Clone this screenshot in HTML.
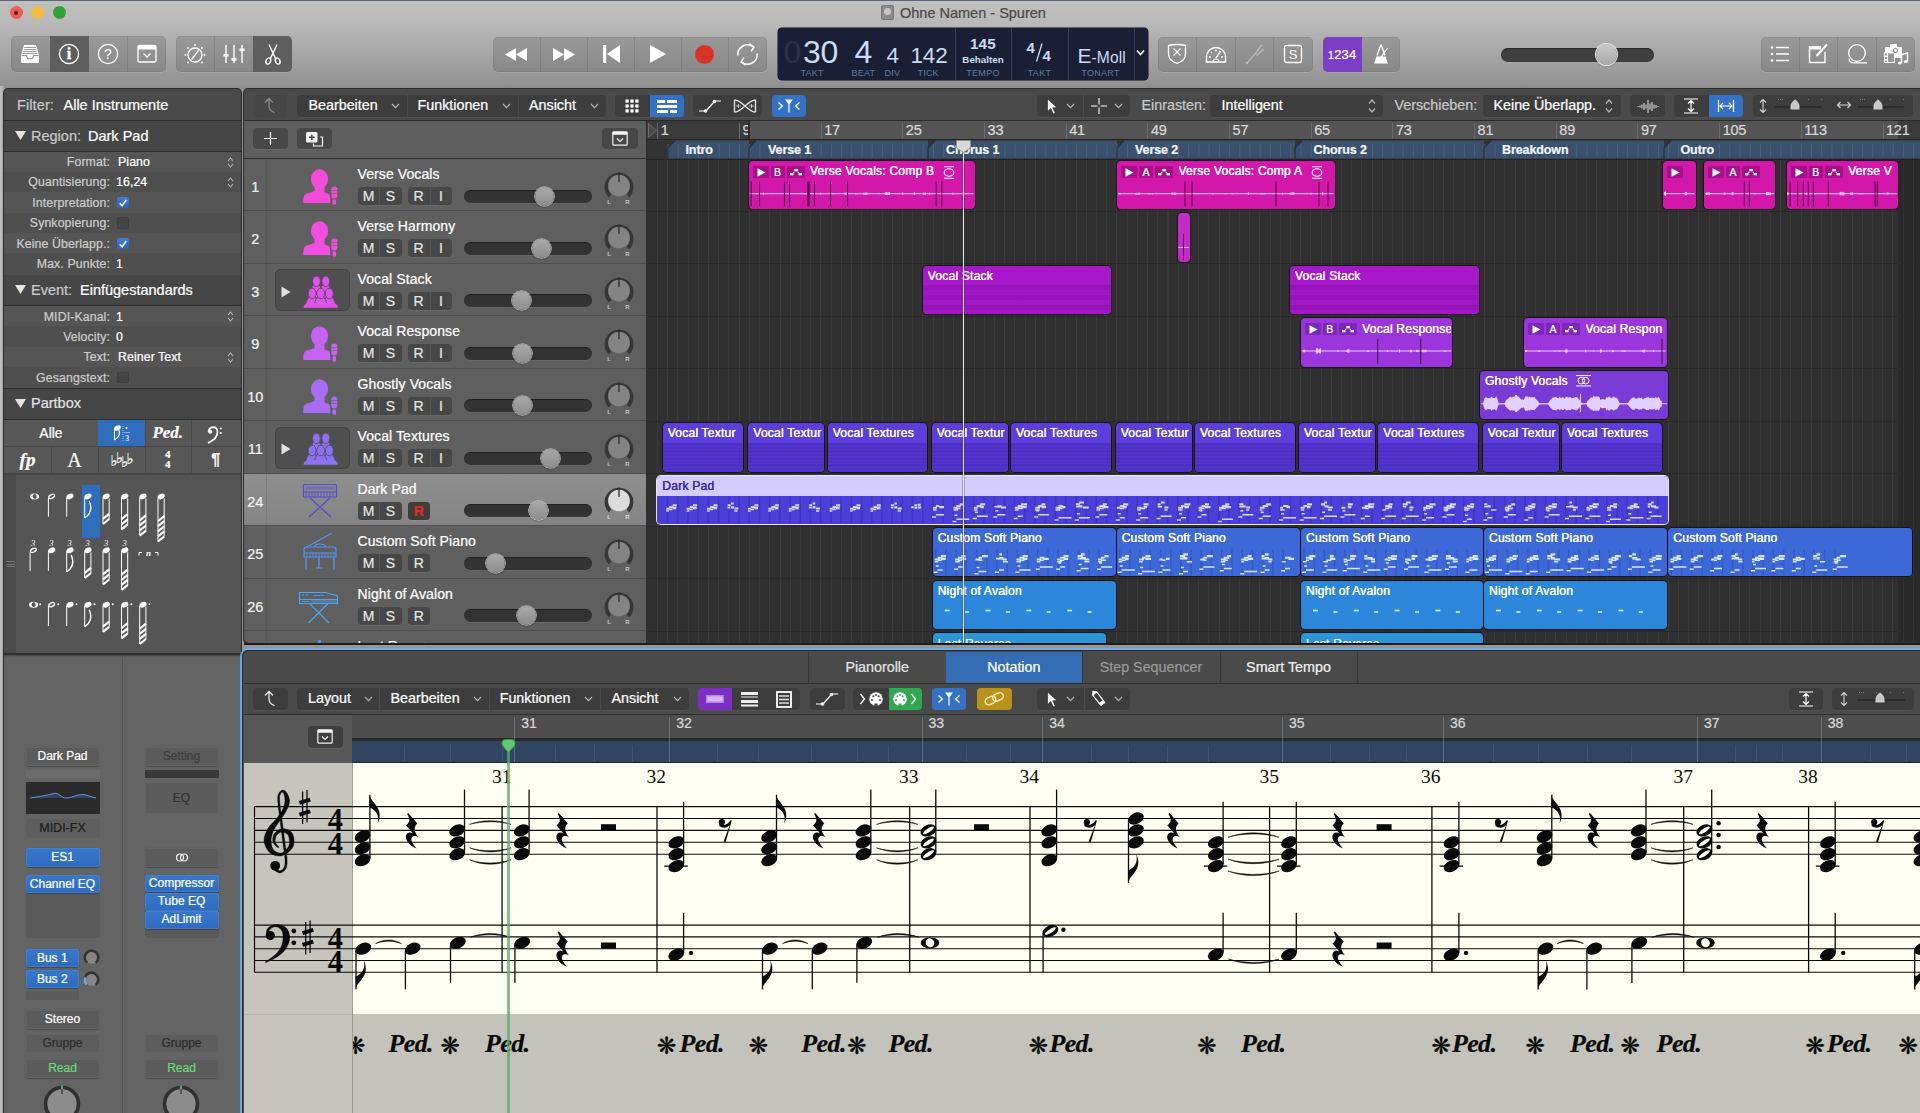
<!DOCTYPE html>
<html lang="de"><head><meta charset="utf-8"><title>Ohne Namen - Spuren</title>
<style>
*{box-sizing:border-box;margin:0;padding:0}
html,body{width:1920px;height:1113px;overflow:hidden;background:#979797;font-family:"Liberation Sans",sans-serif;}
body{position:relative;color:#fff;font-size:13px;-webkit-text-stroke:.22px}
div,svg{position:absolute}
.t{white-space:nowrap;line-height:1}
.c{text-align:center}
.r{text-align:right}
svg{overflow:visible}
svg text{font-family:"Liberation Sans",sans-serif}
svg text.sf{font-family:"Liberation Serif",serif}
</style></head>
<body>
<!-- p1_top -->
<div style="left:0px;top:0px;width:1920px;height:89px;background:linear-gradient(#c0c0be 0,#bababa 20px,#a6a6a6 55px,#939393 84px,#8a8a8a 89px)"></div>
<div style="left:0px;top:86px;width:3.5px;height:1030px;background:linear-gradient(90deg,#c2c2c2,#a2a2a2)"></div>
<div style="left:0px;top:0px;width:1920px;height:1px;background:#5d6680"></div>
<div style="left:9.5px;top:6px;width:13px;height:13px;border-radius:50%;background:#ee5b55"></div>
<div style="left:31.0px;top:6px;width:13px;height:13px;border-radius:50%;background:#f5bd3d"></div>
<div style="left:52.5px;top:6px;width:13px;height:13px;border-radius:50%;background:#2fa33a"></div>
<div style="left:14px;top:10.5px;width:4px;height:4px;border-radius:50%;background:#5a1010"></div>
<div style="left:881px;top:5px;width:13px;height:15px;background:#8a8a8a;border-radius:2px;border:1px solid #777"></div>
<div style="left:884px;top:8px;width:7px;height:7px;background:#c9c9c9;border-radius:50%"></div>
<div class="t" style="left:900px;top:6px;color:#4a4a4a;font-size:14.5px">Ohne Namen - Spuren</div>
<div style="left:11px;top:36px;width:155px;height:36px;background:rgba(60,60,60,.2);border-radius:5px;box-shadow:0 .5px 0 rgba(255,255,255,.25),inset 0 0 0 .5px rgba(0,0,0,.12)"></div>
<div style="left:49.75px;top:36px;width:38.75px;height:36px;background:#5e5e5e;border-radius:0"></div>
<div style="left:126.75px;top:36px;width:1px;height:36px;background:rgba(0,0,0,.10)"></div>
<svg style="left:19.375px;top:43px;" width="22" height="22" viewBox="0 0 22 22"><path d="M5 2h12l3 10v7a1 1 0 0 1-1 1H3a1 1 0 0 1-1-1v-7z" fill="#fff"/><path d="M5.2 4.5h11.6M4.7 6.5h12.6M4.2 8.5h13.6M3.7 10.5h14.6" stroke="#999" stroke-width="1"/><path d="M2.5 12.5h5l1 3h5l1-3h5" fill="none" stroke="#999" stroke-width="1.2"/></svg>
<svg style="left:58.125px;top:43px;" width="22" height="22" viewBox="0 0 22 22"><circle cx="11" cy="11" r="9.6" fill="none" stroke="#fff" stroke-width="1.3"/><text x="11" y="16.300" font-size="16" font-weight="bold" class="sf" text-anchor="middle" fill="#fff" stroke="#fff" stroke-width=".4">i</text></svg>
<svg style="left:96.875px;top:43px;" width="22" height="22" viewBox="0 0 22 22"><circle cx="11" cy="11" r="9.6" fill="none" stroke="#fff" stroke-width="1.2"/><text x="11" y="16" font-size="14" text-anchor="middle" fill="#fff">?</text></svg>
<svg style="left:135.625px;top:43px;" width="22" height="22" viewBox="0 0 22 22"><rect x="2" y="2.5" width="18" height="16.5" rx="1.5" fill="none" stroke="#fff" stroke-width="1.3"/><rect x="2" y="2.5" width="18" height="4" fill="#fff"/><path d="M7.5 10.5l3.5 3.5 3.5-3.5" fill="none" stroke="#fff" stroke-width="1.3"/></svg>
<div style="left:175.5px;top:36px;width:116.5px;height:36px;background:rgba(60,60,60,.2);border-radius:5px;box-shadow:0 .5px 0 rgba(255,255,255,.25),inset 0 0 0 .5px rgba(0,0,0,.12)"></div>
<div style="left:253.16666666666669px;top:36px;width:38.833333333333336px;height:36px;background:#5e5e5e;border-radius:0 5px 5px 0"></div>
<div style="left:213.83333333333334px;top:36px;width:1px;height:36px;background:rgba(0,0,0,.10)"></div>
<svg style="left:182.91666666666666px;top:42px;" width="24" height="24" viewBox="0 0 24 24"><circle cx="12" cy="13" r="7" fill="none" stroke="#fff" stroke-width="1.3"/><path d="M8.500 17.500l7-9" stroke="#fff" stroke-width="1.300"/><g fill="#fff"><circle cx="12" cy="3" r=".9"/><circle cx="5" cy="6" r=".9"/><circle cx="19" cy="6" r=".9"/><circle cx="2.5" cy="13" r=".9"/><circle cx="21.5" cy="13" r=".9"/><circle cx="5" cy="20.5" r=".9"/><circle cx="19" cy="20.5" r=".9"/></g></svg>
<svg style="left:221.75px;top:42px;" width="24" height="24" viewBox="0 0 24 24"><g stroke="#fff" stroke-width="1.4"><path d="M4 3v18M12 3v18M20 3v18"/></g><g fill="#fff"><rect x="1.5" y="12" width="5" height="2.6"/><rect x="9.5" y="16" width="5" height="2.6"/><rect x="17.5" y="6.5" width="5" height="2.6"/></g></svg>
<svg style="left:260.58333333333337px;top:42px;" width="24" height="24" viewBox="0 0 24 24"><g fill="none" stroke="#fff" stroke-width="1.4"><path d="M8 2.5l6.5 14M16 2.5L9.5 16.5"/><ellipse cx="7.300" cy="19" rx="2.200" ry="3.200" transform="rotate(25 7.300 19)"/><ellipse cx="16.700" cy="19" rx="2.200" ry="3.200" transform="rotate(-25 16.700 19)"/></g></svg>
<div style="left:492.5px;top:37px;width:274.5px;height:35px;background:rgba(60,60,60,.2);border-radius:5px;box-shadow:0 .5px 0 rgba(255,255,255,.25),inset 0 0 0 .5px rgba(0,0,0,.12)"></div>
<div style="left:539.5px;top:37px;width:1px;height:35px;background:rgba(0,0,0,.10)"></div>
<div style="left:587.0px;top:37px;width:1px;height:35px;background:rgba(0,0,0,.10)"></div>
<div style="left:634.0px;top:37px;width:1px;height:35px;background:rgba(0,0,0,.10)"></div>
<div style="left:680.5px;top:37px;width:1px;height:35px;background:rgba(0,0,0,.10)"></div>
<div style="left:727.5px;top:37px;width:1px;height:35px;background:rgba(0,0,0,.10)"></div>
<svg style="left:505.25px;top:47.5px;" width="22" height="13" viewBox="0 0 22 13"><path d="M11 0v13L0 6.500zM22 0v13L11 6.500z" fill="#fff"/></svg>
<svg style="left:552.75px;top:47.5px;" width="22" height="13" viewBox="0 0 22 13"><path d="M0 0v13l11-6.500zM11 0v13l11-6.500z" fill="#fff"/></svg>
<svg style="left:602.5px;top:45px;" width="17" height="18" viewBox="0 0 17 18"><rect x="0" y="0" width="3.200" height="18" fill="#fff"/><path d="M17 0v18L4 9z" fill="#fff"/></svg>
<svg style="left:648.75px;top:44px;" width="18" height="20" viewBox="0 0 18 20"><path d="M1 1v18l16-9z" fill="#fff"/></svg>
<div style="left:695.0px;top:44.5px;width:19px;height:19px;border-radius:50%;background:#d93226"></div>
<svg style="left:734.0px;top:40.5px;" width="27" height="27" viewBox="0 0 24 24"><g fill="none" stroke="#fff" stroke-width="1.3"><path d="M3.5 13a8.5 8.5 0 0 1 14-7.5"/><path d="M20.5 11a8.5 8.5 0 0 1-14 7.5"/><path d="M13.5 2.5l4.3 2.8-2.6 4"/><path d="M10.5 21.5l-4.3-2.8 2.6-4"/></g></svg>
<div style="left:777.5px;top:28px;width:370px;height:52px;background:#1b1f36;border-radius:4px;box-shadow:0 0 0 .5px #10121f"></div>
<div style="left:954.5px;top:28px;width:1px;height:52px;background:#343c5c"></div>
<div style="left:1011px;top:28px;width:1px;height:52px;background:#343c5c"></div>
<div style="left:1067.5px;top:28px;width:1px;height:52px;background:#343c5c"></div>
<div style="left:1133.5px;top:28px;width:1px;height:52px;background:#343c5c"></div>
<svg style="left:0px;top:0px;" width="1160" height="90" viewBox="0 0 1160 90"><text x="783.5" y="62.5" font-size="32" fill="#2b314c" text-anchor="start" >0</text><text x="803" y="62.5" font-size="32" fill="#c9dcf2" text-anchor="start" letter-spacing="-.3">30</text><text x="854.5" y="62.5" font-size="32" fill="#c9dcf2" text-anchor="start" >4</text><text x="886.5" y="62.5" font-size="22.5" fill="#c9dcf2" text-anchor="start" >4</text><text x="910.5" y="62.5" font-size="22.5" fill="#c9dcf2" text-anchor="start" letter-spacing="-.2">142</text><text x="800.5" y="76.3" font-size="9" fill="#62799a" text-anchor="start" letter-spacing=".2">TAKT</text><text x="851.5" y="76.3" font-size="9" fill="#62799a" text-anchor="start" letter-spacing=".2">BEAT</text><text x="884.5" y="76.3" font-size="9" fill="#62799a" text-anchor="start" letter-spacing=".2">DIV</text><text x="917.5" y="76.3" font-size="9" fill="#62799a" text-anchor="start" letter-spacing=".2">TICK</text><text x="983" y="48.8" font-size="15.2" fill="#c9dcf2" text-anchor="middle" font-weight="bold" letter-spacing=".3">145</text><text x="983" y="62.5" font-size="9.8" fill="#c9dcf2" text-anchor="middle" font-weight="bold">Behalten</text><text x="983" y="76.3" font-size="9" fill="#62799a" text-anchor="middle" letter-spacing=".3">TEMPO</text><text x="1026.5" y="53" font-size="15" fill="#c9dcf2" text-anchor="start" font-weight="bold">4</text><path d="M1036.500 61.500L1042 43.500" stroke="#c9dcf2" stroke-width="1.300"/><text x="1042.5" y="61" font-size="15" fill="#c9dcf2" text-anchor="start" font-weight="bold">4</text><text x="1039.5" y="76.3" font-size="9" fill="#62799a" text-anchor="middle" letter-spacing=".3">TAKT</text><text x="1077.5" y="62.5" font-size="21" fill="#c9dcf2" text-anchor="start" >E</text><text x="1091.5" y="62.5" font-size="15.6" fill="#c9dcf2" text-anchor="start" letter-spacing=".1">-Moll</text><text x="1100.5" y="76.3" font-size="9" fill="#62799a" text-anchor="middle" letter-spacing=".3">TONART</text></svg>
<svg style="left:1136px;top:49px;" width="9" height="8" viewBox="0 0 9 8"><path d="M1 1.5l3.5 4 3.5-4" fill="none" stroke="#fff" stroke-width="1.6"/></svg>
<div style="left:1158px;top:37px;width:154.5px;height:35px;background:rgba(60,60,60,.2);border-radius:5px;box-shadow:0 .5px 0 rgba(255,255,255,.25),inset 0 0 0 .5px rgba(0,0,0,.12)"></div>
<div style="left:1196.125px;top:37px;width:1px;height:35px;background:rgba(0,0,0,.10)"></div>
<div style="left:1234.75px;top:37px;width:1px;height:35px;background:rgba(0,0,0,.10)"></div>
<div style="left:1273.375px;top:37px;width:1px;height:35px;background:rgba(0,0,0,.10)"></div>
<svg style="left:1166.3125px;top:42px;" width="22" height="24" viewBox="0 0 22 24"><path d="M2.500 3.500q8.500-2 17 0v8.500c0 5-4 8-8.500 9.500c-4.500-1.500-8.500-4.500-8.500-9.500z" fill="none" stroke="#fff" stroke-width="1.3"/><path d="M7.500 6.500l7 7M14.500 6.500l-7 7" stroke="#fff" stroke-width="1.3"/></svg>
<svg style="left:1203.9375px;top:43px;" width="24" height="22" viewBox="0 0 24 22"><path d="M2.500 19v-5a9.500 9.500 0 0 1 19 0v5z" fill="none" stroke="#fff" stroke-width="1.3"/><path d="M12 15l4.500-7" stroke="#fff" stroke-width="1.5"/><g fill="#fff"><circle cx="6" cy="14" r=".9"/><circle cx="7.500" cy="9.500" r=".9"/><circle cx="12" cy="7.500" r=".9"/><circle cx="18" cy="14" r=".9"/></g><path d="M9 19a3 3 0 0 1 6 0" fill="none" stroke="#fff" stroke-width="1.2"/></svg>
<svg style="left:1243.5625px;top:43px;" width="22" height="22" viewBox="0 0 22 22"><g fill="none" stroke="#c4c4c4" stroke-width="1.3" opacity=".8"><path d="M3 20l8-9M11 11l6.500-9M12.500 12.500l7-6"/></g><circle cx="3" cy="20" r="1.200" fill="#c4c4c4"/></svg>
<svg style="left:1283.1875px;top:44px;" width="20" height="20" viewBox="0 0 20 20"><rect x="1.500" y="1.500" width="17" height="17" rx="2" fill="none" stroke="#fff" stroke-width="1.3"/><text x="10" y="14.500" font-size="13" text-anchor="middle" fill="#fff">S</text></svg>
<div style="left:1323px;top:37px;width:77px;height:35px;background:rgba(60,60,60,.2);border-radius:5px;box-shadow:0 .5px 0 rgba(255,255,255,.25),inset 0 0 0 .5px rgba(0,0,0,.12)"></div>
<div style="left:1323px;top:37px;width:38.5px;height:35px;background:#7b3fc6;border-radius:5px 0 0 5px"></div>
<div class="t c" style="left:1323px;top:37px;width:38.5px;height:35px;color:#fff;font-size:13px;line-height:35px;letter-spacing:.2px"><span style="font-size:10.5px">1</span>234</div>
<svg style="left:1370.75px;top:42px;" width="20" height="24" viewBox="0 0 20 24"><path d="M10 2.500L6 13.500M10 2.500L14 13.500" fill="none" stroke="#fff" stroke-width="1.300"/><path d="M5.500 14.500h9l2.500 7H3z" fill="#fff"/><path d="M9.500 16L16.500 6" stroke="#fff" stroke-width="1.300"/></svg>
<div style="left:1501px;top:47.5px;width:152.5px;height:14.5px;background:#3f3f3f;border-radius:8px;box-shadow:inset 0 1px 1px rgba(0,0,0,.4)"></div>
<div style="left:1595.5px;top:44px;width:21px;height:21px;background:linear-gradient(#c9c9c9,#a9a9a9);border-radius:50%;box-shadow:0 0 0 1px #e6e6e6,0 1px 2px rgba(0,0,0,.5)"></div>
<div style="left:1760.5px;top:36.5px;width:154.5px;height:35.5px;background:rgba(60,60,60,.2);border-radius:5px;box-shadow:0 .5px 0 rgba(255,255,255,.25),inset 0 0 0 .5px rgba(0,0,0,.12)"></div>
<div style="left:1798.625px;top:36.5px;width:1px;height:35.5px;background:rgba(0,0,0,.10)"></div>
<div style="left:1837.25px;top:36.5px;width:1px;height:35.5px;background:rgba(0,0,0,.10)"></div>
<div style="left:1875.875px;top:36.5px;width:1px;height:35.5px;background:rgba(0,0,0,.10)"></div>
<svg style="left:1769.8125px;top:45px;" width="20" height="18" viewBox="0 0 20 18"><g fill="#fff"><circle cx="2" cy="2.500" r="1.300"/><circle cx="2" cy="9" r="1.300"/><circle cx="2" cy="15.500" r="1.300"/></g><path d="M6 2.500h13M6 9h13M6 15.500h13" stroke="#fff" stroke-width="1.400"/></svg>
<svg style="left:1807.4375px;top:42px;" width="22" height="22" viewBox="0 0 22 22"><path d="M14 5H2.500v15.500H18V10" fill="none" stroke="#fff" stroke-width="1.400"/><rect x="2" y="4.500" width="12" height="3" fill="#fff"/><path d="M9.500 14L20 2.500" stroke="#fff" stroke-width="2"/></svg>
<svg style="left:1846.0625px;top:43px;" width="22" height="22" viewBox="0 0 22 22"><circle cx="11" cy="10" r="8.300" fill="none" stroke="#fff" stroke-width="1.300"/><path d="M3 15.500c0 3 2 4.300 5 4.300h13" fill="none" stroke="#fff" stroke-width="1.300"/></svg>
<svg style="left:1882.6875px;top:41px;" width="27" height="26" viewBox="0 0 27 26"><g fill="#fff"><rect x="2" y="6" width="17" height="11" rx="1"/><rect x="7" y="3" width="7" height="4" rx="1"/><rect x="1" y="11" width="11" height="11"/></g><circle cx="12.500" cy="9.500" r="2.600" fill="#999"/><circle cx="12.500" cy="9.500" r="1.400" fill="#fff"/><g fill="#999"><rect x="2" y="12.500" width="2" height="2"/><rect x="2" y="16" width="2" height="2"/><rect x="2" y="19.500" width="2" height="1.500"/><rect x="5" y="12.500" width="6" height="8.500"/></g><g stroke="#fff" stroke-width="1.500" fill="none"><path d="M18.500 22v-8.500l6-1.500v8.500"/></g><ellipse cx="16.800" cy="22" rx="2" ry="1.600" fill="#fff"/><ellipse cx="22.800" cy="20.500" rx="2" ry="1.600" fill="#fff"/><path d="M17.500 12l8-2v11" fill="none" stroke="#999" stroke-width=".1"/></svg>
<!-- p2_insp -->
<div style="left:3px;top:88px;width:238.5px;height:567px;background:#2c2c2c;border-radius:5px 5px 0 0"></div>
<div style="left:4px;top:151.5px;width:236.5px;height:123px;background:#4f4f4f"></div>
<div style="left:4px;top:306px;width:236.5px;height:82px;background:#4f4f4f"></div>
<div style="left:4px;top:89px;width:236.5px;height:31px;background:#4a4a4a;border-radius:4px 4px 0 0"></div>
<div class="t" style="left:17px;top:97.5px;font-size:14px;color:#c9c9c9;font-size:14.500px;letter-spacing:.1px">Filter:</div>
<div class="t" style="left:63.5px;top:97.5px;font-size:14px;color:#fff;font-size:14.500px;letter-spacing:0">Alle Instrumente</div>
<div style="left:4px;top:121px;width:236.5px;height:29.5px;background:#464646"></div>
<svg style="left:15px;top:131px;" width="11" height="9" viewBox="0 0 11 9"><path d="M0 0h11L5.500 9z" fill="#e4e4e4"/></svg>
<div class="t" style="left:31px;top:128.5px;font-size:14px;color:#c9c9c9;font-size:14.500px">Region:</div>
<div class="t" style="left:88px;top:128.5px;font-size:14px;color:#fff;font-size:14.500px">Dark Pad</div>
<div style="left:4px;top:151.5px;width:236.5px;height:20.4px;background:#555555"></div>
<div class="t r" style="left:4px;top:156.0px;width:106px;height:12px;color:#cdcdcd;font-size:12.300px;line-height:12px;letter-spacing:.12px">Format:</div>
<div class="t" style="left:118px;top:156.0px;color:#fff;font-size:12.300px;letter-spacing:.1px">Piano</div>
<svg style="left:227px;top:156.5px;" width="7" height="11" viewBox="0 0 7 11"><path d="M1 4l2.500-3 2.500 3M1 7l2.500 3 2.500-3" fill="none" stroke="#b8b8b8" stroke-width="1.100"/></svg>
<div style="left:4px;top:171.9px;width:236.5px;height:20.4px;background:#4f4f4f"></div>
<div class="t r" style="left:4px;top:176.4px;width:106px;height:12px;color:#cdcdcd;font-size:12.300px;line-height:12px;letter-spacing:.12px">Quantisierung:</div>
<div class="t" style="left:116px;top:176.4px;color:#fff;font-size:12.300px;letter-spacing:.1px">16,24</div>
<svg style="left:227px;top:176.9px;" width="7" height="11" viewBox="0 0 7 11"><path d="M1 4l2.500-3 2.500 3M1 7l2.500 3 2.500-3" fill="none" stroke="#b8b8b8" stroke-width="1.100"/></svg>
<div style="left:4px;top:192.3px;width:236.5px;height:20.4px;background:#555555"></div>
<div class="t r" style="left:4px;top:196.8px;width:106px;height:12px;color:#cdcdcd;font-size:12.300px;line-height:12px;letter-spacing:.12px">Interpretation:</div>
<div style="left:117px;top:196.8px;width:11.5px;height:11.5px;background:linear-gradient(#3c7fdb,#2a63c0);border-radius:2.500px"></div><svg style="left:117px;top:196.8px;" width="12" height="12" viewBox="0 0 12 12"><path d="M2.800 6.200l2.300 2.600 4.200-5.800" fill="none" stroke="#fff" stroke-width="1.500"/></svg>
<div style="left:4px;top:212.7px;width:236.5px;height:20.4px;background:#4f4f4f"></div>
<div class="t r" style="left:4px;top:217.2px;width:106px;height:12px;color:#cdcdcd;font-size:12.300px;line-height:12px;letter-spacing:.12px">Synkopierung:</div>
<div style="left:117px;top:217.2px;width:11.5px;height:11.5px;background:#454545;border-radius:2.500px;box-shadow:inset 0 0 0 .5px #3a3a3a"></div>
<div style="left:4px;top:233.1px;width:236.5px;height:20.4px;background:#555555"></div>
<div class="t r" style="left:4px;top:237.6px;width:106px;height:12px;color:#cdcdcd;font-size:12.300px;line-height:12px;letter-spacing:.12px">Keine Überlapp.:</div>
<div style="left:117px;top:237.6px;width:11.5px;height:11.5px;background:linear-gradient(#3c7fdb,#2a63c0);border-radius:2.500px"></div><svg style="left:117px;top:237.6px;" width="12" height="12" viewBox="0 0 12 12"><path d="M2.800 6.200l2.300 2.600 4.200-5.800" fill="none" stroke="#fff" stroke-width="1.500"/></svg>
<div style="left:4px;top:253.5px;width:236.5px;height:20.4px;background:#4f4f4f"></div>
<div class="t r" style="left:4px;top:258.0px;width:106px;height:12px;color:#cdcdcd;font-size:12.300px;line-height:12px;letter-spacing:.12px">Max. Punkte:</div>
<div class="t" style="left:116px;top:258.0px;color:#fff;font-size:12.300px;letter-spacing:.1px">1</div>
<div style="left:4px;top:274.5px;width:236.5px;height:30.5px;background:#464646"></div>
<svg style="left:15px;top:285px;" width="11" height="9" viewBox="0 0 11 9"><path d="M0 0h11L5.500 9z" fill="#e4e4e4"/></svg>
<div class="t" style="left:31px;top:282.5px;font-size:14px;color:#c9c9c9;font-size:14.500px">Event:</div>
<div class="t" style="left:80px;top:282.5px;font-size:14px;color:#fff;font-size:14.500px">Einfügestandards</div>
<div style="left:4px;top:306.0px;width:236.5px;height:20.4px;background:#555555"></div>
<div class="t r" style="left:4px;top:310.5px;width:106px;height:12px;color:#cdcdcd;font-size:12.300px;line-height:12px;letter-spacing:.12px">MIDI-Kanal:</div>
<div class="t" style="left:116px;top:310.5px;color:#fff;font-size:12.300px;letter-spacing:.1px">1</div>
<svg style="left:227px;top:311.0px;" width="7" height="11" viewBox="0 0 7 11"><path d="M1 4l2.500-3 2.500 3M1 7l2.500 3 2.500-3" fill="none" stroke="#b8b8b8" stroke-width="1.100"/></svg>
<div style="left:4px;top:326.4px;width:236.5px;height:20.4px;background:#4f4f4f"></div>
<div class="t r" style="left:4px;top:330.9px;width:106px;height:12px;color:#cdcdcd;font-size:12.300px;line-height:12px;letter-spacing:.12px">Velocity:</div>
<div class="t" style="left:116px;top:330.9px;color:#fff;font-size:12.300px;letter-spacing:.1px">0</div>
<div style="left:4px;top:346.8px;width:236.5px;height:20.4px;background:#555555"></div>
<div class="t r" style="left:4px;top:351.3px;width:106px;height:12px;color:#cdcdcd;font-size:12.300px;line-height:12px;letter-spacing:.12px">Text:</div>
<div class="t" style="left:118px;top:351.3px;color:#fff;font-size:12.300px;letter-spacing:.1px">Reiner Text</div>
<svg style="left:227px;top:351.8px;" width="7" height="11" viewBox="0 0 7 11"><path d="M1 4l2.500-3 2.500 3M1 7l2.500 3 2.500-3" fill="none" stroke="#b8b8b8" stroke-width="1.100"/></svg>
<div style="left:4px;top:367.2px;width:236.5px;height:20.4px;background:#4f4f4f"></div>
<div class="t r" style="left:4px;top:371.7px;width:106px;height:12px;color:#cdcdcd;font-size:12.300px;line-height:12px;letter-spacing:.12px">Gesangstext:</div>
<div style="left:117px;top:371.7px;width:11.5px;height:11.5px;background:#454545;border-radius:2.500px;box-shadow:inset 0 0 0 .5px #3a3a3a"></div>
<div style="left:4px;top:388.5px;width:236.5px;height:30.5px;background:#464646"></div>
<svg style="left:15px;top:399px;" width="11" height="9" viewBox="0 0 11 9"><path d="M0 0h11L5.500 9z" fill="#e4e4e4"/></svg>
<div class="t" style="left:31px;top:396px;font-size:14px;color:#e2e2e2;font-size:14.500px">Partbox</div>
<div style="left:4px;top:420px;width:236.5px;height:53px;background:#575757"></div>
<div style="left:4px;top:446px;width:236.5px;height:1px;background:#474747"></div>
<div style="left:4px;top:473px;width:236.5px;height:1.5px;background:#444"></div>
<div style="left:98px;top:420px;width:46.5px;height:26px;background:#2f6dbd"></div>
<div style="left:144.5px;top:420px;width:1px;height:26px;background:#4a4a4a"></div>
<div style="left:191px;top:420px;width:1px;height:26px;background:#4a4a4a"></div>
<div style="left:51px;top:447px;width:1px;height:26px;background:#4a4a4a"></div>
<div style="left:98px;top:447px;width:1px;height:26px;background:#4a4a4a"></div>
<div style="left:144.5px;top:447px;width:1px;height:26px;background:#4a4a4a"></div>
<div style="left:191px;top:447px;width:1px;height:26px;background:#4a4a4a"></div>
<div class="t c" style="left:4px;top:426px;width:94px;height:14px;color:#fff;font-size:14px;line-height:14px">Alle</div>
<svg style="left:110px;top:424px;" width="24" height="20" viewBox="0 0 24 20"><path d="M4.500 4v12" stroke="#fff" stroke-width="1"/><ellipse cx="7.500" cy="4" rx="3.500" ry="2.400" fill="#fff" transform="rotate(-25 7.500 4)"/><path d="M4.500 16c5-3 6-7 4-11" fill="none" stroke="#fff" stroke-width="1.200"/><path d="M13 2v16" stroke="#9fc0ea" stroke-width="1" stroke-dasharray="1 1"/><circle cx="16.500" cy="4" r="1" fill="#fff"/><path d="M14 8.500h6" stroke="#9fc0ea" stroke-width=".8"/><text x="17" y="17" font-size="8.500" font-weight="bold" class="sf" text-anchor="middle" fill="#cfe0f5">3</text></svg>
<div class="t c" style="left:144.5px;top:423px;width:46.5px;height:20px;color:#fff;font-size:17px;line-height:20px;font-family:'Liberation Serif',serif;font-style:italic;font-weight:bold">Ped.</div>
<svg style="left:206px;top:424px;" width="20" height="20" viewBox="0 0 20 20"><path d="M2.500 7.500c0-5 9-6.500 9 .5c0 5-4 8.500-9.500 11" fill="none" stroke="#fff" stroke-width="1.800"/><circle cx="4.200" cy="7.800" r="2" fill="#fff"/><circle cx="14.800" cy="4.500" r="1.100" fill="#fff"/><circle cx="14.800" cy="9" r="1.100" fill="#fff"/></svg>
<div class="t c" style="left:4px;top:449px;width:47px;height:22px;color:#fff;font-size:19px;line-height:22px;font-family:'Liberation Serif',serif;font-style:italic;font-weight:bold">fp</div>
<div class="t c" style="left:51px;top:449px;width:47px;height:22px;color:#fff;font-size:20px;line-height:22px;font-family:'Liberation Serif',serif">A</div>
<div class="t c" style="left:98px;top:449px;width:46.5px;height:22px;color:#fff;font-size:14.500px;font-weight:bold;line-height:22px;font-family:'DejaVu Sans',sans-serif;letter-spacing:-1.500px"><span style="position:relative;top:1px">♭</span><span style="position:relative;top:-2px">♭</span><span style="position:relative;top:2px">♭</span><span style="position:relative;top:-1px">♭</span></div>
<div class="t c" style="left:144.5px;top:449px;width:46.5px;height:11px;color:#fff;font-size:11px;line-height:11px;font-family:'Liberation Serif',serif;font-weight:bold">4</div>
<div class="t c" style="left:144.5px;top:459px;width:46.5px;height:11px;color:#fff;font-size:11px;line-height:11px;font-family:'Liberation Serif',serif;font-weight:bold">4</div>
<div class="t c" style="left:191px;top:449px;width:49.5px;height:22px;color:#fff;font-size:16px;line-height:22px;font-weight:bold">¶</div>
<div style="left:4px;top:474.5px;width:236.5px;height:178.5px;background:#555"></div>
<div style="left:4px;top:474.5px;width:12px;height:178.5px;background:#4b4b4b"></div>
<div style="left:7px;top:561px;width:8px;height:1px;background:#777"></div>
<div style="left:7px;top:563.5px;width:8px;height:1px;background:#777"></div>
<div style="left:7px;top:566px;width:8px;height:1px;background:#777"></div>
<div style="left:82px;top:484.5px;width:18px;height:53.5px;background:#2f6dbd"></div>
<svg style="left:0px;top:0px;" width="241" height="655" viewBox="0 0 241 655"><ellipse cx="34.6" cy="496.4" rx="4.600" ry="3" fill="#fff"/><ellipse cx="34.6" cy="496.4" rx="2" ry="2.300" fill="#555" transform="rotate(-30 34.6 496.4)"/><path d="M48.4 497.4V516.7" stroke="#fff" stroke-width="1"/><ellipse cx="51.699999999999996" cy="496.4" rx="3.700" ry="2.500" fill="#fff" transform="rotate(-25 51.699999999999996 496.4)"/><ellipse cx="51.699999999999996" cy="496.4" rx="2.600" ry="1" fill="#555" transform="rotate(-30 51.699999999999996 496.4)"/><path d="M66.7 497.4V516.7" stroke="#fff" stroke-width="1"/><ellipse cx="70.0" cy="496.4" rx="3.700" ry="2.600" fill="#fff" transform="rotate(-25 70.0 496.4)"/><path d="M84.7 497.4V518" stroke="#fff" stroke-width="1"/><ellipse cx="88.0" cy="496.4" rx="3.700" ry="2.600" fill="#fff" transform="rotate(-25 88.0 496.4)"/><path d="M84.7 518c6-4 8-9 4.500-17" fill="none" stroke="#fff" stroke-width="1.300"/><path d="M103 497.4V524" stroke="#fff" stroke-width="1"/><ellipse cx="106.3" cy="496.4" rx="3.700" ry="2.600" fill="#fff" transform="rotate(-25 106.3 496.4)"/><path d="M103 524.0l6.200-5" stroke="#fff" stroke-width="2.200"/><path d="M103 518.9l6.200-5" stroke="#fff" stroke-width="2.200"/><path d="M109.2 519V498.4" stroke="#fff" stroke-width="1"/><path d="M121.5 497.4V529.4" stroke="#fff" stroke-width="1"/><ellipse cx="124.8" cy="496.4" rx="3.700" ry="2.600" fill="#fff" transform="rotate(-25 124.8 496.4)"/><path d="M121.5 529.4l6.200-5" stroke="#fff" stroke-width="2.200"/><path d="M121.5 524.3l6.200-5" stroke="#fff" stroke-width="2.200"/><path d="M121.5 519.1999999999999l6.200-5" stroke="#fff" stroke-width="2.200"/><path d="M127.7 524.4V498.4" stroke="#fff" stroke-width="1"/><path d="M139.7 497.4V535.6" stroke="#fff" stroke-width="1"/><ellipse cx="143.0" cy="496.4" rx="3.700" ry="2.600" fill="#fff" transform="rotate(-25 143.0 496.4)"/><path d="M139.7 535.6l6.200-5" stroke="#fff" stroke-width="2.200"/><path d="M139.7 530.5l6.200-5" stroke="#fff" stroke-width="2.200"/><path d="M139.7 525.4l6.200-5" stroke="#fff" stroke-width="2.200"/><path d="M139.7 520.3000000000001l6.200-5" stroke="#fff" stroke-width="2.200"/><path d="M145.89999999999998 530.6V498.4" stroke="#fff" stroke-width="1"/><path d="M158 497.4V541.5" stroke="#fff" stroke-width="1"/><ellipse cx="161.3" cy="496.4" rx="3.700" ry="2.600" fill="#fff" transform="rotate(-25 161.3 496.4)"/><path d="M158 541.5l6.200-5" stroke="#fff" stroke-width="2.200"/><path d="M158 536.4l6.200-5" stroke="#fff" stroke-width="2.200"/><path d="M158 531.3l6.200-5" stroke="#fff" stroke-width="2.200"/><path d="M158 526.2l6.200-5" stroke="#fff" stroke-width="2.200"/><path d="M158 521.1l6.200-5" stroke="#fff" stroke-width="2.200"/><path d="M164.2 536.5V498.4" stroke="#fff" stroke-width="1"/><path d="M30.1 551.3V571" stroke="#fff" stroke-width="1"/><ellipse cx="33.4" cy="550.3" rx="3.700" ry="2.500" fill="#fff" transform="rotate(-25 33.4 550.3)"/><ellipse cx="33.4" cy="550.3" rx="2.600" ry="1" fill="#555" transform="rotate(-30 33.4 550.3)"/><text x="33.1" y="545.8" font-size="8.500" font-style="italic" class="sf" text-anchor="middle" fill="#fff">3</text><path d="M48.4 551.3V571" stroke="#fff" stroke-width="1"/><ellipse cx="51.699999999999996" cy="550.3" rx="3.700" ry="2.600" fill="#fff" transform="rotate(-25 51.699999999999996 550.3)"/><text x="51.4" y="545.8" font-size="8.500" font-style="italic" class="sf" text-anchor="middle" fill="#fff">3</text><path d="M66.7 551.3V572" stroke="#fff" stroke-width="1"/><ellipse cx="70.0" cy="550.3" rx="3.700" ry="2.600" fill="#fff" transform="rotate(-25 70.0 550.3)"/><path d="M66.7 572c6-4 8-9 4.500-17" fill="none" stroke="#fff" stroke-width="1.300"/><text x="69.7" y="545.8" font-size="8.500" font-style="italic" class="sf" text-anchor="middle" fill="#fff">3</text><path d="M84.7 551.3V578" stroke="#fff" stroke-width="1"/><ellipse cx="88.0" cy="550.3" rx="3.700" ry="2.600" fill="#fff" transform="rotate(-25 88.0 550.3)"/><path d="M84.7 578.0l6.200-5" stroke="#fff" stroke-width="2.200"/><path d="M84.7 572.9l6.200-5" stroke="#fff" stroke-width="2.200"/><path d="M90.9 573V552.3" stroke="#fff" stroke-width="1"/><text x="87.7" y="545.8" font-size="8.500" font-style="italic" class="sf" text-anchor="middle" fill="#fff">3</text><path d="M103 551.3V584.5" stroke="#fff" stroke-width="1"/><ellipse cx="106.3" cy="550.3" rx="3.700" ry="2.600" fill="#fff" transform="rotate(-25 106.3 550.3)"/><path d="M103 584.5l6.200-5" stroke="#fff" stroke-width="2.200"/><path d="M103 579.4l6.200-5" stroke="#fff" stroke-width="2.200"/><path d="M103 574.3l6.200-5" stroke="#fff" stroke-width="2.200"/><path d="M109.2 579.5V552.3" stroke="#fff" stroke-width="1"/><text x="106.0" y="545.8" font-size="8.500" font-style="italic" class="sf" text-anchor="middle" fill="#fff">3</text><path d="M121.5 551.3V590" stroke="#fff" stroke-width="1"/><ellipse cx="124.8" cy="550.3" rx="3.700" ry="2.600" fill="#fff" transform="rotate(-25 124.8 550.3)"/><path d="M121.5 590.0l6.200-5" stroke="#fff" stroke-width="2.200"/><path d="M121.5 584.9l6.200-5" stroke="#fff" stroke-width="2.200"/><path d="M121.5 579.8l6.200-5" stroke="#fff" stroke-width="2.200"/><path d="M121.5 574.7l6.200-5" stroke="#fff" stroke-width="2.200"/><path d="M127.7 585V552.3" stroke="#fff" stroke-width="1"/><text x="124.5" y="545.8" font-size="8.500" font-style="italic" class="sf" text-anchor="middle" fill="#fff">3</text><path d="M139 555.500v-3h3M158 555.500v-3h-3" fill="none" stroke="#fff" stroke-width="1"/><text x="148.500" y="555.500" font-size="9" font-style="italic" font-weight="bold" class="sf" text-anchor="middle" fill="#fff">n</text><ellipse cx="33.6" cy="604.7" rx="4.600" ry="3" fill="#fff"/><ellipse cx="33.6" cy="604.7" rx="2" ry="2.300" fill="#555" transform="rotate(-30 33.6 604.7)"/><circle cx="40.1" cy="604.2" r="1" fill="#fff"/><path d="M48.4 605.7V626" stroke="#fff" stroke-width="1"/><ellipse cx="51.699999999999996" cy="604.7" rx="3.700" ry="2.500" fill="#fff" transform="rotate(-25 51.699999999999996 604.7)"/><ellipse cx="51.699999999999996" cy="604.7" rx="2.600" ry="1" fill="#555" transform="rotate(-30 51.699999999999996 604.7)"/><circle cx="58.199999999999996" cy="604.2" r="1" fill="#fff"/><path d="M66.7 605.7V626" stroke="#fff" stroke-width="1"/><ellipse cx="70.0" cy="604.7" rx="3.700" ry="2.600" fill="#fff" transform="rotate(-25 70.0 604.7)"/><circle cx="76.5" cy="604.2" r="1" fill="#fff"/><path d="M84.7 605.7V626.7" stroke="#fff" stroke-width="1"/><ellipse cx="88.0" cy="604.7" rx="3.700" ry="2.600" fill="#fff" transform="rotate(-25 88.0 604.7)"/><path d="M84.7 626.7c6-4 8-9 4.500-17" fill="none" stroke="#fff" stroke-width="1.300"/><circle cx="94.5" cy="604.2" r="1" fill="#fff"/><path d="M103 605.7V631.8" stroke="#fff" stroke-width="1"/><ellipse cx="106.3" cy="604.7" rx="3.700" ry="2.600" fill="#fff" transform="rotate(-25 106.3 604.7)"/><path d="M103 631.8l6.200-5" stroke="#fff" stroke-width="2.200"/><path d="M103 626.6999999999999l6.200-5" stroke="#fff" stroke-width="2.200"/><path d="M109.2 626.8V606.7" stroke="#fff" stroke-width="1"/><circle cx="112.8" cy="604.2" r="1" fill="#fff"/><path d="M121.5 605.7V638.4" stroke="#fff" stroke-width="1"/><ellipse cx="124.8" cy="604.7" rx="3.700" ry="2.600" fill="#fff" transform="rotate(-25 124.8 604.7)"/><path d="M121.5 638.4l6.200-5" stroke="#fff" stroke-width="2.200"/><path d="M121.5 633.3l6.200-5" stroke="#fff" stroke-width="2.200"/><path d="M121.5 628.1999999999999l6.200-5" stroke="#fff" stroke-width="2.200"/><path d="M127.7 633.4V606.7" stroke="#fff" stroke-width="1"/><circle cx="131.3" cy="604.2" r="1" fill="#fff"/><path d="M139.7 605.7V644" stroke="#fff" stroke-width="1"/><ellipse cx="143.0" cy="604.7" rx="3.700" ry="2.600" fill="#fff" transform="rotate(-25 143.0 604.7)"/><path d="M139.7 644.0l6.200-5" stroke="#fff" stroke-width="2.200"/><path d="M139.7 638.9l6.200-5" stroke="#fff" stroke-width="2.200"/><path d="M139.7 633.8l6.200-5" stroke="#fff" stroke-width="2.200"/><path d="M139.7 628.7l6.200-5" stroke="#fff" stroke-width="2.200"/><path d="M145.89999999999998 639V606.7" stroke="#fff" stroke-width="1"/><circle cx="149.5" cy="604.2" r="1" fill="#fff"/></svg>
<!-- p3_strips -->
<div style="left:3px;top:653px;width:238.5px;height:460px;background:#2e2e2e"></div>
<div style="left:4px;top:654.5px;width:236.5px;height:460px;background:#646464"></div>
<div style="left:122px;top:654.5px;width:1px;height:460px;background:#505050"></div>
<div style="left:4px;top:654.5px;width:236.5px;height:2px;background:linear-gradient(#4a4a4a,#646464)"></div>
<div class="t c" style="left:25.5px;top:747px;width:74px;height:18.5px;border-radius:3px;font-size:12px;line-height:18.500px;background:#5b5b5b;box-shadow:inset 0 0 0 .5px #6e6e6e,0 .5px 1px rgba(0,0,0,.25);color:#fff">Dark Pad</div>
<div class="t c" style="left:144.5px;top:747px;width:74px;height:18.5px;border-radius:3px;font-size:12px;line-height:18.500px;background:#5b5b5b;box-shadow:inset 0 0 0 .5px #6e6e6e,0 .5px 1px rgba(0,0,0,.25);color:#3c3c3c">Setting</div>
<div style="left:25.5px;top:770px;width:74px;height:8px;background:#6c6c6c;border-radius:1px"></div>
<div style="left:144.5px;top:770px;width:74px;height:8px;background:#393939;border-radius:1px"></div>
<div style="left:25.5px;top:781.5px;width:74px;height:32px;background:#2b2b2b"></div>
<svg style="left:25.5px;top:781.5px;" width="74" height="32" viewBox="0 0 74 32"><path d="M4 16c8-1 16-2.500 24-4.500c5-1 7 4 12 4.500c6 .5 10-4 17-3.500c5 .5 8 2.500 13 3.500" fill="#3d5f8c" fill-opacity=".5" stroke="#5f94dd" stroke-width="1"/></svg>
<div class="t c" style="left:144.5px;top:781.5px;width:74px;height:32px;background:#5c5c5c;color:#303030;font-size:12px;line-height:32px;box-shadow:inset 0 0 0 .5px #6a6a6a">EQ</div>
<div class="t c" style="left:25.5px;top:819px;width:74px;height:18.5px;border-radius:3px;font-size:12px;line-height:18.500px;background:#5e5e5e;color:#1c1c1c;font-size:12.500px">MIDI-FX</div>
<div class="t c" style="left:25.5px;top:848px;width:74px;height:18.5px;border-radius:3px;font-size:12px;line-height:18.500px;background:linear-gradient(#3878cc,#2d6bbd);box-shadow:inset 0 0 0 .5px #4d8ad8,0 .5px 1px rgba(0,0,0,.3);color:#fff;">ES1</div>
<div style="left:144.5px;top:848px;width:74px;height:18.5px;border-radius:3px;font-size:12px;line-height:18.500px;background:#5b5b5b;box-shadow:inset 0 0 0 .5px #6e6e6e,0 .5px 1px rgba(0,0,0,.25);"></div>
<svg style="left:174.5px;top:852.5px;" width="14" height="9" viewBox="0 0 14 9"><circle cx="5" cy="4.500" r="3.500" fill="none" stroke="#f0f0f0" stroke-width="1.200"/><circle cx="9" cy="4.500" r="3.500" fill="none" stroke="#f0f0f0" stroke-width="1.200"/></svg>
<div style="left:25.5px;top:874.5px;width:74px;height:63px;background:#5a5a5a;border-radius:3px"></div>
<div style="left:144.5px;top:874.5px;width:74px;height:63px;background:#5a5a5a;border-radius:3px"></div>
<div class="t c" style="left:25.5px;top:874.5px;width:74px;height:18.5px;border-radius:3px;font-size:12px;line-height:18.500px;background:linear-gradient(#3878cc,#2d6bbd);box-shadow:inset 0 0 0 .5px #4d8ad8,0 .5px 1px rgba(0,0,0,.3);color:#fff;">Channel EQ</div>
<div class="t c" style="left:144.5px;top:874.5px;width:74px;height:17.8px;border-radius:3px;font-size:12px;line-height:18.500px;background:linear-gradient(#3878cc,#2d6bbd);box-shadow:inset 0 0 0 .5px #4d8ad8,0 .5px 1px rgba(0,0,0,.3);color:#fff;line-height:17.800px">Compressor</div>
<div class="t c" style="left:144.5px;top:892.8px;width:74px;height:17.8px;border-radius:3px;font-size:12px;line-height:18.500px;background:linear-gradient(#3878cc,#2d6bbd);box-shadow:inset 0 0 0 .5px #4d8ad8,0 .5px 1px rgba(0,0,0,.3);color:#fff;line-height:17.800px">Tube EQ</div>
<div class="t c" style="left:144.5px;top:911.1px;width:74px;height:17.8px;border-radius:3px;font-size:12px;line-height:18.500px;background:linear-gradient(#3878cc,#2d6bbd);box-shadow:inset 0 0 0 .5px #4d8ad8,0 .5px 1px rgba(0,0,0,.3);color:#fff;line-height:17.800px">AdLimit</div>
<div class="t c" style="left:25.5px;top:948.5px;width:53.5px;height:18.5px;border-radius:3px;font-size:12px;line-height:18.500px;background:linear-gradient(#3878cc,#2d6bbd);box-shadow:inset 0 0 0 .5px #4d8ad8,0 .5px 1px rgba(0,0,0,.3);color:#fff;">Bus 1</div>
<div class="t c" style="left:25.5px;top:969.5px;width:53.5px;height:18.5px;border-radius:3px;font-size:12px;line-height:18.500px;background:linear-gradient(#3878cc,#2d6bbd);box-shadow:inset 0 0 0 .5px #4d8ad8,0 .5px 1px rgba(0,0,0,.3);color:#fff;">Bus 2</div>
<div style="left:25.5px;top:991px;width:53.5px;height:8.5px;background:#5c5c5c;border-radius:2px"></div>
<svg style="left:82.5px;top:949.0px;" width="17" height="17" viewBox="0 0 17 17"><circle cx="8.500" cy="8.500" r="6.300" fill="#868686"/><path d="M4.300 13.800A6.800 6.800 0 1 1 12.700 13.800" fill="none" stroke="#353535" stroke-width="2.600"/></svg>
<svg style="left:82.5px;top:970.5px;" width="17" height="17" viewBox="0 0 17 17"><circle cx="8.500" cy="8.500" r="6.300" fill="#868686"/><path d="M4.300 13.800A6.800 6.800 0 1 1 12.700 13.800" fill="none" stroke="#353535" stroke-width="2.600"/><path d="M4 13.500A6.500 6.500 0 0 1 2.300 6.500" fill="none" stroke="#6aa9ee" stroke-width="2.600"/></svg>
<div class="t c" style="left:25.5px;top:1009.5px;width:74px;height:19px;border-radius:3px;font-size:12px;line-height:18.500px;background:#5b5b5b;box-shadow:inset 0 0 0 .5px #6e6e6e,0 .5px 1px rgba(0,0,0,.25);color:#fff;line-height:19px">Stereo</div>
<div class="t c" style="left:25.5px;top:1034px;width:74px;height:19px;border-radius:3px;font-size:12px;line-height:18.500px;background:#5d5d5d;color:#2c2c2c;line-height:19px;box-shadow:inset 0 0 0 .5px #6a6a6a">Gruppe</div>
<div class="t c" style="left:25.5px;top:1059px;width:74px;height:19px;border-radius:3px;font-size:12px;line-height:18.500px;background:#5b5b5b;box-shadow:inset 0 0 0 .5px #6e6e6e,0 .5px 1px rgba(0,0,0,.25);color:#6bd876;line-height:19px">Read</div>
<div class="t c" style="left:144.5px;top:1034px;width:74px;height:19px;border-radius:3px;font-size:12px;line-height:18.500px;background:#5d5d5d;color:#2c2c2c;line-height:19px;box-shadow:inset 0 0 0 .5px #6a6a6a">Gruppe</div>
<div class="t c" style="left:144.5px;top:1059px;width:74px;height:19px;border-radius:3px;font-size:12px;line-height:18.500px;background:#5b5b5b;box-shadow:inset 0 0 0 .5px #6e6e6e,0 .5px 1px rgba(0,0,0,.25);color:#6bd876;line-height:19px">Read</div>
<svg style="left:42.4px;top:1084px;" width="40" height="40" viewBox="0 0 40 40"><circle cx="20" cy="20" r="16.500" fill="#8c8c8c" stroke="#303030" stroke-width="3.600"/><path d="M20 1.500v4" stroke="#52d79a" stroke-width="1.500"/><path d="M20 5.500v4.500" stroke="#4a2a2a" stroke-width="1.300"/></svg>
<svg style="left:161px;top:1084px;" width="40" height="40" viewBox="0 0 40 40"><circle cx="20" cy="20" r="16.500" fill="#8c8c8c" stroke="#303030" stroke-width="3.600"/><path d="M20 1.500v4" stroke="#52d79a" stroke-width="1.500"/><path d="M20 5.500v4.500" stroke="#4a2a2a" stroke-width="1.300"/></svg>
<!-- p4_tracks -->
<div style="left:243px;top:88px;width:1680px;height:557px;background:#2a2a2a;border-radius:5px 0 0 6px"></div>
<div style="left:244px;top:89px;width:1676px;height:31px;background:#4a4a4a;border-radius:4px 0 0 0"></div>
<div style="left:253px;top:94.5px;width:34px;height:22.5px;background:#464646;border-radius:4px"></div>
<svg style="left:263px;top:97px;" width="14" height="17" viewBox="0 0 14 17"><path d="M2 5.500L6 1.500l4 4M6 2v7c0 3.500 2 5.500 5.500 6.500" fill="none" stroke="#8a8a8a" stroke-width="1.300"/></svg>
<div style="left:296.5px;top:94.5px;width:309px;height:22.5px;background:#3d3d3d;border-radius:4px;box-shadow:0 .5px 0 rgba(255,255,255,.08)"></div>
<div style="left:406.5px;top:94.5px;width:1px;height:22.5px;background:#4a4a4a"></div>
<div style="left:518px;top:94.5px;width:1px;height:22.5px;background:#4a4a4a"></div>
<div class="t" style="left:308.5px;top:98px;color:#fff;font-size:14.300px">Bearbeiten</div>
<svg style="left:390.5px;top:103px;" width="9" height="6" viewBox="0 0 9 6"><path d="M1 1l3.500 3.700 3.500-3.700" fill="none" stroke="#b5b5b5" stroke-width="1.200"/></svg>
<div class="t" style="left:417.5px;top:98px;color:#fff;font-size:14.300px">Funktionen</div>
<svg style="left:501.5px;top:103px;" width="9" height="6" viewBox="0 0 9 6"><path d="M1 1l3.500 3.700 3.500-3.700" fill="none" stroke="#b5b5b5" stroke-width="1.200"/></svg>
<div class="t" style="left:529px;top:98px;color:#fff;font-size:14.300px">Ansicht</div>
<svg style="left:590px;top:103px;" width="9" height="6" viewBox="0 0 9 6"><path d="M1 1l3.500 3.700 3.500-3.700" fill="none" stroke="#b5b5b5" stroke-width="1.200"/></svg>
<div style="left:615px;top:95px;width:69px;height:21.5px;background:#3d3d3d;border-radius:4px;box-shadow:0 .5px 0 rgba(255,255,255,.08)"></div>
<div style="left:650px;top:95px;width:34px;height:21.5px;background:#3572c6;border-radius:0 4px 4px 0"></div>
<svg style="left:625px;top:99px;" width="14" height="14" viewBox="0 0 14 14"><rect x="0.5" y="0.5" width="3.200" height="3.200" fill="#fff"/><rect x="0.5" y="5.4" width="3.200" height="3.200" fill="#fff"/><rect x="0.5" y="10.3" width="3.200" height="3.200" fill="#fff"/><rect x="5.4" y="0.5" width="3.200" height="3.200" fill="#fff"/><rect x="5.4" y="5.4" width="3.200" height="3.200" fill="#fff"/><rect x="5.4" y="10.3" width="3.200" height="3.200" fill="#fff"/><rect x="10.3" y="0.5" width="3.200" height="3.200" fill="#fff"/><rect x="10.3" y="5.4" width="3.200" height="3.200" fill="#fff"/><rect x="10.3" y="10.3" width="3.200" height="3.200" fill="#fff"/></svg>
<svg style="left:657px;top:99.5px;" width="20" height="13" viewBox="0 0 20 13"><g fill="#fff"><rect x="0" y="0" width="8" height="3"/><rect x="10" y="0" width="10" height="3"/><rect x="0" y="5" width="20" height="3"/><rect x="0" y="10" width="11" height="3"/><rect x="13" y="10" width="7" height="3"/></g></svg>
<div style="left:693px;top:95px;width:69px;height:21.5px;background:#3d3d3d;border-radius:4px;box-shadow:0 .5px 0 rgba(255,255,255,.08)"></div>
<svg style="left:698px;top:98px;" width="24" height="16" viewBox="0 0 24 16"><path d="M1 13h5M8.500 12.500L15.500 4.500M18 3h5" stroke="#fff" stroke-width="1.200" fill="none"/><circle cx="7.500" cy="13" r="1.800" fill="#fff"/><circle cx="16.500" cy="3.500" r="1.800" fill="#fff"/></svg>
<svg style="left:733px;top:98px;" width="24" height="16" viewBox="0 0 24 16"><path d="M1.500 1.800v12.400M22.500 1.800v12.400M1.500 1.800C9 1.800 15 14.200 22.500 14.200M1.500 14.200C9 14.200 15 1.800 22.500 1.800" fill="none" stroke="#e6e6e6" stroke-width="1.300"/><path d="M4 7v2M5.500 6v4M7 7.200v1.600M17 7.200v1.600M18.500 6v4M20 7v2" stroke="#e6e6e6" stroke-width=".8"/></svg>
<div style="left:772px;top:95px;width:34px;height:21.5px;background:#3572c6;border-radius:4px"></div>
<svg style="left:777px;top:98px;" width="24" height="16" viewBox="0 0 24 16"><path d="M1.500 4.500l3.800 3.500-3.800 3.500M22.500 4.500l-3.800 3.500 3.800 3.500" fill="none" stroke="#fff" stroke-width="1.300"/><path d="M8 1.500h8l-3.400 4.500v8.500h-1.200v-8.500z" fill="#fff"/></svg>
<div style="left:1037px;top:95px;width:92.5px;height:21.5px;background:#3d3d3d;border-radius:4px;box-shadow:0 .5px 0 rgba(255,255,255,.08)"></div>
<div style="left:1082.5px;top:95px;width:1px;height:21.5px;background:#4a4a4a"></div>
<svg style="left:1046px;top:97.5px;" width="12" height="17" viewBox="0 0 12 17"><path d="M1.500 1v12.500l3.300-3 2.500 5.500 2-1-2.500-5.300h4.400z" fill="#fff" stroke="#222" stroke-width=".6"/></svg>
<svg style="left:1066px;top:103px;" width="9" height="6" viewBox="0 0 9 6"><path d="M1 1l3.500 3.700 3.500-3.700" fill="none" stroke="#b5b5b5" stroke-width="1.200"/></svg>
<svg style="left:1091px;top:98px;" width="16" height="16" viewBox="0 0 16 16"><path d="M8 0v16M0 8h16" stroke="#fff" stroke-width="1.100"/><rect x="6.500" y="6.500" width="3" height="3" fill="#3d3d3d"/></svg>
<svg style="left:1113.5px;top:103px;" width="9" height="6" viewBox="0 0 9 6"><path d="M1 1l3.500 3.700 3.500-3.700" fill="none" stroke="#b5b5b5" stroke-width="1.200"/></svg>
<div class="t" style="left:1141.5px;top:98px;color:#c9c9c9;font-size:14.300px">Einrasten:</div>
<div style="left:1210px;top:95px;width:173px;height:21.5px;background:#3d3d3d;border-radius:4px;box-shadow:0 .5px 0 rgba(255,255,255,.08)"></div>
<div class="t" style="left:1221.5px;top:98px;color:#fff;font-size:14.300px">Intelligent</div>
<svg style="left:1367.5px;top:99px;" width="8" height="14" viewBox="0 0 8 14"><path d="M1 4.500l3-3.500 3 3.500M1 9.500l3 3.500 3-3.500" fill="none" stroke="#b5b5b5" stroke-width="1.200"/></svg>
<div class="t" style="left:1394.5px;top:98px;color:#c9c9c9;font-size:14.300px">Verschieben:</div>
<div style="left:1482.5px;top:95px;width:138.5px;height:21.5px;background:#3d3d3d;border-radius:4px;box-shadow:0 .5px 0 rgba(255,255,255,.08)"></div>
<div class="t" style="left:1493.5px;top:98px;color:#fff;font-size:14.300px">Keine Überlapp.</div>
<svg style="left:1605px;top:99px;" width="8" height="14" viewBox="0 0 8 14"><path d="M1 4.500l3-3.500 3 3.500M1 9.500l3 3.500 3-3.500" fill="none" stroke="#b5b5b5" stroke-width="1.200"/></svg>
<div style="left:1630px;top:95px;width:34.5px;height:21.5px;background:#3d3d3d;border-radius:4px;box-shadow:0 .5px 0 rgba(255,255,255,.08)"></div>
<svg style="left:1636.5px;top:98.5px;" width="22" height="15" viewBox="0 0 22 15"><g stroke="#e8e8e8" stroke-width="1"><path d="M1 7.0v1.0"/><path d="M3 6.5v2"/><path d="M5 5.5v4"/><path d="M7 4.0v7.0"/><path d="M9 5.5v4"/><path d="M11 1.0v13.0"/><path d="M13 4.5v6"/><path d="M15 3.0v9.0"/><path d="M17 5.5v4"/><path d="M19 6.0v3.0"/><path d="M21 7.0v1.0"/></g></svg>
<div style="left:1673.5px;top:95px;width:69.5px;height:21.5px;background:#3d3d3d;border-radius:4px;box-shadow:0 .5px 0 rgba(255,255,255,.08)"></div>
<div style="left:1709px;top:95px;width:34px;height:21.5px;background:#3572c6;border-radius:0 4px 4px 0"></div>
<svg style="left:1682px;top:98px;" width="18" height="16" viewBox="0 0 18 16"><path d="M2 1h14M2 15h14M9 2.500v11M6 5.500l3-3 3 3M6 10.500l3 3 3-3" fill="none" stroke="#fff" stroke-width="1.200"/></svg>
<svg style="left:1717px;top:98px;" width="18" height="16" viewBox="0 0 18 16"><path d="M1.500 2v12M16.500 2v12M3 8h12M6 5l-3 3 3 3M12 5l3 3-3 3" fill="none" stroke="#fff" stroke-width="1.200"/></svg>
<div style="left:1752.5px;top:95px;width:160.5px;height:21.5px;background:#3d3d3d;border-radius:4px;box-shadow:0 .5px 0 rgba(255,255,255,.08)"></div>
<svg style="left:1758px;top:98px;" width="10" height="16" viewBox="0 0 10 16"><path d="M5 1.500v13M2 4.500l3-3 3 3M2 11.500l3 3 3-3" fill="none" stroke="#d5d5d5" stroke-width="1.100"/></svg>
<div style="left:1775px;top:105.5px;width:47px;height:2px;background:#2b2b2b;border-radius:1px"></div>
<svg style="left:1789px;top:99px;" width="12" height="12" viewBox="0 0 12 12"><path d="M6 .5c2 1.500 4.500 3.500 4.500 6.500v3.500h-9V7C1.500 4 4 2 6 .5z" fill="#c9c9c9"/></svg>
<svg style="left:1836px;top:100px;" width="16" height="10" viewBox="0 0 16 10"><path d="M1.500 5h13M4.500 2l-3 3 3 3M11.500 2l3 3-3 3" fill="none" stroke="#d5d5d5" stroke-width="1.100"/></svg>
<div style="left:1857px;top:105.5px;width:47px;height:2px;background:#2b2b2b;border-radius:1px"></div>
<svg style="left:1872px;top:99px;" width="12" height="12" viewBox="0 0 12 12"><path d="M6 .5c2 1.500 4.500 3.500 4.500 6.500v3.500h-9V7C1.500 4 4 2 6 .5z" fill="#c9c9c9"/></svg>
<div style="left:1778px;top:98.5px;width:1px;height:1.5px;background:#7a7a7a"></div>
<div style="left:1780px;top:98.5px;width:1px;height:1.5px;background:#7a7a7a"></div>
<div style="left:1782px;top:98.5px;width:1px;height:1.5px;background:#7a7a7a"></div>
<div style="left:1795px;top:98.5px;width:1px;height:1.5px;background:#7a7a7a"></div>
<div style="left:1808px;top:98.5px;width:1px;height:1.5px;background:#7a7a7a"></div>
<div style="left:1821px;top:98.5px;width:1px;height:1.5px;background:#7a7a7a"></div>
<div style="left:1860px;top:98.5px;width:1px;height:1.5px;background:#7a7a7a"></div>
<div style="left:1862px;top:98.5px;width:1px;height:1.5px;background:#7a7a7a"></div>
<div style="left:1864px;top:98.5px;width:1px;height:1.5px;background:#7a7a7a"></div>
<div style="left:1877px;top:98.5px;width:1px;height:1.5px;background:#7a7a7a"></div>
<div style="left:1890px;top:98.5px;width:1px;height:1.5px;background:#7a7a7a"></div>
<div style="left:1903px;top:98.5px;width:1px;height:1.5px;background:#7a7a7a"></div>
<div style="left:244px;top:121px;width:401.5px;height:37px;background:#5e5e5e"></div>
<div style="left:244px;top:158px;width:401.5px;height:1.2px;background:#2e2e2e"></div>
<div style="left:253px;top:127.5px;width:35px;height:21.5px;background:#484848;border-radius:4px;box-shadow:0 .5px 0 rgba(255,255,255,.1)"></div>
<svg style="left:264px;top:131.5px;" width="13" height="13" viewBox="0 0 13 13"><path d="M6.500 0v13M0 6.500h13" stroke="#f2f2f2" stroke-width="1.200"/></svg>
<div style="left:296.5px;top:127.5px;width:35.5px;height:21.5px;background:#484848;border-radius:4px;box-shadow:0 .5px 0 rgba(255,255,255,.1)"></div>
<svg style="left:305px;top:130.5px;" width="19" height="16" viewBox="0 0 19 16"><path d="M8.500 12.500v2.500h9v-9h-2.500" fill="none" stroke="#f2f2f2" stroke-width="1.200"/><rect x="1" y="1" width="11.500" height="10.500" rx="1.500" fill="#f2f2f2"/><path d="M6.800 3.500v5.500M4 6.300h5.600" stroke="#484848" stroke-width="1.400"/></svg>
<div style="left:602px;top:127.5px;width:35.5px;height:21.5px;background:#484848;border-radius:4px;box-shadow:0 .5px 0 rgba(255,255,255,.1)"></div>
<svg style="left:612px;top:131px;" width="16" height="15" viewBox="0 0 16 15"><rect x=".8" y=".8" width="14.400" height="13.400" rx="1" fill="none" stroke="#f2f2f2" stroke-width="1.200"/><rect x=".8" y=".8" width="14.400" height="3" fill="#f2f2f2"/><path d="M5 7.500l3 3 3-3" fill="none" stroke="#f2f2f2" stroke-width="1.200"/></svg>
<div style="left:244px;top:159.0px;width:401.5px;height:52.650000000000006px;background:#5f5f5f"></div>
<div style="left:244px;top:210.45px;width:401.5px;height:1px;background:#4e4e4e"></div>
<div style="left:266px;top:159.0px;width:1px;height:51.45px;background:#585858"></div>
<div class="t c" style="left:244px;top:178.92499999999998px;width:22.5px;height:16px;color:#f2f2f2;font-size:14.500px;line-height:16px">1</div>
<svg style="left:302px;top:168.0px;" width="40" height="40" viewBox="0 0 40 40"><ellipse cx="17.500" cy="11" rx="8.600" ry="9.800" fill="#f54bdb"/><path d="M12.500 17h10v7.500l3.500 1.200c2 .7 2.300 2.500 2.300 9.300H1.200c0-6.500.8-8.500 3.800-9.500l7.500-2.500z" fill="#f54bdb"/><rect x="29.300" y="18.600" width="6" height="12" rx="3" fill="#f54bdb"/><rect x="30.600" y="31.200" width="3.400" height="5.500" rx="1.200" fill="#f54bdb"/><path d="M29.300 22.500h6M29.300 25.500h6" stroke="#5f5f5f" stroke-width=".8" opacity=".7"/></svg>
<div class="t" style="left:357.5px;top:167.0px;color:#fff;font-size:14px;letter-spacing:.1px">Verse Vocals</div>
<div style="left:357.5px;top:187.0px;width:44px;height:18px;background:#474747;box-shadow:0 .5px 0 rgba(255,255,255,.12);color:#e6e6e6;font-size:14px;line-height:18px;border-radius:3.500px"></div>
<div style="left:379.2px;top:187.0px;width:1px;height:18px;background:#555"></div>
<div class="t c" style="left:357.5px;top:187.0px;width:22px;height:18px;color:#e6e6e6;font-size:14px;line-height:18.500px">M</div>
<div class="t c" style="left:379.5px;top:187.0px;width:22px;height:18px;color:#e6e6e6;font-size:14px;line-height:18.500px">S</div>
<div style="left:407.5px;top:187.0px;width:44.5px;height:18px;background:#474747;box-shadow:0 .5px 0 rgba(255,255,255,.12);color:#e6e6e6;font-size:14px;line-height:18px;border-radius:3.500px"></div>
<div style="left:429.5px;top:187.0px;width:1px;height:18px;background:#555"></div>
<div class="t c" style="left:407.5px;top:187.0px;width:22px;height:18px;color:#e6e6e6;font-size:14px;line-height:18.500px">R</div>
<div class="t c" style="left:430px;top:187.0px;width:22px;height:18px;color:#e6e6e6;font-size:14px;line-height:18.500px">I</div>
<div style="left:463.5px;top:189.5px;width:128.5px;height:13px;background:#333;border-radius:7px;box-shadow:inset 0 1px 1px rgba(0,0,0,.4),0 .5px 0 rgba(255,255,255,.1)"></div>
<div style="left:535.2px;top:186.5px;width:19px;height:19px;border-radius:50%;background:linear-gradient(#a9a9a9,#8d8d8d);box-shadow:0 0 0 .8px #b5b5b5,0 1px 2px rgba(0,0,0,.5)"></div>
<svg style="left:603.5px;top:170.0px;" width="30" height="34" viewBox="0 0 30 34"><path d="M6 26A12.600 12.600 0 1 1 24 26" fill="none" stroke="#363636" stroke-width="3.700"/><circle cx="15" cy="15.500" r="10.800" fill="#848484"/><path d="M15 2.500v9.500" stroke="#2a2a2a" stroke-width="1.300"/><text x="5" y="33.500" font-size="6" font-weight="bold" fill="#c4c4c4" text-anchor="middle">L</text><text x="23.500" y="33.500" font-size="6" font-weight="bold" fill="#c4c4c4" text-anchor="middle">R</text></svg>
<div style="left:244px;top:211.45px;width:401.5px;height:52.650000000000006px;background:#5f5f5f"></div>
<div style="left:244px;top:262.9px;width:401.5px;height:1px;background:#4e4e4e"></div>
<div style="left:266px;top:211.45px;width:1px;height:51.45px;background:#585858"></div>
<div class="t c" style="left:244px;top:231.37499999999997px;width:22.5px;height:16px;color:#f2f2f2;font-size:14.500px;line-height:16px">2</div>
<svg style="left:302px;top:220.45px;" width="40" height="40" viewBox="0 0 40 40"><ellipse cx="17.500" cy="11" rx="8.600" ry="9.800" fill="#f24fe2"/><path d="M12.500 17h10v7.500l3.500 1.200c2 .7 2.300 2.500 2.300 9.300H1.200c0-6.500.8-8.500 3.800-9.500l7.500-2.500z" fill="#f24fe2"/><rect x="29.300" y="18.600" width="6" height="12" rx="3" fill="#f24fe2"/><rect x="30.600" y="31.200" width="3.400" height="5.500" rx="1.200" fill="#f24fe2"/><path d="M29.300 22.500h6M29.300 25.500h6" stroke="#5f5f5f" stroke-width=".8" opacity=".7"/></svg>
<div class="t" style="left:357.5px;top:219.45px;color:#fff;font-size:14px;letter-spacing:.1px">Verse Harmony</div>
<div style="left:357.5px;top:239.45px;width:44px;height:18px;background:#474747;box-shadow:0 .5px 0 rgba(255,255,255,.12);color:#e6e6e6;font-size:14px;line-height:18px;border-radius:3.500px"></div>
<div style="left:379.2px;top:239.45px;width:1px;height:18px;background:#555"></div>
<div class="t c" style="left:357.5px;top:239.45px;width:22px;height:18px;color:#e6e6e6;font-size:14px;line-height:18.500px">M</div>
<div class="t c" style="left:379.5px;top:239.45px;width:22px;height:18px;color:#e6e6e6;font-size:14px;line-height:18.500px">S</div>
<div style="left:407.5px;top:239.45px;width:44.5px;height:18px;background:#474747;box-shadow:0 .5px 0 rgba(255,255,255,.12);color:#e6e6e6;font-size:14px;line-height:18px;border-radius:3.500px"></div>
<div style="left:429.5px;top:239.45px;width:1px;height:18px;background:#555"></div>
<div class="t c" style="left:407.5px;top:239.45px;width:22px;height:18px;color:#e6e6e6;font-size:14px;line-height:18.500px">R</div>
<div class="t c" style="left:430px;top:239.45px;width:22px;height:18px;color:#e6e6e6;font-size:14px;line-height:18.500px">I</div>
<div style="left:463.5px;top:241.95px;width:128.5px;height:13px;background:#333;border-radius:7px;box-shadow:inset 0 1px 1px rgba(0,0,0,.4),0 .5px 0 rgba(255,255,255,.1)"></div>
<div style="left:532.0px;top:238.95px;width:19px;height:19px;border-radius:50%;background:linear-gradient(#a9a9a9,#8d8d8d);box-shadow:0 0 0 .8px #b5b5b5,0 1px 2px rgba(0,0,0,.5)"></div>
<svg style="left:603.5px;top:222.45px;" width="30" height="34" viewBox="0 0 30 34"><path d="M6 26A12.600 12.600 0 1 1 24 26" fill="none" stroke="#363636" stroke-width="3.700"/><circle cx="15" cy="15.500" r="10.800" fill="#848484"/><path d="M15 2.500v9.500" stroke="#2a2a2a" stroke-width="1.300"/><text x="5" y="33.500" font-size="6" font-weight="bold" fill="#c4c4c4" text-anchor="middle">L</text><text x="23.500" y="33.500" font-size="6" font-weight="bold" fill="#c4c4c4" text-anchor="middle">R</text></svg>
<div style="left:244px;top:263.9px;width:401.5px;height:52.650000000000006px;background:#5f5f5f"></div>
<div style="left:244px;top:315.34999999999997px;width:401.5px;height:1px;background:#4e4e4e"></div>
<div style="left:266px;top:263.9px;width:1px;height:51.45px;background:#585858"></div>
<div class="t c" style="left:244px;top:283.825px;width:22.5px;height:16px;color:#f2f2f2;font-size:14.500px;line-height:16px">3</div>
<div style="left:274.5px;top:269.4px;width:75px;height:42px;background:#4f4f4f;border-radius:6px;box-shadow:inset 0 0 0 1px #434343"></div>
<svg style="left:281px;top:285.9px;" width="10" height="12" viewBox="0 0 10 12"><path d="M.5 .5v11l9-5.500z" fill="#e2e2e2"/></svg>
<svg style="left:302.5px;top:273.9px;" width="40" height="40" viewBox="0 0 40 40"><path d="M6.9 24c0-10.4 3.7-12.4 4.3-13.9h4.4c0 1.500 3.7 2 4.3 13.9z" fill="#e052ee" stroke="#4f4f4f" stroke-width=".9"/><ellipse cx="13.4" cy="7.3" rx="4" ry="5.28" fill="#e052ee" stroke="#4f4f4f" stroke-width=".9"/><path d="M16.3 24c0-10.4 3.7-12.4 4.3-13.9h4.4c0 1.500 3.7 2 4.3 13.9z" fill="#e052ee" stroke="#4f4f4f" stroke-width=".9"/><ellipse cx="22.8" cy="7.3" rx="4" ry="5.28" fill="#e052ee" stroke="#4f4f4f" stroke-width=".9"/><path d="M2.8999999999999995 31c0-5.2 3.4-7.2 4.0-8.7h4.4c0 1.500 3.4 2 4.0 8.7z" fill="#e052ee" stroke="#4f4f4f" stroke-width=".9"/><ellipse cx="9.1" cy="19.5" rx="4" ry="5.28" fill="#e052ee" stroke="#4f4f4f" stroke-width=".9"/><path d="M20.1 31c0-5.2 3.4-7.2 4.0-8.7h4.4c0 1.500 3.4 2 4.0 8.7z" fill="#e052ee" stroke="#4f4f4f" stroke-width=".9"/><ellipse cx="26.3" cy="19.5" rx="4" ry="5.28" fill="#e052ee" stroke="#4f4f4f" stroke-width=".9"/><path d="M11.5 31c0-5.2 3.4-7.2 4.0-8.7h4.4c0 1.500 3.4 2 4.0 8.7z" fill="#e052ee" stroke="#4f4f4f" stroke-width=".9"/><ellipse cx="17.7" cy="19.5" rx="4" ry="5.28" fill="#e052ee" stroke="#4f4f4f" stroke-width=".9"/><path d="M.5 33.800c0-3 2-4.500 6-4.500h22.500c4 0 6 1.500 6 4.500z" fill="#e052ee"/></svg>
<div class="t" style="left:357.5px;top:271.9px;color:#fff;font-size:14px;letter-spacing:.1px">Vocal Stack</div>
<div style="left:357.5px;top:291.9px;width:44px;height:18px;background:#474747;box-shadow:0 .5px 0 rgba(255,255,255,.12);color:#e6e6e6;font-size:14px;line-height:18px;border-radius:3.500px"></div>
<div style="left:379.2px;top:291.9px;width:1px;height:18px;background:#555"></div>
<div class="t c" style="left:357.5px;top:291.9px;width:22px;height:18px;color:#e6e6e6;font-size:14px;line-height:18.500px">M</div>
<div class="t c" style="left:379.5px;top:291.9px;width:22px;height:18px;color:#e6e6e6;font-size:14px;line-height:18.500px">S</div>
<div style="left:407.5px;top:291.9px;width:44.5px;height:18px;background:#474747;box-shadow:0 .5px 0 rgba(255,255,255,.12);color:#e6e6e6;font-size:14px;line-height:18px;border-radius:3.500px"></div>
<div style="left:429.5px;top:291.9px;width:1px;height:18px;background:#555"></div>
<div class="t c" style="left:407.5px;top:291.9px;width:22px;height:18px;color:#e6e6e6;font-size:14px;line-height:18.500px">R</div>
<div class="t c" style="left:430px;top:291.9px;width:22px;height:18px;color:#e6e6e6;font-size:14px;line-height:18.500px">I</div>
<div style="left:463.5px;top:294.4px;width:128.5px;height:13px;background:#333;border-radius:7px;box-shadow:inset 0 1px 1px rgba(0,0,0,.4),0 .5px 0 rgba(255,255,255,.1)"></div>
<div style="left:511.5px;top:291.4px;width:19px;height:19px;border-radius:50%;background:linear-gradient(#a9a9a9,#8d8d8d);box-shadow:0 0 0 .8px #b5b5b5,0 1px 2px rgba(0,0,0,.5)"></div>
<svg style="left:603.5px;top:274.9px;" width="30" height="34" viewBox="0 0 30 34"><path d="M6 26A12.600 12.600 0 1 1 24 26" fill="none" stroke="#363636" stroke-width="3.700"/><circle cx="15" cy="15.500" r="10.800" fill="#848484"/><path d="M15 2.500v9.500" stroke="#2a2a2a" stroke-width="1.300"/><text x="5" y="33.500" font-size="6" font-weight="bold" fill="#c4c4c4" text-anchor="middle">L</text><text x="23.500" y="33.500" font-size="6" font-weight="bold" fill="#c4c4c4" text-anchor="middle">R</text></svg>
<div style="left:244px;top:316.35px;width:401.5px;height:52.650000000000006px;background:#5f5f5f"></div>
<div style="left:244px;top:367.8px;width:401.5px;height:1px;background:#4e4e4e"></div>
<div style="left:266px;top:316.35px;width:1px;height:51.45px;background:#585858"></div>
<div class="t c" style="left:244px;top:336.27500000000003px;width:22.5px;height:16px;color:#f2f2f2;font-size:14.500px;line-height:16px">9</div>
<svg style="left:302px;top:325.35px;" width="40" height="40" viewBox="0 0 40 40"><ellipse cx="17.500" cy="11" rx="8.600" ry="9.800" fill="#c763f3"/><path d="M12.500 17h10v7.500l3.500 1.200c2 .7 2.300 2.500 2.300 9.300H1.200c0-6.500.8-8.500 3.800-9.500l7.500-2.500z" fill="#c763f3"/><rect x="29.300" y="18.600" width="6" height="12" rx="3" fill="#c763f3"/><rect x="30.600" y="31.200" width="3.400" height="5.500" rx="1.200" fill="#c763f3"/><path d="M29.300 22.500h6M29.300 25.500h6" stroke="#5f5f5f" stroke-width=".8" opacity=".7"/></svg>
<div class="t" style="left:357.5px;top:324.35px;color:#fff;font-size:14px;letter-spacing:.1px">Vocal Response</div>
<div style="left:357.5px;top:344.35px;width:44px;height:18px;background:#474747;box-shadow:0 .5px 0 rgba(255,255,255,.12);color:#e6e6e6;font-size:14px;line-height:18px;border-radius:3.500px"></div>
<div style="left:379.2px;top:344.35px;width:1px;height:18px;background:#555"></div>
<div class="t c" style="left:357.5px;top:344.35px;width:22px;height:18px;color:#e6e6e6;font-size:14px;line-height:18.500px">M</div>
<div class="t c" style="left:379.5px;top:344.35px;width:22px;height:18px;color:#e6e6e6;font-size:14px;line-height:18.500px">S</div>
<div style="left:407.5px;top:344.35px;width:44.5px;height:18px;background:#474747;box-shadow:0 .5px 0 rgba(255,255,255,.12);color:#e6e6e6;font-size:14px;line-height:18px;border-radius:3.500px"></div>
<div style="left:429.5px;top:344.35px;width:1px;height:18px;background:#555"></div>
<div class="t c" style="left:407.5px;top:344.35px;width:22px;height:18px;color:#e6e6e6;font-size:14px;line-height:18.500px">R</div>
<div class="t c" style="left:430px;top:344.35px;width:22px;height:18px;color:#e6e6e6;font-size:14px;line-height:18.500px">I</div>
<div style="left:463.5px;top:346.85px;width:128.5px;height:13px;background:#333;border-radius:7px;box-shadow:inset 0 1px 1px rgba(0,0,0,.4),0 .5px 0 rgba(255,255,255,.1)"></div>
<div style="left:512.5px;top:343.85px;width:19px;height:19px;border-radius:50%;background:linear-gradient(#a9a9a9,#8d8d8d);box-shadow:0 0 0 .8px #b5b5b5,0 1px 2px rgba(0,0,0,.5)"></div>
<svg style="left:603.5px;top:327.35px;" width="30" height="34" viewBox="0 0 30 34"><path d="M6 26A12.600 12.600 0 1 1 24 26" fill="none" stroke="#363636" stroke-width="3.700"/><circle cx="15" cy="15.500" r="10.800" fill="#848484"/><path d="M15 2.500v9.500" stroke="#2a2a2a" stroke-width="1.300"/><text x="5" y="33.500" font-size="6" font-weight="bold" fill="#c4c4c4" text-anchor="middle">L</text><text x="23.500" y="33.500" font-size="6" font-weight="bold" fill="#c4c4c4" text-anchor="middle">R</text></svg>
<div style="left:244px;top:368.8px;width:401.5px;height:52.650000000000006px;background:#5f5f5f"></div>
<div style="left:244px;top:420.25px;width:401.5px;height:1px;background:#4e4e4e"></div>
<div style="left:266px;top:368.8px;width:1px;height:51.45px;background:#585858"></div>
<div class="t c" style="left:244px;top:388.725px;width:22.5px;height:16px;color:#f2f2f2;font-size:14.500px;line-height:16px">10</div>
<svg style="left:302px;top:377.8px;" width="40" height="40" viewBox="0 0 40 40"><ellipse cx="17.500" cy="11" rx="8.600" ry="9.800" fill="#a86df2"/><path d="M12.500 17h10v7.500l3.500 1.200c2 .7 2.300 2.500 2.300 9.300H1.200c0-6.500.8-8.500 3.800-9.500l7.500-2.500z" fill="#a86df2"/><rect x="29.300" y="18.600" width="6" height="12" rx="3" fill="#a86df2"/><rect x="30.600" y="31.200" width="3.400" height="5.500" rx="1.200" fill="#a86df2"/><path d="M29.300 22.500h6M29.300 25.500h6" stroke="#5f5f5f" stroke-width=".8" opacity=".7"/></svg>
<div class="t" style="left:357.5px;top:376.8px;color:#fff;font-size:14px;letter-spacing:.1px">Ghostly Vocals</div>
<div style="left:357.5px;top:396.8px;width:44px;height:18px;background:#474747;box-shadow:0 .5px 0 rgba(255,255,255,.12);color:#e6e6e6;font-size:14px;line-height:18px;border-radius:3.500px"></div>
<div style="left:379.2px;top:396.8px;width:1px;height:18px;background:#555"></div>
<div class="t c" style="left:357.5px;top:396.8px;width:22px;height:18px;color:#e6e6e6;font-size:14px;line-height:18.500px">M</div>
<div class="t c" style="left:379.5px;top:396.8px;width:22px;height:18px;color:#e6e6e6;font-size:14px;line-height:18.500px">S</div>
<div style="left:407.5px;top:396.8px;width:44.5px;height:18px;background:#474747;box-shadow:0 .5px 0 rgba(255,255,255,.12);color:#e6e6e6;font-size:14px;line-height:18px;border-radius:3.500px"></div>
<div style="left:429.5px;top:396.8px;width:1px;height:18px;background:#555"></div>
<div class="t c" style="left:407.5px;top:396.8px;width:22px;height:18px;color:#e6e6e6;font-size:14px;line-height:18.500px">R</div>
<div class="t c" style="left:430px;top:396.8px;width:22px;height:18px;color:#e6e6e6;font-size:14px;line-height:18.500px">I</div>
<div style="left:463.5px;top:399.3px;width:128.5px;height:13px;background:#333;border-radius:7px;box-shadow:inset 0 1px 1px rgba(0,0,0,.4),0 .5px 0 rgba(255,255,255,.1)"></div>
<div style="left:512.5px;top:396.3px;width:19px;height:19px;border-radius:50%;background:linear-gradient(#a9a9a9,#8d8d8d);box-shadow:0 0 0 .8px #b5b5b5,0 1px 2px rgba(0,0,0,.5)"></div>
<svg style="left:603.5px;top:379.8px;" width="30" height="34" viewBox="0 0 30 34"><path d="M6 26A12.600 12.600 0 1 1 24 26" fill="none" stroke="#363636" stroke-width="3.700"/><circle cx="15" cy="15.500" r="10.800" fill="#848484"/><path d="M15 2.500v9.500" stroke="#2a2a2a" stroke-width="1.300"/><text x="5" y="33.500" font-size="6" font-weight="bold" fill="#c4c4c4" text-anchor="middle">L</text><text x="23.500" y="33.500" font-size="6" font-weight="bold" fill="#c4c4c4" text-anchor="middle">R</text></svg>
<div style="left:244px;top:421.25px;width:401.5px;height:52.650000000000006px;background:#5f5f5f"></div>
<div style="left:244px;top:472.7px;width:401.5px;height:1px;background:#4e4e4e"></div>
<div style="left:266px;top:421.25px;width:1px;height:51.45px;background:#585858"></div>
<div class="t c" style="left:244px;top:441.175px;width:22.5px;height:16px;color:#f2f2f2;font-size:14.500px;line-height:16px">11</div>
<div style="left:274.5px;top:426.75px;width:75px;height:42px;background:#4f4f4f;border-radius:6px;box-shadow:inset 0 0 0 1px #434343"></div>
<svg style="left:281px;top:443.25px;" width="10" height="12" viewBox="0 0 10 12"><path d="M.5 .5v11l9-5.500z" fill="#e2e2e2"/></svg>
<svg style="left:302.5px;top:431.25px;" width="40" height="40" viewBox="0 0 40 40"><path d="M6.9 24c0-10.4 3.7-12.4 4.3-13.9h4.4c0 1.500 3.7 2 4.3 13.9z" fill="#8e70f4" stroke="#4f4f4f" stroke-width=".9"/><ellipse cx="13.4" cy="7.3" rx="4" ry="5.28" fill="#8e70f4" stroke="#4f4f4f" stroke-width=".9"/><path d="M16.3 24c0-10.4 3.7-12.4 4.3-13.9h4.4c0 1.500 3.7 2 4.3 13.9z" fill="#8e70f4" stroke="#4f4f4f" stroke-width=".9"/><ellipse cx="22.8" cy="7.3" rx="4" ry="5.28" fill="#8e70f4" stroke="#4f4f4f" stroke-width=".9"/><path d="M2.8999999999999995 31c0-5.2 3.4-7.2 4.0-8.7h4.4c0 1.500 3.4 2 4.0 8.7z" fill="#8e70f4" stroke="#4f4f4f" stroke-width=".9"/><ellipse cx="9.1" cy="19.5" rx="4" ry="5.28" fill="#8e70f4" stroke="#4f4f4f" stroke-width=".9"/><path d="M20.1 31c0-5.2 3.4-7.2 4.0-8.7h4.4c0 1.500 3.4 2 4.0 8.7z" fill="#8e70f4" stroke="#4f4f4f" stroke-width=".9"/><ellipse cx="26.3" cy="19.5" rx="4" ry="5.28" fill="#8e70f4" stroke="#4f4f4f" stroke-width=".9"/><path d="M11.5 31c0-5.2 3.4-7.2 4.0-8.7h4.4c0 1.500 3.4 2 4.0 8.7z" fill="#8e70f4" stroke="#4f4f4f" stroke-width=".9"/><ellipse cx="17.7" cy="19.5" rx="4" ry="5.28" fill="#8e70f4" stroke="#4f4f4f" stroke-width=".9"/><path d="M.5 33.800c0-3 2-4.500 6-4.500h22.500c4 0 6 1.500 6 4.500z" fill="#8e70f4"/></svg>
<div class="t" style="left:357.5px;top:429.25px;color:#fff;font-size:14px;letter-spacing:.1px">Vocal Textures</div>
<div style="left:357.5px;top:449.25px;width:44px;height:18px;background:#474747;box-shadow:0 .5px 0 rgba(255,255,255,.12);color:#e6e6e6;font-size:14px;line-height:18px;border-radius:3.500px"></div>
<div style="left:379.2px;top:449.25px;width:1px;height:18px;background:#555"></div>
<div class="t c" style="left:357.5px;top:449.25px;width:22px;height:18px;color:#e6e6e6;font-size:14px;line-height:18.500px">M</div>
<div class="t c" style="left:379.5px;top:449.25px;width:22px;height:18px;color:#e6e6e6;font-size:14px;line-height:18.500px">S</div>
<div style="left:407.5px;top:449.25px;width:44.5px;height:18px;background:#474747;box-shadow:0 .5px 0 rgba(255,255,255,.12);color:#e6e6e6;font-size:14px;line-height:18px;border-radius:3.500px"></div>
<div style="left:429.5px;top:449.25px;width:1px;height:18px;background:#555"></div>
<div class="t c" style="left:407.5px;top:449.25px;width:22px;height:18px;color:#e6e6e6;font-size:14px;line-height:18.500px">R</div>
<div class="t c" style="left:430px;top:449.25px;width:22px;height:18px;color:#e6e6e6;font-size:14px;line-height:18.500px">I</div>
<div style="left:463.5px;top:451.75px;width:128.5px;height:13px;background:#333;border-radius:7px;box-shadow:inset 0 1px 1px rgba(0,0,0,.4),0 .5px 0 rgba(255,255,255,.1)"></div>
<div style="left:540.5px;top:448.75px;width:19px;height:19px;border-radius:50%;background:linear-gradient(#a9a9a9,#8d8d8d);box-shadow:0 0 0 .8px #b5b5b5,0 1px 2px rgba(0,0,0,.5)"></div>
<svg style="left:603.5px;top:432.25px;" width="30" height="34" viewBox="0 0 30 34"><path d="M6 26A12.600 12.600 0 1 1 24 26" fill="none" stroke="#363636" stroke-width="3.700"/><circle cx="15" cy="15.500" r="10.800" fill="#848484"/><path d="M15 2.500v9.500" stroke="#2a2a2a" stroke-width="1.300"/><text x="5" y="33.500" font-size="6" font-weight="bold" fill="#c4c4c4" text-anchor="middle">L</text><text x="23.500" y="33.500" font-size="6" font-weight="bold" fill="#c4c4c4" text-anchor="middle">R</text></svg>
<div style="left:244px;top:473.70000000000005px;width:401.5px;height:52.650000000000006px;background:linear-gradient(#8e8e8e,#848484)"></div>
<div style="left:244px;top:525.1500000000001px;width:401.5px;height:1px;background:#4e4e4e"></div>
<div style="left:266px;top:473.70000000000005px;width:1px;height:51.45px;background:#7c7c7c"></div>
<div class="t c" style="left:244px;top:493.62500000000006px;width:22.5px;height:16px;color:#f2f2f2;font-size:14.500px;line-height:16px">24</div>
<svg style="left:302px;top:483.20000000000005px;" width="40" height="40" viewBox="0 0 40 40"><g fill="none" stroke="#5447dc" stroke-width="1.200"><rect x="1.500" y="1.500" width="33" height="12.500" rx="1"/><path d="M1.500 9h33M7.500 14.500L29 34M28.500 14.500L7 34"/></g><g stroke="#5447dc" stroke-width=".8"><path d="M4 9v5"/><path d="M7 9v5"/><path d="M10 9v5"/><path d="M13 9v5"/><path d="M16 9v5"/><path d="M19 9v5"/><path d="M22 9v5"/><path d="M25 9v5"/><path d="M28 9v5"/><path d="M31 9v5"/><path d="M4 3.500v3"/><path d="M6 3.500v3"/><path d="M8 3.500v3"/><path d="M10 3.500v3"/><path d="M12 3.500v3"/><path d="M14 3.500v3"/><path d="M16 3.500v3"/><path d="M18 3.500v3"/><path d="M20 3.500v3"/><path d="M22 3.500v3"/><path d="M24 3.500v3"/><path d="M26 3.500v3"/><path d="M28 3.500v3"/><path d="M30 3.500v3"/><path d="M32 3.500v3"/></g></svg>
<div class="t" style="left:357.5px;top:481.70000000000005px;color:#fff;font-size:14px;letter-spacing:.1px">Dark Pad</div>
<div style="left:357.5px;top:501.70000000000005px;width:44px;height:18px;background:#474747;box-shadow:0 .5px 0 rgba(255,255,255,.12);color:#e6e6e6;font-size:14px;line-height:18px;border-radius:3.500px"></div>
<div style="left:379.2px;top:501.70000000000005px;width:1px;height:18px;background:#555"></div>
<div class="t c" style="left:357.5px;top:501.70000000000005px;width:22px;height:18px;color:#e6e6e6;font-size:14px;line-height:18.500px">M</div>
<div class="t c" style="left:379.5px;top:501.70000000000005px;width:22px;height:18px;color:#e6e6e6;font-size:14px;line-height:18.500px">S</div>
<div class="t c" style="left:407.5px;top:501.70000000000005px;width:22.5px;height:18px;background:#474747;box-shadow:0 .5px 0 rgba(255,255,255,.12);color:#e6e6e6;font-size:14px;line-height:18px;border-radius:3.500px;background:#3d3d3d;color:#e6281e;font-weight:bold;">R</div>
<div style="left:463.5px;top:504.20000000000005px;width:128.5px;height:13px;background:#333;border-radius:7px;box-shadow:inset 0 1px 1px rgba(0,0,0,.4),0 .5px 0 rgba(255,255,255,.1)"></div>
<div style="left:528.8px;top:501.20000000000005px;width:19px;height:19px;border-radius:50%;background:linear-gradient(#a9a9a9,#8d8d8d);box-shadow:0 0 0 .8px #d0d0d0,0 1px 2px rgba(0,0,0,.5)"></div>
<svg style="left:603.5px;top:484.70000000000005px;" width="30" height="34" viewBox="0 0 30 34"><path d="M6 26A12.600 12.600 0 1 1 24 26" fill="none" stroke="#363636" stroke-width="3.700"/><circle cx="15" cy="15.500" r="10.800" fill="#dcdcdc"/><path d="M15 2.500v9.500" stroke="#2a2a2a" stroke-width="1.300"/><text x="5" y="33.500" font-size="6" font-weight="bold" fill="#d8d8d8" text-anchor="middle">L</text><text x="23.500" y="33.500" font-size="6" font-weight="bold" fill="#d8d8d8" text-anchor="middle">R</text></svg>
<div style="left:244px;top:526.1500000000001px;width:401.5px;height:52.650000000000006px;background:#5f5f5f"></div>
<div style="left:244px;top:577.6000000000001px;width:401.5px;height:1px;background:#4e4e4e"></div>
<div style="left:266px;top:526.1500000000001px;width:1px;height:51.45px;background:#585858"></div>
<div class="t c" style="left:244px;top:546.0750000000002px;width:22.5px;height:16px;color:#f2f2f2;font-size:14.500px;line-height:16px">25</div>
<svg style="left:302px;top:532.1500000000001px;" width="40" height="40" viewBox="0 0 40 40"><g fill="none" stroke="#5b93f7" stroke-width="1.200"><path d="M3 16L30 1"/><path d="M2 17c0-1 1-2 3-2h26c2 0 3 1 3 2v8H2z"/><path d="M2 21h32M4 25v13M32 25v13M17 25v11M14 36h7"/><path d="M12 15c1-2 3-3 6-3s5 1 6 3"/></g><g stroke="#5b93f7" stroke-width=".8"><path d="M5 21v4"/><path d="M8 21v4"/><path d="M11 21v4"/><path d="M14 21v4"/><path d="M17 21v4"/><path d="M20 21v4"/><path d="M23 21v4"/><path d="M26 21v4"/><path d="M29 21v4"/><path d="M32 21v4"/></g></svg>
<div class="t" style="left:357.5px;top:534.1500000000001px;color:#fff;font-size:14px;letter-spacing:.1px">Custom Soft Piano</div>
<div style="left:357.5px;top:554.1500000000001px;width:44px;height:18px;background:#474747;box-shadow:0 .5px 0 rgba(255,255,255,.12);color:#e6e6e6;font-size:14px;line-height:18px;border-radius:3.500px"></div>
<div style="left:379.2px;top:554.1500000000001px;width:1px;height:18px;background:#555"></div>
<div class="t c" style="left:357.5px;top:554.1500000000001px;width:22px;height:18px;color:#e6e6e6;font-size:14px;line-height:18.500px">M</div>
<div class="t c" style="left:379.5px;top:554.1500000000001px;width:22px;height:18px;color:#e6e6e6;font-size:14px;line-height:18.500px">S</div>
<div class="t c" style="left:407.5px;top:554.1500000000001px;width:22.5px;height:18px;background:#474747;box-shadow:0 .5px 0 rgba(255,255,255,.12);color:#e6e6e6;font-size:14px;line-height:18px;border-radius:3.500px;">R</div>
<div style="left:463.5px;top:556.6500000000001px;width:128.5px;height:13px;background:#333;border-radius:7px;box-shadow:inset 0 1px 1px rgba(0,0,0,.4),0 .5px 0 rgba(255,255,255,.1)"></div>
<div style="left:486.1px;top:553.6500000000001px;width:19px;height:19px;border-radius:50%;background:linear-gradient(#a9a9a9,#8d8d8d);box-shadow:0 0 0 .8px #b5b5b5,0 1px 2px rgba(0,0,0,.5)"></div>
<svg style="left:603.5px;top:537.1500000000001px;" width="30" height="34" viewBox="0 0 30 34"><path d="M6 26A12.600 12.600 0 1 1 24 26" fill="none" stroke="#363636" stroke-width="3.700"/><circle cx="15" cy="15.500" r="10.800" fill="#848484"/><path d="M15 2.500v9.500" stroke="#2a2a2a" stroke-width="1.300"/><text x="5" y="33.500" font-size="6" font-weight="bold" fill="#c4c4c4" text-anchor="middle">L</text><text x="23.500" y="33.500" font-size="6" font-weight="bold" fill="#c4c4c4" text-anchor="middle">R</text></svg>
<div style="left:244px;top:578.6px;width:401.5px;height:52.650000000000006px;background:#5f5f5f"></div>
<div style="left:244px;top:630.0500000000001px;width:401.5px;height:1px;background:#4e4e4e"></div>
<div style="left:266px;top:578.6px;width:1px;height:51.45px;background:#585858"></div>
<div class="t c" style="left:244px;top:598.5250000000001px;width:22.5px;height:16px;color:#f2f2f2;font-size:14.500px;line-height:16px">26</div>
<svg style="left:298px;top:590.6px;" width="40" height="40" viewBox="0 0 40 40"><g fill="none" stroke="#4da3f5" stroke-width="1.200"><path d="M1.500 1.500h26l12 3.500v7.500H1.500z"/><path d="M1.500 8.500h38M11.500 12.500L31 32M30 12.500L10.500 32"/></g><g stroke="#4da3f5" stroke-width=".8"><path d="M14 8.500v4"/><path d="M16 8.500v4"/><path d="M18 8.500v4"/><path d="M20 8.500v4"/><path d="M22 8.500v4"/><path d="M24 8.500v4"/><path d="M26 8.500v4"/><path d="M28 8.500v4"/><path d="M30 8.500v4"/><path d="M32 8.500v4"/><path d="M34 8.500v4"/><path d="M36 8.500v4"/><path d="M38 8.500v4"/><path d="M4 4h2M8 4h2M4 10.500h8M15 4.500h11"/></g></svg>
<div class="t" style="left:357.5px;top:586.6px;color:#fff;font-size:14px;letter-spacing:.1px">Night of Avalon</div>
<div style="left:357.5px;top:606.6px;width:44px;height:18px;background:#474747;box-shadow:0 .5px 0 rgba(255,255,255,.12);color:#e6e6e6;font-size:14px;line-height:18px;border-radius:3.500px"></div>
<div style="left:379.2px;top:606.6px;width:1px;height:18px;background:#555"></div>
<div class="t c" style="left:357.5px;top:606.6px;width:22px;height:18px;color:#e6e6e6;font-size:14px;line-height:18.500px">M</div>
<div class="t c" style="left:379.5px;top:606.6px;width:22px;height:18px;color:#e6e6e6;font-size:14px;line-height:18.500px">S</div>
<div class="t c" style="left:407.5px;top:606.6px;width:22.5px;height:18px;background:#474747;box-shadow:0 .5px 0 rgba(255,255,255,.12);color:#e6e6e6;font-size:14px;line-height:18px;border-radius:3.500px;">R</div>
<div style="left:463.5px;top:609.1px;width:128.5px;height:13px;background:#333;border-radius:7px;box-shadow:inset 0 1px 1px rgba(0,0,0,.4),0 .5px 0 rgba(255,255,255,.1)"></div>
<div style="left:517.1px;top:606.1px;width:19px;height:19px;border-radius:50%;background:linear-gradient(#a9a9a9,#8d8d8d);box-shadow:0 0 0 .8px #b5b5b5,0 1px 2px rgba(0,0,0,.5)"></div>
<svg style="left:603.5px;top:589.6px;" width="30" height="34" viewBox="0 0 30 34"><path d="M6 26A12.600 12.600 0 1 1 24 26" fill="none" stroke="#363636" stroke-width="3.700"/><circle cx="15" cy="15.500" r="10.800" fill="#848484"/><path d="M15 2.500v9.500" stroke="#2a2a2a" stroke-width="1.300"/><text x="5" y="33.500" font-size="6" font-weight="bold" fill="#c4c4c4" text-anchor="middle">L</text><text x="23.500" y="33.500" font-size="6" font-weight="bold" fill="#c4c4c4" text-anchor="middle">R</text></svg>
<div style="left:244px;top:631.05px;width:401.5px;height:12.450000000000045px;background:#5f5f5f;border-radius:0 0 0 5px"></div>
<div style="left:266px;top:631.05px;width:1px;height:11.950000000000045px;background:#585858"></div>
<div style="left:244px;top:643px;width:1676px;height:2px;background:#1e1e1e"></div>
<div style="left:0px;top:0px;width:0px;height:0px;"></div>
<div style="left:357.5px;top:638.05px;width:200px;height:4.9500000000000455px;overflow:hidden"><div class="t" style="left:0px;top:1px;color:#fff;font-size:14px">Last Reverse</div></div>
<div style="left:318px;top:640px;width:3px;height:3px;background:#4da3f5;border-radius:1px"></div>
<div style="left:645.5px;top:121px;width:1.5px;height:522px;background:#2c2c2c"></div>
<!-- p5_arr -->
<div style="left:647px;top:121px;width:1273px;height:18px;background:#3b3b3b"></div>
<div style="left:748.5px;top:121px;width:1149px;height:18px;background:#545454"></div>
<div style="left:647px;top:139px;width:1273px;height:1px;background:#262626"></div>
<div style="left:647px;top:140px;width:1273px;height:18.5px;background:#333"></div>
<div style="left:647px;top:158.5px;width:1273px;height:484.5px;background:#303030"></div>
<div style="left:657.3px;top:158.5px;width:1262.7px;height:484.5px;background:repeating-linear-gradient(90deg,#3b3b3b 0,#3b3b3b 1px,transparent 1px,transparent 10.21px)"></div>
<div style="left:1898px;top:158.5px;width:22px;height:484.5px;background:rgba(0,0,0,.14)"></div>
<div style="left:647px;top:210.95px;width:1273px;height:1px;background:#2a2a2a"></div>
<div style="left:647px;top:263.4px;width:1273px;height:1px;background:#2a2a2a"></div>
<div style="left:647px;top:315.85px;width:1273px;height:1px;background:#2a2a2a"></div>
<div style="left:647px;top:368.3px;width:1273px;height:1px;background:#2a2a2a"></div>
<div style="left:647px;top:420.75px;width:1273px;height:1px;background:#2a2a2a"></div>
<div style="left:647px;top:473.20000000000005px;width:1273px;height:1px;background:#2a2a2a"></div>
<div style="left:647px;top:525.6500000000001px;width:1273px;height:1px;background:#2a2a2a"></div>
<div style="left:647px;top:578.1px;width:1273px;height:1px;background:#2a2a2a"></div>
<div style="left:647px;top:630.55px;width:1273px;height:1px;background:#2a2a2a"></div>
<div style="left:647px;top:158.5px;width:1273px;height:1px;background:#222"></div>
<div style="left:657.3px;top:123px;width:1px;height:16px;background:#6a6a6a"></div>
<div class="t" style="left:660.8px;top:122.5px;color:#d8d8d8;font-size:14.500px;letter-spacing:-.2px">1</div>
<div style="left:738.98px;top:123px;width:1px;height:16px;background:#6a6a6a"></div>
<div class="t" style="left:742.48px;top:122.5px;color:#d8d8d8;font-size:14.500px;letter-spacing:-.2px">9</div>
<div style="left:820.66px;top:123px;width:1px;height:16px;background:#6a6a6a"></div>
<div class="t" style="left:824.16px;top:122.5px;color:#d8d8d8;font-size:14.500px;letter-spacing:-.2px">17</div>
<div style="left:902.3399999999999px;top:123px;width:1px;height:16px;background:#6a6a6a"></div>
<div class="t" style="left:905.8399999999999px;top:122.5px;color:#d8d8d8;font-size:14.500px;letter-spacing:-.2px">25</div>
<div style="left:984.02px;top:123px;width:1px;height:16px;background:#6a6a6a"></div>
<div class="t" style="left:987.52px;top:122.5px;color:#d8d8d8;font-size:14.500px;letter-spacing:-.2px">33</div>
<div style="left:1065.7px;top:123px;width:1px;height:16px;background:#6a6a6a"></div>
<div class="t" style="left:1069.2px;top:122.5px;color:#d8d8d8;font-size:14.500px;letter-spacing:-.2px">41</div>
<div style="left:1147.38px;top:123px;width:1px;height:16px;background:#6a6a6a"></div>
<div class="t" style="left:1150.88px;top:122.5px;color:#d8d8d8;font-size:14.500px;letter-spacing:-.2px">49</div>
<div style="left:1229.06px;top:123px;width:1px;height:16px;background:#6a6a6a"></div>
<div class="t" style="left:1232.56px;top:122.5px;color:#d8d8d8;font-size:14.500px;letter-spacing:-.2px">57</div>
<div style="left:1310.74px;top:123px;width:1px;height:16px;background:#6a6a6a"></div>
<div class="t" style="left:1314.24px;top:122.5px;color:#d8d8d8;font-size:14.500px;letter-spacing:-.2px">65</div>
<div style="left:1392.42px;top:123px;width:1px;height:16px;background:#6a6a6a"></div>
<div class="t" style="left:1395.92px;top:122.5px;color:#d8d8d8;font-size:14.500px;letter-spacing:-.2px">73</div>
<div style="left:1474.1px;top:123px;width:1px;height:16px;background:#6a6a6a"></div>
<div class="t" style="left:1477.6px;top:122.5px;color:#d8d8d8;font-size:14.500px;letter-spacing:-.2px">81</div>
<div style="left:1555.78px;top:123px;width:1px;height:16px;background:#6a6a6a"></div>
<div class="t" style="left:1559.28px;top:122.5px;color:#d8d8d8;font-size:14.500px;letter-spacing:-.2px">89</div>
<div style="left:1637.46px;top:123px;width:1px;height:16px;background:#6a6a6a"></div>
<div class="t" style="left:1640.96px;top:122.5px;color:#d8d8d8;font-size:14.500px;letter-spacing:-.2px">97</div>
<div style="left:1719.14px;top:123px;width:1px;height:16px;background:#6a6a6a"></div>
<div class="t" style="left:1722.64px;top:122.5px;color:#d8d8d8;font-size:14.500px;letter-spacing:-.2px">105</div>
<div style="left:1800.82px;top:123px;width:1px;height:16px;background:#6a6a6a"></div>
<div class="t" style="left:1804.32px;top:122.5px;color:#d8d8d8;font-size:14.500px;letter-spacing:-.2px">113</div>
<div style="left:1882.5px;top:123px;width:1px;height:16px;background:#6a6a6a"></div>
<div class="t" style="left:1886.0px;top:122.5px;color:#d8d8d8;font-size:14.500px;letter-spacing:-.2px">121</div>
<div style="left:748px;top:121px;width:1.5px;height:18px;background:#2a2a2a"></div>
<svg style="left:648px;top:123px;" width="10" height="15" viewBox="0 0 10 15"><path d="M.5 .5v14l8-7z" fill="#4a4a4a" stroke="#6a6a6a" stroke-width="1"/></svg>
<svg style="left:0px;top:0px;" width="1920" height="160" viewBox="0 0 1920 160"><path d="M668 158.500V148l7-7.500H749V158.500z" fill="#3a506c"/><path d="M749 158.500V148l7-7.500H928V158.500z" fill="#3a506c"/><path d="M928 158.500V148l7-7.500H1117V158.500z" fill="#3a506c"/><path d="M1117 158.500V148l7-7.500H1295V158.500z" fill="#3a506c"/><path d="M1295 158.500V148l7-7.500H1484V158.500z" fill="#3a506c"/><path d="M1484 158.500V148l7-7.500H1664V158.500z" fill="#3a506c"/><path d="M1664 158.500V148l7-7.500H1921V158.500z" fill="#3a506c"/><path d="M668.0 144v14M678.2 144v14M688.4 144v14M698.6 144v14M708.8 144v14M719.1 144v14M729.3 144v14M739.5 144v14M749.7 144v14M759.9 144v14M770.1 144v14M780.3 144v14M790.5 144v14M800.7 144v14M810.9 144v14M821.2 144v14M831.4 144v14M841.6 144v14M851.8 144v14M862.0 144v14M872.2 144v14M882.4 144v14M892.6 144v14M902.8 144v14M913.0 144v14M923.3 144v14M933.5 144v14M943.7 144v14M953.9 144v14M964.1 144v14M974.3 144v14M984.5 144v14M994.7 144v14M1004.9 144v14M1015.1 144v14M1025.4 144v14M1035.6 144v14M1045.8 144v14M1056.0 144v14M1066.2 144v14M1076.4 144v14M1086.6 144v14M1096.8 144v14M1107.0 144v14M1117.2 144v14M1127.5 144v14M1137.7 144v14M1147.9 144v14M1158.1 144v14M1168.3 144v14M1178.5 144v14M1188.7 144v14M1198.9 144v14M1209.1 144v14M1219.3 144v14M1229.6 144v14M1239.8 144v14M1250.0 144v14M1260.2 144v14M1270.4 144v14M1280.6 144v14M1290.8 144v14M1301.0 144v14M1311.2 144v14M1321.4 144v14M1331.7 144v14M1341.9 144v14M1352.1 144v14M1362.3 144v14M1372.5 144v14M1382.7 144v14M1392.9 144v14M1403.1 144v14M1413.3 144v14M1423.5 144v14M1433.8 144v14M1444.0 144v14M1454.2 144v14M1464.4 144v14M1474.6 144v14M1484.8 144v14M1495.0 144v14M1505.2 144v14M1515.4 144v14M1525.6 144v14M1535.9 144v14M1546.1 144v14M1556.3 144v14M1566.5 144v14M1576.7 144v14M1586.9 144v14M1597.1 144v14M1607.3 144v14M1617.5 144v14M1627.7 144v14M1638.0 144v14M1648.2 144v14M1658.4 144v14M1668.6 144v14M1678.8 144v14M1689.0 144v14M1699.2 144v14M1709.4 144v14M1719.6 144v14M1729.8 144v14M1740.1 144v14M1750.3 144v14M1760.5 144v14M1770.7 144v14M1780.9 144v14M1791.1 144v14M1801.3 144v14M1811.5 144v14M1821.7 144v14M1831.9 144v14M1842.2 144v14M1852.4 144v14M1862.6 144v14M1872.8 144v14M1883.0 144v14M1893.2 144v14M1903.4 144v14M1913.6 144v14" stroke="#4b6380" stroke-width="1"/><path d="M668 158.500V148l7-7.500" fill="none" stroke="#23303f" stroke-width="1.200"/><path d="M749 158.500V148l7-7.500" fill="none" stroke="#23303f" stroke-width="1.200"/><path d="M928 158.500V148l7-7.500" fill="none" stroke="#23303f" stroke-width="1.200"/><path d="M1117 158.500V148l7-7.500" fill="none" stroke="#23303f" stroke-width="1.200"/><path d="M1295 158.500V148l7-7.500" fill="none" stroke="#23303f" stroke-width="1.200"/><path d="M1484 158.500V148l7-7.500" fill="none" stroke="#23303f" stroke-width="1.200"/><path d="M1664 158.500V148l7-7.500" fill="none" stroke="#23303f" stroke-width="1.200"/></svg>
<div class="t" style="left:685.5px;top:143.5px;color:#f4f6fa;font-size:12.500px;font-weight:bold;letter-spacing:-.1px">Intro</div>
<div class="t" style="left:768px;top:143.5px;color:#f4f6fa;font-size:12.500px;font-weight:bold;letter-spacing:-.1px">Verse 1</div>
<div class="t" style="left:946px;top:143.5px;color:#f4f6fa;font-size:12.500px;font-weight:bold;letter-spacing:-.1px">Chorus 1</div>
<div class="t" style="left:1135px;top:143.5px;color:#f4f6fa;font-size:12.500px;font-weight:bold;letter-spacing:-.1px">Verse 2</div>
<div class="t" style="left:1313.5px;top:143.5px;color:#f4f6fa;font-size:12.500px;font-weight:bold;letter-spacing:-.1px">Chorus 2</div>
<div class="t" style="left:1502px;top:143.5px;color:#f4f6fa;font-size:12.500px;font-weight:bold;letter-spacing:-.1px">Breakdown</div>
<div class="t" style="left:1680.5px;top:143.5px;color:#f4f6fa;font-size:12.500px;font-weight:bold;letter-spacing:-.1px">Outro</div>
<div style="left:748.5px;top:161.0px;width:226.0px;height:48.35px;background:#d217aa;border-radius:4px;box-shadow:0 0 0 1px rgba(20,10,20,.75);overflow:hidden"><!--R--></div>
<div style="left:752.5px;top:165.5px;width:16px;height:12.5px;background:#a31388;border-radius:1px"></div>
<svg style="left:756.5px;top:167.5px;" width="9" height="9" viewBox="0 0 9 9"><path d="M.5 .3v8.400l8-4.200z" fill="#fff"/></svg>
<div style="left:770.5px;top:165.5px;width:14px;height:12.5px;background:#a31388;border-radius:1px"></div>
<div class="t c" style="left:770.5px;top:166.0px;width:14px;height:12px;color:#fff;font-size:10.500px;line-height:12px">B</div>
<div style="left:786.5px;top:165.5px;width:18px;height:12.5px;background:#a31388;border-radius:1px"></div>
<svg style="left:789.5px;top:168.0px;" width="12" height="8" viewBox="0 0 12 8"><g fill="#fff"><rect x="0" y="5" width="3.500" height="2.300"/><rect x="4.300" y="1" width="3.500" height="2.300"/><rect x="8.500" y="5" width="3.500" height="2.300"/><rect x="3.200" y="3.800" width="1.200" height="1.200"/><rect x="7.700" y="3.800" width="1.200" height="1.200"/></g></svg>
<div style="left:810.0px;top:164.5px;width:163.5px;height:15px;overflow:hidden"><div class="t" style="left:0px;top:0.7px;color:#fff;font-size:12.100px;letter-spacing:.2px;text-shadow:0 0 .4px #fff">Verse Vocals: Comp B</div></div>
<svg style="left:942.5px;top:165.5px;" width="12" height="13" viewBox="0 0 12 13"><path d="M1 .7h10M1 12.300h10" stroke="#fff" stroke-width="1.100"/><ellipse cx="6" cy="6.500" rx="4.800" ry="3.700" fill="none" stroke="#fff" stroke-width="1.100"/></svg>
<div style="left:1117px;top:161.0px;width:217.5px;height:48.35px;background:#d217aa;border-radius:4px;box-shadow:0 0 0 1px rgba(20,10,20,.75);overflow:hidden"><!--R--></div>
<div style="left:1121px;top:165.5px;width:16px;height:12.5px;background:#a31388;border-radius:1px"></div>
<svg style="left:1125px;top:167.5px;" width="9" height="9" viewBox="0 0 9 9"><path d="M.5 .3v8.400l8-4.200z" fill="#fff"/></svg>
<div style="left:1139px;top:165.5px;width:14px;height:12.5px;background:#a31388;border-radius:1px"></div>
<div class="t c" style="left:1139px;top:166.0px;width:14px;height:12px;color:#fff;font-size:10.500px;line-height:12px">A</div>
<div style="left:1155px;top:165.5px;width:18px;height:12.5px;background:#a31388;border-radius:1px"></div>
<svg style="left:1158px;top:168.0px;" width="12" height="8" viewBox="0 0 12 8"><g fill="#fff"><rect x="0" y="5" width="3.500" height="2.300"/><rect x="4.300" y="1" width="3.500" height="2.300"/><rect x="8.500" y="5" width="3.500" height="2.300"/><rect x="3.200" y="3.800" width="1.200" height="1.200"/><rect x="7.700" y="3.800" width="1.200" height="1.200"/></g></svg>
<div style="left:1178.5px;top:164.5px;width:155.0px;height:15px;overflow:hidden"><div class="t" style="left:0px;top:0.7px;color:#fff;font-size:12.100px;letter-spacing:.2px;text-shadow:0 0 .4px #fff">Verse Vocals: Comp A</div></div>
<svg style="left:1310.5px;top:165.5px;" width="12" height="13" viewBox="0 0 12 13"><path d="M1 .7h10M1 12.300h10" stroke="#fff" stroke-width="1.100"/><ellipse cx="6" cy="6.500" rx="4.800" ry="3.700" fill="none" stroke="#fff" stroke-width="1.100"/></svg>
<div style="left:1662.7px;top:161.0px;width:33.0px;height:48.35px;background:#d217aa;border-radius:4px;box-shadow:0 0 0 1px rgba(20,10,20,.75);overflow:hidden"><!--R--></div>
<div style="left:1666.7px;top:165.5px;width:16px;height:12.5px;background:#a31388;border-radius:1px"></div>
<svg style="left:1670.7px;top:167.5px;" width="9" height="9" viewBox="0 0 9 9"><path d="M.5 .3v8.400l8-4.200z" fill="#fff"/></svg>
<div style="left:1704px;top:161.0px;width:71px;height:48.35px;background:#d217aa;border-radius:4px;box-shadow:0 0 0 1px rgba(20,10,20,.75);overflow:hidden"><!--R--></div>
<div style="left:1708px;top:165.5px;width:16px;height:12.5px;background:#a31388;border-radius:1px"></div>
<svg style="left:1712px;top:167.5px;" width="9" height="9" viewBox="0 0 9 9"><path d="M.5 .3v8.400l8-4.200z" fill="#fff"/></svg>
<div style="left:1726px;top:165.5px;width:14px;height:12.5px;background:#a31388;border-radius:1px"></div>
<div class="t c" style="left:1726px;top:166.0px;width:14px;height:12px;color:#fff;font-size:10.500px;line-height:12px">A</div>
<div style="left:1742px;top:165.5px;width:18px;height:12.5px;background:#a31388;border-radius:1px"></div>
<svg style="left:1745px;top:168.0px;" width="12" height="8" viewBox="0 0 12 8"><g fill="#fff"><rect x="0" y="5" width="3.500" height="2.300"/><rect x="4.300" y="1" width="3.500" height="2.300"/><rect x="8.500" y="5" width="3.500" height="2.300"/><rect x="3.200" y="3.800" width="1.200" height="1.200"/><rect x="7.700" y="3.800" width="1.200" height="1.200"/></g></svg>
<div style="left:1786.7px;top:161.0px;width:111.0px;height:48.35px;background:#d217aa;border-radius:4px;box-shadow:0 0 0 1px rgba(20,10,20,.75);overflow:hidden"><!--R--></div>
<div style="left:1790.7px;top:165.5px;width:16px;height:12.5px;background:#a31388;border-radius:1px"></div>
<svg style="left:1794.7px;top:167.5px;" width="9" height="9" viewBox="0 0 9 9"><path d="M.5 .3v8.400l8-4.200z" fill="#fff"/></svg>
<div style="left:1808.7px;top:165.5px;width:14px;height:12.5px;background:#a31388;border-radius:1px"></div>
<div class="t c" style="left:1808.7px;top:166.0px;width:14px;height:12px;color:#fff;font-size:10.500px;line-height:12px">B</div>
<div style="left:1824.7px;top:165.5px;width:18px;height:12.5px;background:#a31388;border-radius:1px"></div>
<svg style="left:1827.7px;top:168.0px;" width="12" height="8" viewBox="0 0 12 8"><g fill="#fff"><rect x="0" y="5" width="3.500" height="2.300"/><rect x="4.300" y="1" width="3.500" height="2.300"/><rect x="8.500" y="5" width="3.500" height="2.300"/><rect x="3.200" y="3.800" width="1.200" height="1.200"/><rect x="7.700" y="3.800" width="1.200" height="1.200"/></g></svg>
<div style="left:1848.2px;top:164.5px;width:48.5px;height:15px;overflow:hidden"><div class="t" style="left:0px;top:0.7px;color:#fff;font-size:12.100px;letter-spacing:.2px;text-shadow:0 0 .4px #fff">Verse V</div></div>
<div style="left:1177.5px;top:213.45px;width:12.0px;height:48.35px;background:#c62ac9;border-radius:4px;box-shadow:0 0 0 1px rgba(20,10,20,.75);overflow:hidden"><!--R--></div>
<div style="left:922.7px;top:265.9px;width:188.29999999999995px;height:48.35px;background:#a818cb;border-radius:4px;box-shadow:0 0 0 1px rgba(20,10,20,.75);overflow:hidden"><!--R--></div>
<div style="left:927.7px;top:269.4px;width:182.29999999999995px;height:15px;overflow:hidden"><div class="t" style="left:0px;top:0.7px;color:#fff;font-size:12.100px;letter-spacing:.2px;text-shadow:0 0 .4px #fff">Vocal Stack</div></div>
<div style="left:922.7px;top:284.9px;width:188.29999999999995px;height:29.35px;background:repeating-linear-gradient(#9513b8 0,#9513b8 5px,#a017c2 5px,#a017c2 10px);border-radius:0 0 4px 4px;opacity:.9"></div>
<div style="left:1290px;top:265.9px;width:189.29999999999995px;height:48.35px;background:#a818cb;border-radius:4px;box-shadow:0 0 0 1px rgba(20,10,20,.75);overflow:hidden"><!--R--></div>
<div style="left:1295px;top:269.4px;width:183.29999999999995px;height:15px;overflow:hidden"><div class="t" style="left:0px;top:0.7px;color:#fff;font-size:12.100px;letter-spacing:.2px;text-shadow:0 0 .4px #fff">Vocal Stack</div></div>
<div style="left:1290px;top:284.9px;width:189.29999999999995px;height:29.35px;background:repeating-linear-gradient(#9513b8 0,#9513b8 5px,#a017c2 5px,#a017c2 10px);border-radius:0 0 4px 4px;opacity:.9"></div>
<div style="left:1300.7px;top:318.35px;width:151.5999999999999px;height:48.35px;background:#9a36dc;border-radius:4px;box-shadow:0 0 0 1px rgba(20,10,20,.75);overflow:hidden"><!--R--></div>
<div style="left:1304.7px;top:322.85px;width:16px;height:12.5px;background:#7d27b8;border-radius:1px"></div>
<svg style="left:1308.7px;top:324.85px;" width="9" height="9" viewBox="0 0 9 9"><path d="M.5 .3v8.400l8-4.200z" fill="#fff"/></svg>
<div style="left:1322.7px;top:322.85px;width:14px;height:12.5px;background:#7d27b8;border-radius:1px"></div>
<div class="t c" style="left:1322.7px;top:323.35px;width:14px;height:12px;color:#fff;font-size:10.500px;line-height:12px">B</div>
<div style="left:1338.7px;top:322.85px;width:18px;height:12.5px;background:#7d27b8;border-radius:1px"></div>
<svg style="left:1341.7px;top:325.35px;" width="12" height="8" viewBox="0 0 12 8"><g fill="#fff"><rect x="0" y="5" width="3.500" height="2.300"/><rect x="4.300" y="1" width="3.500" height="2.300"/><rect x="8.500" y="5" width="3.500" height="2.300"/><rect x="3.200" y="3.800" width="1.200" height="1.200"/><rect x="7.700" y="3.800" width="1.200" height="1.200"/></g></svg>
<div style="left:1362.2px;top:321.85px;width:89.09999999999991px;height:15px;overflow:hidden"><div class="t" style="left:0px;top:0.7px;color:#fff;font-size:12.100px;letter-spacing:.2px;text-shadow:0 0 .4px #fff">Vocal Response</div></div>
<div style="left:1524px;top:318.35px;width:142.70000000000005px;height:48.35px;background:#9a36dc;border-radius:4px;box-shadow:0 0 0 1px rgba(20,10,20,.75);overflow:hidden"><!--R--></div>
<div style="left:1528px;top:322.85px;width:16px;height:12.5px;background:#7d27b8;border-radius:1px"></div>
<svg style="left:1532px;top:324.85px;" width="9" height="9" viewBox="0 0 9 9"><path d="M.5 .3v8.400l8-4.200z" fill="#fff"/></svg>
<div style="left:1546px;top:322.85px;width:14px;height:12.5px;background:#7d27b8;border-radius:1px"></div>
<div class="t c" style="left:1546px;top:323.35px;width:14px;height:12px;color:#fff;font-size:10.500px;line-height:12px">A</div>
<div style="left:1562px;top:322.85px;width:18px;height:12.5px;background:#7d27b8;border-radius:1px"></div>
<svg style="left:1565px;top:325.35px;" width="12" height="8" viewBox="0 0 12 8"><g fill="#fff"><rect x="0" y="5" width="3.500" height="2.300"/><rect x="4.300" y="1" width="3.500" height="2.300"/><rect x="8.500" y="5" width="3.500" height="2.300"/><rect x="3.200" y="3.800" width="1.200" height="1.200"/><rect x="7.700" y="3.800" width="1.200" height="1.200"/></g></svg>
<div style="left:1585.5px;top:321.85px;width:80.20000000000005px;height:15px;overflow:hidden"><div class="t" style="left:0px;top:0.7px;color:#fff;font-size:12.100px;letter-spacing:.2px;text-shadow:0 0 .4px #fff">Vocal Respon</div></div>
<div style="left:1480px;top:370.8px;width:187.70000000000005px;height:48.35px;background:#7a3ad6;border-radius:4px;box-shadow:0 0 0 1px rgba(20,10,20,.75);overflow:hidden"><!--R--></div>
<div style="left:1485px;top:374.3px;width:181.70000000000005px;height:15px;overflow:hidden"><div class="t" style="left:0px;top:0.7px;color:#fff;font-size:12.100px;letter-spacing:.2px;text-shadow:0 0 .4px #fff">Ghostly Vocals</div></div>
<svg style="left:1576px;top:375.3px;" width="15" height="11.5" viewBox="0 0 15 11.5"><path d="M0 .6h15M0 10.900h15" stroke="#fff" stroke-width="1"/><circle cx="5.300" cy="5.700" r="3.300" fill="none" stroke="#fff" stroke-width="1"/><circle cx="9.700" cy="5.700" r="3.300" fill="none" stroke="#fff" stroke-width="1"/></svg>
<div style="left:662.7px;top:423.25px;width:80.59999999999991px;height:48.35px;background:#5b3edb;border-radius:4px;box-shadow:0 0 0 1px rgba(20,10,20,.75);overflow:hidden"><!--R--></div>
<div style="left:667.7px;top:426.75px;width:74.59999999999991px;height:15px;overflow:hidden"><div class="t" style="left:0px;top:0.7px;color:#fff;font-size:12.100px;letter-spacing:.2px;text-shadow:0 0 .4px #fff">Vocal Textur</div></div>
<div style="left:662.7px;top:443.25px;width:80.59999999999991px;height:28.35px;background:repeating-linear-gradient(#4d31c6 0,#4d31c6 2.500px,#5236cd 2.500px,#5236cd 3.500px);border-radius:0 0 4px 4px"></div>
<div style="left:748.3px;top:423.25px;width:75.40000000000009px;height:48.35px;background:#5b3edb;border-radius:4px;box-shadow:0 0 0 1px rgba(20,10,20,.75);overflow:hidden"><!--R--></div>
<div style="left:753.3px;top:426.75px;width:69.40000000000009px;height:15px;overflow:hidden"><div class="t" style="left:0px;top:0.7px;color:#fff;font-size:12.100px;letter-spacing:.2px;text-shadow:0 0 .4px #fff">Vocal Textur</div></div>
<div style="left:748.3px;top:443.25px;width:75.40000000000009px;height:28.35px;background:repeating-linear-gradient(#4d31c6 0,#4d31c6 2.500px,#5236cd 2.500px,#5236cd 3.500px);border-radius:0 0 4px 4px"></div>
<div style="left:827.7px;top:423.25px;width:99.59999999999991px;height:48.35px;background:#5b3edb;border-radius:4px;box-shadow:0 0 0 1px rgba(20,10,20,.75);overflow:hidden"><!--R--></div>
<div style="left:832.7px;top:426.75px;width:93.59999999999991px;height:15px;overflow:hidden"><div class="t" style="left:0px;top:0.7px;color:#fff;font-size:12.100px;letter-spacing:.2px;text-shadow:0 0 .4px #fff">Vocal Textures</div></div>
<div style="left:827.7px;top:443.25px;width:99.59999999999991px;height:28.35px;background:repeating-linear-gradient(#4d31c6 0,#4d31c6 2.500px,#5236cd 2.500px,#5236cd 3.500px);border-radius:0 0 4px 4px"></div>
<div style="left:931.7px;top:423.25px;width:76.0px;height:48.35px;background:#5b3edb;border-radius:4px;box-shadow:0 0 0 1px rgba(20,10,20,.75);overflow:hidden"><!--R--></div>
<div style="left:936.7px;top:426.75px;width:70.0px;height:15px;overflow:hidden"><div class="t" style="left:0px;top:0.7px;color:#fff;font-size:12.100px;letter-spacing:.2px;text-shadow:0 0 .4px #fff">Vocal Textur</div></div>
<div style="left:931.7px;top:443.25px;width:76.0px;height:28.35px;background:repeating-linear-gradient(#4d31c6 0,#4d31c6 2.500px,#5236cd 2.500px,#5236cd 3.500px);border-radius:0 0 4px 4px"></div>
<div style="left:1011px;top:423.25px;width:99.70000000000005px;height:48.35px;background:#5b3edb;border-radius:4px;box-shadow:0 0 0 1px rgba(20,10,20,.75);overflow:hidden"><!--R--></div>
<div style="left:1016px;top:426.75px;width:93.70000000000005px;height:15px;overflow:hidden"><div class="t" style="left:0px;top:0.7px;color:#fff;font-size:12.100px;letter-spacing:.2px;text-shadow:0 0 .4px #fff">Vocal Textures</div></div>
<div style="left:1011px;top:443.25px;width:99.70000000000005px;height:28.35px;background:repeating-linear-gradient(#4d31c6 0,#4d31c6 2.500px,#5236cd 2.500px,#5236cd 3.500px);border-radius:0 0 4px 4px"></div>
<div style="left:1115.7px;top:423.25px;width:76.0px;height:48.35px;background:#5b3edb;border-radius:4px;box-shadow:0 0 0 1px rgba(20,10,20,.75);overflow:hidden"><!--R--></div>
<div style="left:1120.7px;top:426.75px;width:70.0px;height:15px;overflow:hidden"><div class="t" style="left:0px;top:0.7px;color:#fff;font-size:12.100px;letter-spacing:.2px;text-shadow:0 0 .4px #fff">Vocal Textur</div></div>
<div style="left:1115.7px;top:443.25px;width:76.0px;height:28.35px;background:repeating-linear-gradient(#4d31c6 0,#4d31c6 2.500px,#5236cd 2.500px,#5236cd 3.500px);border-radius:0 0 4px 4px"></div>
<div style="left:1195px;top:423.25px;width:100px;height:48.35px;background:#5b3edb;border-radius:4px;box-shadow:0 0 0 1px rgba(20,10,20,.75);overflow:hidden"><!--R--></div>
<div style="left:1200px;top:426.75px;width:94px;height:15px;overflow:hidden"><div class="t" style="left:0px;top:0.7px;color:#fff;font-size:12.100px;letter-spacing:.2px;text-shadow:0 0 .4px #fff">Vocal Textures</div></div>
<div style="left:1195px;top:443.25px;width:100px;height:28.35px;background:repeating-linear-gradient(#4d31c6 0,#4d31c6 2.500px,#5236cd 2.500px,#5236cd 3.500px);border-radius:0 0 4px 4px"></div>
<div style="left:1299px;top:423.25px;width:76px;height:48.35px;background:#5b3edb;border-radius:4px;box-shadow:0 0 0 1px rgba(20,10,20,.75);overflow:hidden"><!--R--></div>
<div style="left:1304px;top:426.75px;width:70px;height:15px;overflow:hidden"><div class="t" style="left:0px;top:0.7px;color:#fff;font-size:12.100px;letter-spacing:.2px;text-shadow:0 0 .4px #fff">Vocal Textur</div></div>
<div style="left:1299px;top:443.25px;width:76px;height:28.35px;background:repeating-linear-gradient(#4d31c6 0,#4d31c6 2.500px,#5236cd 2.500px,#5236cd 3.500px);border-radius:0 0 4px 4px"></div>
<div style="left:1378.3px;top:423.25px;width:99.40000000000009px;height:48.35px;background:#5b3edb;border-radius:4px;box-shadow:0 0 0 1px rgba(20,10,20,.75);overflow:hidden"><!--R--></div>
<div style="left:1383.3px;top:426.75px;width:93.40000000000009px;height:15px;overflow:hidden"><div class="t" style="left:0px;top:0.7px;color:#fff;font-size:12.100px;letter-spacing:.2px;text-shadow:0 0 .4px #fff">Vocal Textures</div></div>
<div style="left:1378.3px;top:443.25px;width:99.40000000000009px;height:28.35px;background:repeating-linear-gradient(#4d31c6 0,#4d31c6 2.500px,#5236cd 2.500px,#5236cd 3.500px);border-radius:0 0 4px 4px"></div>
<div style="left:1482.7px;top:423.25px;width:76.0px;height:48.35px;background:#5b3edb;border-radius:4px;box-shadow:0 0 0 1px rgba(20,10,20,.75);overflow:hidden"><!--R--></div>
<div style="left:1487.7px;top:426.75px;width:70.0px;height:15px;overflow:hidden"><div class="t" style="left:0px;top:0.7px;color:#fff;font-size:12.100px;letter-spacing:.2px;text-shadow:0 0 .4px #fff">Vocal Textur</div></div>
<div style="left:1482.7px;top:443.25px;width:76.0px;height:28.35px;background:repeating-linear-gradient(#4d31c6 0,#4d31c6 2.500px,#5236cd 2.500px,#5236cd 3.500px);border-radius:0 0 4px 4px"></div>
<div style="left:1562px;top:423.25px;width:100.29999999999995px;height:48.35px;background:#5b3edb;border-radius:4px;box-shadow:0 0 0 1px rgba(20,10,20,.75);overflow:hidden"><!--R--></div>
<div style="left:1567px;top:426.75px;width:94.29999999999995px;height:15px;overflow:hidden"><div class="t" style="left:0px;top:0.7px;color:#fff;font-size:12.100px;letter-spacing:.2px;text-shadow:0 0 .4px #fff">Vocal Textures</div></div>
<div style="left:1562px;top:443.25px;width:100.29999999999995px;height:28.35px;background:repeating-linear-gradient(#4d31c6 0,#4d31c6 2.500px,#5236cd 2.500px,#5236cd 3.500px);border-radius:0 0 4px 4px"></div>
<div style="left:657.3px;top:475.70000000000005px;width:1010.4000000000001px;height:48.35px;background:#4a3fd8;border-radius:4px;box-shadow:0 0 0 1px rgba(20,10,20,.75);overflow:hidden"><!--R--></div>
<div style="left:657.3px;top:475.70000000000005px;width:1010.4px;height:20px;background:#d4cdfb;border-radius:4px 4px 0 0"></div>
<div style="left:662.3px;top:479.20000000000005px;width:1004.4000000000001px;height:15px;overflow:hidden"><div class="t" style="left:0px;top:0.7px;color:#372c9c;font-size:12.100px;letter-spacing:.2px;text-shadow:0 0 .4px #372c9c">Dark Pad</div></div>
<div style="left:657.3px;top:475.70000000000005px;width:1010.4px;height:48.35px;border-radius:4px;box-shadow:0 0 0 1px #e9e5ff;background:none"></div>
<div style="left:932.7px;top:528.1500000000001px;width:183.0px;height:48.35px;background:#3d69d8;border-radius:4px;box-shadow:0 0 0 1px rgba(20,10,20,.75);overflow:hidden"><!--R--></div>
<div style="left:937.7px;top:531.6500000000001px;width:177.0px;height:15px;overflow:hidden"><div class="t" style="left:0px;top:0.7px;color:#fff;font-size:12.100px;letter-spacing:.2px;text-shadow:0 0 .4px #fff">Custom Soft Piano</div></div>
<div style="left:1116.7px;top:528.1500000000001px;width:183.29999999999995px;height:48.35px;background:#3d69d8;border-radius:4px;box-shadow:0 0 0 1px rgba(20,10,20,.75);overflow:hidden"><!--R--></div>
<div style="left:1121.7px;top:531.6500000000001px;width:177.29999999999995px;height:15px;overflow:hidden"><div class="t" style="left:0px;top:0.7px;color:#fff;font-size:12.100px;letter-spacing:.2px;text-shadow:0 0 .4px #fff">Custom Soft Piano</div></div>
<div style="left:1301px;top:528.1500000000001px;width:181.70000000000005px;height:48.35px;background:#3d69d8;border-radius:4px;box-shadow:0 0 0 1px rgba(20,10,20,.75);overflow:hidden"><!--R--></div>
<div style="left:1306px;top:531.6500000000001px;width:175.70000000000005px;height:15px;overflow:hidden"><div class="t" style="left:0px;top:0.7px;color:#fff;font-size:12.100px;letter-spacing:.2px;text-shadow:0 0 .4px #fff">Custom Soft Piano</div></div>
<div style="left:1484px;top:528.1500000000001px;width:182.70000000000005px;height:48.35px;background:#3d69d8;border-radius:4px;box-shadow:0 0 0 1px rgba(20,10,20,.75);overflow:hidden"><!--R--></div>
<div style="left:1489px;top:531.6500000000001px;width:176.70000000000005px;height:15px;overflow:hidden"><div class="t" style="left:0px;top:0.7px;color:#fff;font-size:12.100px;letter-spacing:.2px;text-shadow:0 0 .4px #fff">Custom Soft Piano</div></div>
<div style="left:1668.3px;top:528.1500000000001px;width:244.0px;height:48.35px;background:#3d69d8;border-radius:4px;box-shadow:0 0 0 1px rgba(20,10,20,.75);overflow:hidden"><!--R--></div>
<div style="left:1673.3px;top:531.6500000000001px;width:238.0px;height:15px;overflow:hidden"><div class="t" style="left:0px;top:0.7px;color:#fff;font-size:12.100px;letter-spacing:.2px;text-shadow:0 0 .4px #fff">Custom Soft Piano</div></div>
<div style="left:932.7px;top:580.6px;width:183.0px;height:48.35px;background:#2c86d9;border-radius:4px;box-shadow:0 0 0 1px rgba(20,10,20,.75);overflow:hidden"><!--R--></div>
<div style="left:937.7px;top:584.1px;width:177.0px;height:15px;overflow:hidden"><div class="t" style="left:0px;top:0.7px;color:#fff;font-size:12.100px;letter-spacing:.2px;text-shadow:0 0 .4px #fff">Night of Avalon</div></div>
<div style="left:1301px;top:580.6px;width:181.70000000000005px;height:48.35px;background:#2c86d9;border-radius:4px;box-shadow:0 0 0 1px rgba(20,10,20,.75);overflow:hidden"><!--R--></div>
<div style="left:1306px;top:584.1px;width:175.70000000000005px;height:15px;overflow:hidden"><div class="t" style="left:0px;top:0.7px;color:#fff;font-size:12.100px;letter-spacing:.2px;text-shadow:0 0 .4px #fff">Night of Avalon</div></div>
<div style="left:1484px;top:580.6px;width:182.70000000000005px;height:48.35px;background:#2c86d9;border-radius:4px;box-shadow:0 0 0 1px rgba(20,10,20,.75);overflow:hidden"><!--R--></div>
<div style="left:1489px;top:584.1px;width:176.70000000000005px;height:15px;overflow:hidden"><div class="t" style="left:0px;top:0.7px;color:#fff;font-size:12.100px;letter-spacing:.2px;text-shadow:0 0 .4px #fff">Night of Avalon</div></div>
<div style="left:932.7px;top:633.05px;width:173.29999999999995px;height:9.950000000000045px;background:#2b95d8;border-radius:4px 4px 0 0;box-shadow:0 0 0 1px rgba(10,15,20,.75);overflow:hidden"><div class="t" style="left:5px;top:4.5px;color:#fff;font-size:12.100px;letter-spacing:.2px">Last Reverse</div></div>
<div style="left:1301px;top:633.05px;width:181.70000000000005px;height:9.950000000000045px;background:#2b95d8;border-radius:4px 4px 0 0;box-shadow:0 0 0 1px rgba(10,15,20,.75);overflow:hidden"><div class="t" style="left:5px;top:4.5px;color:#fff;font-size:12.100px;letter-spacing:.2px">Last Reverse</div></div>
<svg style="left:0px;top:0px;pointer-events:none" width="1920" height="645" viewBox="0 0 1920 645"><path d="M749.5 193.7H973.5M750.8 193.3v0.8M763.4 192.6v2.1M770.8 193.3v0.7M771.8 193.3v0.7M772.8 193.2v0.9M790.0 193.1v1.2M803.4 193.2v0.9M804.4 193.0v1.3M805.4 193.4v0.6M806.4 193.1v1.2M807.4 193.3v0.8M813.7 193.1v1.1M814.7 193.1v1.2M820.3 192.7v1.9M833.1 193.2v1.0M845.0 192.7v1.9M846.0 192.4v2.6M855.8 192.9v1.6M863.7 192.6v2.1M864.7 192.8v1.8M865.7 192.7v2.0M866.7 192.5v2.3M867.7 193.0v1.4M879.9 193.2v0.9M880.9 193.1v1.2M885.5 192.5v2.4M886.5 192.2v2.9M887.5 192.7v2.0M888.5 192.4v2.6M889.5 192.4v2.5M902.8 192.5v2.4M914.4 192.3v2.7M923.4 192.8v1.8M924.4 192.7v1.9M925.4 192.5v2.4M929.7 192.7v2.0M941.6 193.2v0.9M942.6 193.2v1.0M952.9 192.6v2.1M963.3 192.8v1.8" fill="none" stroke="#ffd6f5" stroke-width="1"/><path d="M751.2 181.5V206.35" stroke="rgba(70,10,60,.85)" stroke-width="1.1"/><path d="M759.5 181.5V206.35" stroke="rgba(70,10,60,.85)" stroke-width="1.1"/><path d="M784.5 181.5V206.35" stroke="rgba(70,10,60,.85)" stroke-width="1.1"/><path d="M789.5 181.5V206.35" stroke="rgba(70,10,60,.85)" stroke-width="1.1"/><path d="M808.5 181.5V206.35" stroke="rgba(70,10,60,.85)" stroke-width="2.6"/><path d="M814.5 181.5V206.35" stroke="rgba(70,10,60,.85)" stroke-width="1.1"/><path d="M830.5 181.5V206.35" stroke="rgba(70,10,60,.85)" stroke-width="1.1"/><path d="M847.5 181.5V206.35" stroke="rgba(70,10,60,.85)" stroke-width="1.1"/><path d="M936.2 181.5V206.35" stroke="rgba(70,10,60,.85)" stroke-width="1.1"/><path d="M941.8 181.5V206.35" stroke="rgba(70,10,60,.85)" stroke-width="1.1"/><path d="M1118.0 193.7H1333.5M1119.1 192.7v2.0M1120.1 192.9v1.6M1127.8 193.3v0.8M1135.5 193.0v1.4M1136.5 192.9v1.6M1137.5 193.0v1.4M1138.5 192.7v1.9M1139.5 192.7v2.0M1148.6 193.0v1.4M1149.6 193.1v1.2M1150.6 193.0v1.3M1151.6 193.2v1.0M1152.6 193.0v1.4M1171.9 192.6v2.1M1172.9 192.6v2.1M1173.9 192.9v1.6M1174.9 192.4v2.6M1175.9 192.9v1.6M1180.9 193.2v0.9M1194.6 193.3v0.8M1195.6 193.3v0.7M1196.6 193.2v0.9M1197.6 193.3v0.7M1198.6 193.0v1.3M1212.4 192.9v1.5M1213.4 193.1v1.2M1225.0 193.0v1.4M1226.0 193.2v1.0M1227.0 193.2v1.0M1232.3 193.1v1.2M1233.3 193.2v1.0M1248.4 192.4v2.6M1260.9 192.9v1.5M1261.9 193.0v1.3M1262.9 193.2v1.0M1263.9 193.1v1.2M1264.9 193.3v0.8M1282.4 192.8v1.7M1290.0 192.8v1.8M1291.0 192.9v1.6M1292.0 192.4v2.5M1293.0 192.3v2.7M1294.0 192.4v2.5M1310.9 192.7v2.0M1322.7 192.2v3.0" fill="none" stroke="#ffd6f5" stroke-width="1"/><path d="M1185 181.5V206.35" stroke="rgba(70,10,60,.85)" stroke-width="1.1"/><path d="M1192 181.5V206.35" stroke="rgba(70,10,60,.85)" stroke-width="1.1"/><path d="M1276 181.5V206.35" stroke="rgba(70,10,60,.85)" stroke-width="1.1"/><path d="M1319 181.5V206.35" stroke="rgba(70,10,60,.85)" stroke-width="1.1"/><path d="M1328 181.5V206.35" stroke="rgba(70,10,60,.85)" stroke-width="1.1"/><path d="M1663.7 193.7H1694.7M1664.5 192.1v3.1M1665.5 191.5v4.3M1685.3 192.2v3.0M1686.3 192.1v3.1" fill="none" stroke="#ffd6f5" stroke-width="1"/><path d="M1705.0 193.7H1774.0M1706.4 192.5v2.4M1707.4 192.7v1.9M1708.4 192.6v2.1M1709.4 192.5v2.3M1710.4 193.0v1.3M1724.9 192.3v2.8M1731.8 192.8v1.8M1732.8 192.0v3.4M1748.3 192.6v2.1M1755.0 193.1v1.2M1766.5 192.3v2.8M1767.5 192.1v3.1M1768.5 192.4v2.5M1769.5 192.7v2.0M1770.5 192.5v2.4" fill="none" stroke="#ffd6f5" stroke-width="1"/><path d="M1744.3 181.5V206.35" stroke="rgba(70,10,60,.85)" stroke-width="1.1"/><path d="M1749.3 181.5V206.35" stroke="rgba(70,10,60,.85)" stroke-width="1.1"/><path d="M1787.7 193.7H1896.7M1787.8 192.2v3.0M1806.7 192.6v2.2M1814.1 193.0v1.4M1815.1 192.9v1.6M1824.3 193.0v1.4M1840.1 191.9v3.5M1841.1 192.3v2.8M1842.1 191.9v3.5M1843.1 191.9v3.6M1844.1 192.7v2.0M1850.6 192.5v2.3M1851.6 192.6v2.1M1852.6 192.5v2.3M1859.0 193.0v1.3M1860.0 193.1v1.2M1861.0 193.2v1.0M1862.0 193.1v1.1M1863.0 193.1v1.2M1879.5 193.3v0.7M1880.5 193.3v0.8M1881.5 193.3v0.7M1882.5 193.3v0.7M1883.5 193.2v1.0M1887.9 192.3v2.7" fill="none" stroke="#ffd6f5" stroke-width="1"/><path d="M1790.0 181.5V206.35" stroke="rgba(70,10,60,.85)" stroke-width="1.1"/><path d="M1797.7 181.5V206.35" stroke="rgba(70,10,60,.85)" stroke-width="1.1"/><path d="M1803.3 181.5V206.35" stroke="rgba(70,10,60,.85)" stroke-width="1.1"/><path d="M1808.3 181.5V206.35" stroke="rgba(70,10,60,.85)" stroke-width="1.1"/><path d="M1813.3 181.5V206.35" stroke="rgba(70,10,60,.85)" stroke-width="1.1"/><path d="M1828.3 181.5V206.35" stroke="rgba(70,10,60,.85)" stroke-width="1.1"/><path d="M1875.0 181.5V206.35" stroke="rgba(70,10,60,.85)" stroke-width="1.1"/><path d="M1877.3 181.5V206.35" stroke="rgba(70,10,60,.85)" stroke-width="1.1"/><path d="M1178 247.45h11M1183.500 233.45V260.45" stroke="#f3c0f4" stroke-width="1" opacity=".8"/><path d="M1183.500 233.45V260.45" stroke="#5c1560" stroke-width="1"/><path d="M1301.7 351.0H1451.3M1303.7 349.7v2.6M1304.7 349.6v2.8M1316.4 348.4v5.2M1317.4 348.3v5.4M1318.4 349.4v3.3M1319.4 348.9v4.3M1320.4 348.3v5.4M1337.8 350.3v1.4M1346.9 349.9v2.2M1347.9 349.2v3.6M1348.9 349.1v3.9M1367.2 350.4v1.2M1368.2 350.0v2.1M1387.7 350.2v1.7M1399.5 349.4v3.2M1410.4 349.7v2.6M1411.4 349.8v2.4M1416.9 349.8v2.4M1417.9 349.9v2.2M1422.2 350.1v1.8M1423.2 349.6v2.9M1424.2 350.3v1.5M1425.2 349.6v2.8M1426.2 350.2v1.7M1444.2 350.6v0.9M1445.2 350.2v1.7" fill="none" stroke="#ecd0ff" stroke-width="1"/><path d="M1377.7 338.85V363.70000000000005" stroke="rgba(70,10,60,.85)" stroke-width="1.1"/><path d="M1420.7 338.85V363.70000000000005" stroke="rgba(70,10,60,.85)" stroke-width="1.1"/><path d="M1525.0 351.0H1665.7M1525.5 350.1v1.9M1526.5 349.9v2.2M1538.8 350.2v1.6M1539.8 350.3v1.5M1554.8 350.2v1.7M1559.0 350.6v0.8M1560.0 350.3v1.5M1565.1 350.0v2.1M1566.1 348.8v4.5M1567.1 349.5v3.1M1585.7 349.7v2.7M1593.6 350.5v1.0M1600.5 349.3v3.5M1601.5 349.7v2.7M1612.6 349.8v2.4M1613.6 350.1v1.8M1621.6 350.5v1.0M1622.6 350.6v0.8M1623.6 350.5v1.0M1624.6 350.4v1.3M1625.6 350.7v0.7M1642.7 349.9v2.2M1643.7 349.7v2.7M1644.7 349.6v2.9M1653.6 350.3v1.4" fill="none" stroke="#ecd0ff" stroke-width="1"/><path d="M1662 338.85V363.70000000000005" stroke="rgba(70,10,60,.85)" stroke-width="1.1"/><path d="M1483.0 403.8 1484.2 398.9 1485.4 397.3 1486.6 397.5 1487.8 398.2 1489.0 398.0 1490.2 398.2 1491.4 396.5 1492.6 397.7 1493.8 397.9 1495.0 398.1 1496.2 396.2 1497.4 399.1 1498.6 403.4 1499.8 403.4 1501.0 403.4 1502.2 403.4 1503.4 403.4 1504.6 403.4 1505.8 400.6 1507.0 399.5 1508.2 398.4 1509.4 397.2 1510.6 396.5 1511.8 397.4 1513.0 396.6 1514.2 397.1 1515.4 395.1 1516.6 395.1 1517.8 396.3 1519.0 397.1 1520.2 398.4 1521.4 399.5 1522.6 399.5 1523.8 400.1 1525.0 396.7 1526.2 396.5 1527.4 396.4 1528.6 397.3 1529.8 396.4 1531.0 397.8 1532.2 397.1 1533.4 397.6 1534.6 397.0 1535.8 399.0 1537.0 400.2 1538.2 401.3 1539.4 403.4 1540.6 403.4 1541.8 403.4 1543.0 403.4 1544.2 403.4 1545.4 403.4 1546.6 403.4 1547.8 403.4 1549.0 401.9 1550.2 400.1 1551.4 399.0 1552.6 397.5 1553.8 397.4 1555.0 397.3 1556.2 396.9 1557.4 398.0 1558.6 398.2 1559.8 396.6 1561.0 398.6 1562.2 397.2 1563.4 397.4 1564.6 398.8 1565.8 397.0 1567.0 396.8 1568.2 397.5 1569.4 397.2 1570.6 397.0 1571.8 398.6 1573.0 397.7 1574.2 397.7 1575.4 397.0 1576.6 397.1 1577.8 397.8 1579.0 399.4 1580.2 400.4 1581.4 402.7 1582.6 403.4 1583.8 403.4 1585.0 403.4 1586.2 403.4 1587.4 401.1 1588.6 400.0 1589.8 398.8 1591.0 397.3 1592.2 397.9 1593.4 396.0 1594.6 396.8 1595.8 396.6 1597.0 396.6 1598.2 396.4 1599.4 396.9 1600.6 400.3 1601.8 399.0 1603.0 399.1 1604.2 399.5 1605.4 399.5 1606.6 396.5 1607.8 398.1 1609.0 396.3 1610.2 397.6 1611.4 398.0 1612.6 397.5 1613.8 396.3 1615.0 397.8 1616.2 397.6 1617.4 398.6 1618.6 401.0 1619.8 403.4 1621.0 403.4 1622.2 403.4 1623.4 403.4 1624.6 403.4 1625.8 403.4 1627.0 403.4 1628.2 402.5 1629.4 400.8 1630.6 399.3 1631.8 398.0 1633.0 397.5 1634.2 397.4 1635.4 398.7 1636.6 398.6 1637.8 398.3 1639.0 397.2 1640.2 398.2 1641.4 397.6 1642.6 398.9 1643.8 398.8 1645.0 398.3 1646.2 397.4 1647.4 397.3 1648.6 397.3 1649.8 398.2 1651.0 397.7 1652.2 397.8 1653.4 397.8 1654.6 398.6 1655.8 396.8 1657.0 398.4 1658.2 396.8 1659.4 397.9 1660.6 400.6 1661.8 401.2 L1661.8 406.3 1660.6 406.9 1659.4 409.4 1658.2 410.5 1657.0 408.9 1655.8 410.4 1654.6 408.7 1653.4 409.5 1652.2 409.5 1651.0 409.6 1649.8 409.1 1648.6 409.9 1647.4 410.0 1646.2 409.9 1645.0 409.0 1643.8 408.6 1642.6 408.5 1641.4 409.7 1640.2 409.1 1639.0 410.1 1637.8 409.0 1636.6 408.8 1635.4 408.6 1634.2 409.9 1633.0 409.8 1631.8 409.3 1630.6 408.1 1629.4 406.7 1628.2 405.0 1627.0 404.2 1625.8 404.2 1624.6 404.2 1623.4 404.2 1622.2 404.2 1621.0 404.2 1619.8 404.2 1618.6 406.4 1617.4 408.7 1616.2 409.7 1615.0 409.5 1613.8 410.9 1612.6 409.8 1611.4 409.3 1610.2 409.7 1609.0 410.9 1607.8 409.3 1606.6 410.7 1605.4 407.9 1604.2 407.9 1603.0 408.2 1601.8 408.3 1600.6 407.1 1599.4 410.3 1598.2 410.8 1597.0 410.7 1595.8 410.7 1594.6 410.5 1593.4 411.2 1592.2 409.4 1591.0 410.0 1589.8 408.6 1588.6 407.4 1587.4 406.4 1586.2 404.1 1585.0 404.2 1583.8 404.2 1582.6 404.2 1581.4 404.8 1580.2 407.0 1579.0 408.0 1577.8 409.5 1576.6 410.2 1575.4 410.3 1574.2 409.6 1573.0 409.6 1571.8 408.8 1570.6 410.2 1569.4 410.1 1568.2 409.8 1567.0 410.4 1565.8 410.3 1564.6 408.5 1563.4 409.9 1562.2 410.0 1561.0 408.8 1559.8 410.6 1558.6 409.2 1557.4 409.3 1556.2 410.4 1555.0 410.0 1553.8 409.9 1552.6 409.8 1551.4 408.4 1550.2 407.4 1549.0 405.6 1547.8 404.2 1546.6 404.2 1545.4 404.2 1544.2 404.2 1543.0 404.2 1541.8 404.2 1540.6 404.2 1539.4 404.2 1538.2 406.2 1537.0 407.3 1535.8 408.4 1534.6 410.2 1533.4 409.7 1532.2 410.2 1531.0 409.5 1529.8 410.8 1528.6 410.0 1527.4 410.8 1526.2 410.8 1525.0 410.5 1523.8 407.3 1522.6 407.9 1521.4 407.8 1520.2 408.9 1519.0 410.1 1517.8 410.9 1516.6 412.1 1515.4 412.1 1514.2 410.2 1513.0 410.7 1511.8 409.9 1510.6 410.7 1509.4 410.1 1508.2 408.9 1507.0 407.9 1505.8 406.8 1504.6 404.2 1503.4 404.2 1502.2 404.2 1501.0 404.2 1499.8 404.2 1498.6 404.2 1497.4 408.3 1496.2 411.0 1495.0 409.2 1493.8 409.4 1492.6 409.6 1491.4 410.8 1490.2 409.1 1489.0 409.3 1487.8 409.1 1486.6 409.8 1485.4 410.0 1484.2 408.5 1483.0 403.8z" fill="#e2d0ff"/><path d="M1481 403.8H1667" stroke="#e2d0ff" stroke-width="1"/><path d="M1580.500 393.8V412.15000000000003" stroke="#e2d0ff" stroke-width="1"/><path stroke="#3c32bd" stroke-width="1.600" opacity=".8" d="M667.5 496.70000000000005V523.0500000000001M677.7 496.70000000000005V523.0500000000001M687.9 496.70000000000005V523.0500000000001M698.1 496.70000000000005V523.0500000000001M708.3 496.70000000000005V523.0500000000001M718.6 496.70000000000005V523.0500000000001M728.8 496.70000000000005V523.0500000000001M739.0 496.70000000000005V523.0500000000001M749.2 496.70000000000005V523.0500000000001M759.4 496.70000000000005V523.0500000000001M769.6 496.70000000000005V523.0500000000001M779.8 496.70000000000005V523.0500000000001M790.0 496.70000000000005V523.0500000000001M800.2 496.70000000000005V523.0500000000001M810.4 496.70000000000005V523.0500000000001M820.7 496.70000000000005V523.0500000000001M830.9 496.70000000000005V523.0500000000001M841.1 496.70000000000005V523.0500000000001M851.3 496.70000000000005V523.0500000000001M861.5 496.70000000000005V523.0500000000001M871.7 496.70000000000005V523.0500000000001M881.9 496.70000000000005V523.0500000000001M892.1 496.70000000000005V523.0500000000001M902.3 496.70000000000005V523.0500000000001M912.5 496.70000000000005V523.0500000000001M922.8 496.70000000000005V523.0500000000001M933.0 496.70000000000005V523.0500000000001M943.2 496.70000000000005V523.0500000000001M953.4 496.70000000000005V523.0500000000001M963.6 496.70000000000005V523.0500000000001M973.8 496.70000000000005V523.0500000000001M984.0 496.70000000000005V523.0500000000001M994.2 496.70000000000005V523.0500000000001M1004.4 496.70000000000005V523.0500000000001M1014.6 496.70000000000005V523.0500000000001M1024.9 496.70000000000005V523.0500000000001M1035.1 496.70000000000005V523.0500000000001M1045.3 496.70000000000005V523.0500000000001M1055.5 496.70000000000005V523.0500000000001M1065.7 496.70000000000005V523.0500000000001M1075.9 496.70000000000005V523.0500000000001M1086.1 496.70000000000005V523.0500000000001M1096.3 496.70000000000005V523.0500000000001M1106.5 496.70000000000005V523.0500000000001M1116.8 496.70000000000005V523.0500000000001M1127.0 496.70000000000005V523.0500000000001M1137.2 496.70000000000005V523.0500000000001M1147.4 496.70000000000005V523.0500000000001M1157.6 496.70000000000005V523.0500000000001M1167.8 496.70000000000005V523.0500000000001M1178.0 496.70000000000005V523.0500000000001M1188.2 496.70000000000005V523.0500000000001M1198.4 496.70000000000005V523.0500000000001M1208.6 496.70000000000005V523.0500000000001M1218.8 496.70000000000005V523.0500000000001M1229.1 496.70000000000005V523.0500000000001M1239.3 496.70000000000005V523.0500000000001M1249.5 496.70000000000005V523.0500000000001M1259.7 496.70000000000005V523.0500000000001M1269.9 496.70000000000005V523.0500000000001M1280.1 496.70000000000005V523.0500000000001M1290.3 496.70000000000005V523.0500000000001M1300.5 496.70000000000005V523.0500000000001M1310.7 496.70000000000005V523.0500000000001M1321.0 496.70000000000005V523.0500000000001M1331.2 496.70000000000005V523.0500000000001M1341.4 496.70000000000005V523.0500000000001M1351.6 496.70000000000005V523.0500000000001M1361.8 496.70000000000005V523.0500000000001M1372.0 496.70000000000005V523.0500000000001M1382.2 496.70000000000005V523.0500000000001M1392.4 496.70000000000005V523.0500000000001M1402.6 496.70000000000005V523.0500000000001M1412.8 496.70000000000005V523.0500000000001M1423.1 496.70000000000005V523.0500000000001M1433.3 496.70000000000005V523.0500000000001M1443.5 496.70000000000005V523.0500000000001M1453.7 496.70000000000005V523.0500000000001M1463.9 496.70000000000005V523.0500000000001M1474.1 496.70000000000005V523.0500000000001M1484.3 496.70000000000005V523.0500000000001M1494.5 496.70000000000005V523.0500000000001M1504.7 496.70000000000005V523.0500000000001M1514.9 496.70000000000005V523.0500000000001M1525.2 496.70000000000005V523.0500000000001M1535.4 496.70000000000005V523.0500000000001M1545.6 496.70000000000005V523.0500000000001M1555.8 496.70000000000005V523.0500000000001M1566.0 496.70000000000005V523.0500000000001M1576.2 496.70000000000005V523.0500000000001M1586.4 496.70000000000005V523.0500000000001M1596.6 496.70000000000005V523.0500000000001M1606.8 496.70000000000005V523.0500000000001M1617.0 496.70000000000005V523.0500000000001M1627.2 496.70000000000005V523.0500000000001M1637.5 496.70000000000005V523.0500000000001M1647.7 496.70000000000005V523.0500000000001M1657.9 496.70000000000005V523.0500000000001"/><path d="M666.3 507.8h3v2h-3zM666.3 510.2h2.6v1.5h-2.6zM669.3 506.0h3.4v2h-3.4zM669.3 508.6h3v1.6h-3zM672.7 504.2h4v2.2h-4zM672.7 507.0h3.6v2.2h-3.6zM686.7 507.8h3v2h-3zM686.7 510.2h2.6v1.5h-2.6zM689.7 506.0h3.4v2h-3.4zM689.7 508.6h3v1.6h-3zM693.1 504.2h4v2.2h-4zM693.1 507.0h3.6v2.2h-3.6zM707.1 507.8h3v2h-3zM707.1 510.2h2.6v1.5h-2.6zM710.1 506.0h3.4v2h-3.4zM710.1 508.6h3v1.6h-3zM713.5 504.2h4v2.2h-4zM713.5 507.0h3.6v2.2h-3.6zM727.6 504.2h3v2.2h-3zM727.6 507.0h2.5v1.6h-2.5zM731.0 502.4h2.6v2.2h-2.6zM731.0 506.2h3v2.4h-3zM734.4 507.6h4v2h-4zM734.4 510.2h3.2v1.5h-3.2zM748.0 507.8h3v2h-3zM748.0 510.2h2.6v1.5h-2.6zM751.0 506.0h3.4v2h-3.4zM751.0 508.6h3v1.6h-3zM754.4 504.2h4v2.2h-4zM754.4 507.0h3.6v2.2h-3.6zM768.4 507.8h3v2h-3zM768.4 510.2h2.6v1.5h-2.6zM771.4 506.0h3.4v2h-3.4zM771.4 508.6h3v1.6h-3zM774.8 504.2h4v2.2h-4zM774.8 507.0h3.6v2.2h-3.6zM788.8 507.8h3v2h-3zM788.8 510.2h2.6v1.5h-2.6zM791.8 506.0h3.4v2h-3.4zM791.8 508.6h3v1.6h-3zM795.2 504.2h4v2.2h-4zM795.2 507.0h3.6v2.2h-3.6zM809.2 504.2h3v2.2h-3zM809.2 507.0h2.5v1.6h-2.5zM812.6 502.4h2.6v2.2h-2.6zM812.6 506.2h3v2.4h-3zM816.0 507.6h4v2h-4zM816.0 510.2h3.2v1.5h-3.2zM829.7 507.8h3v2h-3zM829.7 510.2h2.6v1.5h-2.6zM832.7 506.0h3.4v2h-3.4zM832.7 508.6h3v1.6h-3zM836.1 504.2h4v2.2h-4zM836.1 507.0h3.6v2.2h-3.6zM850.1 507.8h3v2h-3zM850.1 510.2h2.6v1.5h-2.6zM853.1 506.0h3.4v2h-3.4zM853.1 508.6h3v1.6h-3zM856.5 504.2h4v2.2h-4zM856.5 507.0h3.6v2.2h-3.6zM870.5 507.8h3v2h-3zM870.5 510.2h2.6v1.5h-2.6zM873.5 506.0h3.4v2h-3.4zM873.5 508.6h3v1.6h-3zM876.9 504.2h4v2.2h-4zM876.9 507.0h3.6v2.2h-3.6zM890.9 504.2h3v2.2h-3zM890.9 507.0h2.5v1.6h-2.5zM894.3 502.4h2.6v2.2h-2.6zM894.3 506.2h3v2.4h-3zM897.7 507.6h4v2h-4zM897.7 510.2h3.2v1.5h-3.2zM911.3 506.2h2.5v2h-2.5zM914.5 504.2h2.6v2h-2.6zM914.5 506.8h2.6v2h-2.6zM917.7 503.7h3v2h-3zM917.7 506.4h3.6v2h-3.6z" fill="#dcd8ff"/><path d="M933.0 506.8h4.0v2.0h-4.0zM933.0 509.2h3.6v1.5h-3.6zM936.0 505.0h3.4v2.0h-3.4zM939.4 506.0h4.6v2.2h-4.6zM932.0 516.2h4v1.500h-4zM936.0 514.0h8v1.600h-8zM953.4 506.8h4.0v2.0h-4.0zM953.4 509.2h4.6v1.5h-4.6zM956.4 505.0h4.4v2.0h-4.4zM956.4 507.6h4.0v1.6h-4.0zM959.8 503.2h4.0v2.2h-4.0zM952.4 520.7h4v1.500h-4zM956.4 518.5h13v1.600h-13zM954.4 514.5h3v1.500h-3zM973.8 506.8h4.0v2.0h-4.0zM973.8 509.2h3.6v1.5h-3.6zM976.8 505.0h4.4v2.0h-4.4zM980.2 503.2h5.0v2.2h-5.0zM980.2 506.0h3.6v2.2h-3.6zM972.8 517.7h4v1.500h-4zM976.8 515.5h11v1.600h-11zM974.8 511.5h3v1.500h-3zM994.3 506.0h4.5v1.6h-4.5zM997.7 505.2h4.0v2.4h-4.0zM1001.1 506.6h5.0v2.0h-5.0zM993.3 516.2h4v1.500h-4zM997.3 514.0h8v1.600h-8zM995.3 510.0h3v1.500h-3zM1014.7 506.8h5.0v2.0h-5.0zM1014.7 509.2h3.6v1.5h-3.6zM1017.7 505.0h4.4v2.0h-4.4zM1017.7 507.6h5.0v1.6h-5.0zM1021.1 503.2h6.0v2.2h-6.0zM1021.1 506.0h5.6v2.2h-5.6zM1013.7 517.7h4v1.500h-4zM1017.7 515.5h5v1.600h-5zM1035.1 506.8h5.0v2.0h-5.0zM1035.1 509.2h4.6v1.5h-4.6zM1038.1 505.0h4.4v2.0h-4.4zM1041.5 503.2h4.0v2.2h-4.0zM1041.5 506.0h4.6v2.2h-4.6zM1034.1 516.2h4v1.500h-4zM1038.1 514.0h11v1.600h-11zM1036.1 510.0h3v1.500h-3zM1055.5 506.8h5.0v2.0h-5.0zM1055.5 509.2h4.6v1.5h-4.6zM1058.5 505.0h4.4v2.0h-4.4zM1058.5 507.6h4.0v1.6h-4.0zM1061.9 506.0h3.6v2.2h-3.6zM1054.5 519.2h4v1.500h-4zM1058.5 517.0h13v1.600h-13zM1075.9 503.2h4.0v2.2h-4.0zM1075.9 506.0h3.5v1.6h-3.5zM1079.3 501.4h4.6v2.2h-4.6zM1079.3 505.2h3.0v2.4h-3.0zM1082.7 506.6h6.0v2.0h-6.0zM1074.9 519.2h4v1.500h-4zM1078.9 517.0h11v1.600h-11zM1076.9 513.0h3v1.500h-3zM1096.4 506.8h3.0v2.0h-3.0zM1096.4 509.2h3.6v1.5h-3.6zM1099.4 505.0h5.4v2.0h-5.4zM1099.4 507.6h4.0v1.6h-4.0zM1102.8 503.2h4.0v2.2h-4.0zM1102.8 506.0h5.6v2.2h-5.6zM1095.4 516.2h4v1.500h-4zM1099.4 514.0h8v1.600h-8zM1116.8 506.8h3.0v2.0h-3.0zM1119.8 505.0h4.4v2.0h-4.4zM1119.8 507.6h4.0v1.6h-4.0zM1123.2 503.2h5.0v2.2h-5.0zM1123.2 506.0h3.6v2.2h-3.6zM1115.8 519.2h4v1.500h-4zM1119.8 517.0h5v1.600h-5zM1117.8 513.0h3v1.500h-3zM1137.2 506.8h4.0v2.0h-4.0zM1137.2 509.2h3.6v1.5h-3.6zM1140.2 507.6h5.0v1.6h-5.0zM1143.6 503.2h5.0v2.2h-5.0zM1143.6 506.0h3.6v2.2h-3.6zM1136.2 519.2h4v1.500h-4zM1140.2 517.0h8v1.600h-8zM1138.2 513.0h3v1.500h-3zM1157.6 503.2h3.0v2.2h-3.0zM1157.6 506.0h4.5v1.6h-4.5zM1161.0 501.4h3.6v2.2h-3.6zM1164.4 506.6h4.0v2.0h-4.0zM1164.4 509.2h3.2v1.5h-3.2zM1156.6 517.7h4v1.500h-4zM1160.6 515.5h11v1.600h-11zM1178.0 506.8h5.0v2.0h-5.0zM1178.0 509.2h4.6v1.5h-4.6zM1181.0 505.0h3.4v2.0h-3.4zM1184.4 503.2h6.0v2.2h-6.0zM1184.4 506.0h4.6v2.2h-4.6zM1177.0 519.2h4v1.500h-4zM1181.0 517.0h5v1.600h-5zM1179.0 513.0h3v1.500h-3zM1198.5 506.8h4.0v2.0h-4.0zM1198.5 509.2h3.6v1.5h-3.6zM1201.5 505.0h3.4v2.0h-3.4zM1201.5 507.6h3.0v1.6h-3.0zM1204.9 503.2h4.0v2.2h-4.0zM1204.9 506.0h5.6v2.2h-5.6zM1197.5 516.2h4v1.500h-4zM1201.5 514.0h5v1.600h-5zM1199.5 510.0h3v1.500h-3zM1218.9 506.8h5.0v2.0h-5.0zM1218.9 509.2h2.6v1.5h-2.6zM1221.9 505.0h5.4v2.0h-5.4zM1221.9 507.6h4.0v1.6h-4.0zM1225.3 503.2h4.0v2.2h-4.0zM1225.3 506.0h5.6v2.2h-5.6zM1217.9 520.7h4v1.500h-4zM1221.9 518.5h11v1.600h-11zM1239.3 503.2h4.0v2.2h-4.0zM1239.3 506.0h4.5v1.6h-4.5zM1242.7 505.2h3.0v2.4h-3.0zM1246.1 506.6h4.0v2.0h-4.0zM1246.1 509.2h3.2v1.5h-3.2zM1238.3 516.2h4v1.500h-4zM1242.3 514.0h11v1.600h-11zM1240.3 510.0h3v1.500h-3zM1259.7 506.8h5.0v2.0h-5.0zM1259.7 509.2h2.6v1.5h-2.6zM1262.7 505.0h5.4v2.0h-5.4zM1266.1 503.2h5.0v2.2h-5.0zM1258.7 517.7h4v1.500h-4zM1262.7 515.5h8v1.600h-8zM1260.7 511.5h3v1.500h-3zM1280.1 506.8h3.0v2.0h-3.0zM1280.1 509.2h4.6v1.5h-4.6zM1283.1 505.0h5.4v2.0h-5.4zM1286.5 506.0h3.6v2.2h-3.6zM1279.1 519.2h4v1.500h-4zM1283.1 517.0h13v1.600h-13zM1281.1 513.0h3v1.500h-3zM1300.6 506.8h4.0v2.0h-4.0zM1300.6 509.2h3.6v1.5h-3.6zM1303.6 505.0h3.4v2.0h-3.4zM1307.0 503.2h5.0v2.2h-5.0zM1307.0 506.0h3.6v2.2h-3.6zM1299.6 519.2h4v1.500h-4zM1303.6 517.0h13v1.600h-13zM1301.6 513.0h3v1.500h-3zM1321.0 503.2h4.0v2.2h-4.0zM1324.4 501.4h2.6v2.2h-2.6zM1324.4 505.2h4.0v2.4h-4.0zM1327.8 506.6h5.0v2.0h-5.0zM1327.8 509.2h4.2v1.5h-4.2zM1320.0 517.7h4v1.500h-4zM1324.0 515.5h13v1.600h-13zM1322.0 511.5h3v1.500h-3zM1341.4 506.8h4.0v2.0h-4.0zM1347.8 503.2h5.0v2.2h-5.0zM1347.8 506.0h3.6v2.2h-3.6zM1340.4 516.2h4v1.500h-4zM1344.4 514.0h11v1.600h-11zM1342.4 510.0h3v1.500h-3zM1361.8 506.8h5.0v2.0h-5.0zM1364.8 505.0h5.4v2.0h-5.4zM1364.8 507.6h4.0v1.6h-4.0zM1368.2 503.2h6.0v2.2h-6.0zM1368.2 506.0h5.6v2.2h-5.6zM1360.8 517.7h4v1.500h-4zM1364.8 515.5h5v1.600h-5zM1382.2 509.2h3.6v1.5h-3.6zM1385.2 505.0h4.4v2.0h-4.4zM1385.2 507.6h4.0v1.6h-4.0zM1388.6 503.2h4.0v2.2h-4.0zM1388.6 506.0h3.6v2.2h-3.6zM1381.2 517.7h4v1.500h-4zM1385.2 515.5h11v1.600h-11zM1402.7 503.2h5.0v2.2h-5.0zM1402.7 506.0h3.5v1.6h-3.5zM1406.1 501.4h4.6v2.2h-4.6zM1409.5 506.6h4.0v2.0h-4.0zM1409.5 509.2h3.2v1.5h-3.2zM1401.7 517.7h4v1.500h-4zM1405.7 515.5h13v1.600h-13zM1423.1 506.8h4.0v2.0h-4.0zM1423.1 509.2h2.6v1.5h-2.6zM1426.1 505.0h3.4v2.0h-3.4zM1426.1 507.6h4.0v1.6h-4.0zM1429.5 503.2h6.0v2.2h-6.0zM1429.5 506.0h3.6v2.2h-3.6zM1422.1 519.2h4v1.500h-4zM1426.1 517.0h8v1.600h-8zM1424.1 513.0h3v1.500h-3zM1443.5 506.8h5.0v2.0h-5.0zM1443.5 509.2h4.6v1.5h-4.6zM1446.5 505.0h5.4v2.0h-5.4zM1446.5 507.6h4.0v1.6h-4.0zM1449.9 503.2h6.0v2.2h-6.0zM1449.9 506.0h4.6v2.2h-4.6zM1442.5 516.2h4v1.500h-4zM1446.5 514.0h8v1.600h-8zM1444.5 510.0h3v1.500h-3zM1463.9 506.8h3.0v2.0h-3.0zM1463.9 509.2h4.6v1.5h-4.6zM1466.9 505.0h3.4v2.0h-3.4zM1466.9 507.6h3.0v1.6h-3.0zM1470.3 503.2h4.0v2.2h-4.0zM1470.3 506.0h3.6v2.2h-3.6zM1462.9 520.7h4v1.500h-4zM1466.9 518.5h5v1.600h-5zM1464.9 514.5h3v1.500h-3zM1484.3 503.2h3.0v2.2h-3.0zM1484.3 506.0h3.5v1.6h-3.5zM1487.7 505.2h3.0v2.4h-3.0zM1491.1 509.2h5.2v1.5h-5.2zM1483.3 519.2h4v1.500h-4zM1487.3 517.0h5v1.600h-5zM1485.3 513.0h3v1.500h-3zM1504.8 506.8h4.0v2.0h-4.0zM1504.8 509.2h4.6v1.5h-4.6zM1507.8 505.0h3.4v2.0h-3.4zM1507.8 507.6h5.0v1.6h-5.0zM1511.2 503.2h4.0v2.2h-4.0zM1503.8 516.2h4v1.500h-4zM1507.8 514.0h8v1.600h-8zM1505.8 510.0h3v1.500h-3zM1525.2 506.8h3.0v2.0h-3.0zM1525.2 509.2h4.6v1.5h-4.6zM1528.2 505.0h3.4v2.0h-3.4zM1528.2 507.6h4.0v1.6h-4.0zM1531.6 503.2h4.0v2.2h-4.0zM1531.6 506.0h3.6v2.2h-3.6zM1524.2 519.2h4v1.500h-4zM1528.2 517.0h5v1.600h-5zM1545.6 506.8h3.0v2.0h-3.0zM1545.6 509.2h3.6v1.5h-3.6zM1548.6 505.0h3.4v2.0h-3.4zM1548.6 507.6h3.0v1.6h-3.0zM1552.0 503.2h5.0v2.2h-5.0zM1552.0 506.0h4.6v2.2h-4.6zM1544.6 516.2h4v1.500h-4zM1548.6 514.0h11v1.600h-11zM1546.6 510.0h3v1.500h-3zM1566.0 506.0h3.5v1.6h-3.5zM1569.4 501.4h2.6v2.2h-2.6zM1569.4 505.2h4.0v2.4h-4.0zM1572.8 506.6h5.0v2.0h-5.0zM1572.8 509.2h3.2v1.5h-3.2zM1565.0 517.7h4v1.500h-4zM1569.0 515.5h13v1.600h-13zM1586.4 506.8h3.0v2.0h-3.0zM1586.4 509.2h3.6v1.5h-3.6zM1589.4 505.0h3.4v2.0h-3.4zM1589.4 507.6h3.0v1.6h-3.0zM1592.8 503.2h6.0v2.2h-6.0zM1592.8 506.0h4.6v2.2h-4.6zM1585.4 517.7h4v1.500h-4zM1589.4 515.5h11v1.600h-11zM1606.9 506.8h4.0v2.0h-4.0zM1606.9 509.2h4.6v1.5h-4.6zM1609.9 505.0h3.4v2.0h-3.4zM1613.3 503.2h4.0v2.2h-4.0zM1613.3 506.0h3.6v2.2h-3.6zM1605.9 520.7h4v1.500h-4zM1609.9 518.5h11v1.600h-11zM1607.9 514.5h3v1.500h-3zM1627.3 506.8h4.0v2.0h-4.0zM1630.3 505.0h5.4v2.0h-5.4zM1630.3 507.6h3.0v1.6h-3.0zM1633.7 503.2h4.0v2.2h-4.0zM1633.7 506.0h5.6v2.2h-5.6zM1626.3 519.2h4v1.500h-4zM1630.3 517.0h13v1.600h-13zM1628.3 513.0h3v1.500h-3zM1647.7 503.2h4.0v2.2h-4.0zM1647.7 506.0h2.5v1.6h-2.5zM1651.1 501.4h2.6v2.2h-2.6zM1651.1 505.2h5.0v2.4h-5.0zM1654.5 506.6h4.0v2.0h-4.0zM1646.7 517.7h4v1.500h-4zM1650.7 515.5h11v1.600h-11zM1648.7 511.5h3v1.500h-3z" fill="#dcd8ff"/><path stroke="#3258bd" stroke-width="1.600" opacity=".8" d="M935.7 549.1500000000001V575.5000000000001M945.9 549.1500000000001V575.5000000000001M956.1 549.1500000000001V575.5000000000001M966.3 549.1500000000001V575.5000000000001M976.5 549.1500000000001V575.5000000000001M986.8 549.1500000000001V575.5000000000001M997.0 549.1500000000001V575.5000000000001M1007.2 549.1500000000001V575.5000000000001M1017.4 549.1500000000001V575.5000000000001M1027.6 549.1500000000001V575.5000000000001M1037.8 549.1500000000001V575.5000000000001M1048.0 549.1500000000001V575.5000000000001M1058.2 549.1500000000001V575.5000000000001M1068.4 549.1500000000001V575.5000000000001M1078.6 549.1500000000001V575.5000000000001M1088.9 549.1500000000001V575.5000000000001M1099.1 549.1500000000001V575.5000000000001"/><path d="M934.7 558.6h5.0v2.0h-5.0zM934.7 561.0h3.6v1.5h-3.6zM937.7 556.8h4.4v2.0h-4.4zM937.7 559.4h4.0v1.6h-4.0zM941.1 555.0h5.0v2.2h-5.0zM941.1 557.8h4.6v2.2h-4.6zM933.7 571.4h4v1.500h-4zM937.7 569.2h5v1.600h-5zM935.7 565.2h3v1.500h-3zM955.1 558.6h4.0v2.0h-4.0zM955.1 561.0h4.6v1.5h-4.6zM958.1 556.8h4.4v2.0h-4.4zM958.1 559.4h4.0v1.6h-4.0zM961.5 555.0h4.0v2.2h-4.0zM961.5 557.8h4.6v2.2h-4.6zM954.1 568.4h4v1.500h-4zM958.1 566.2h5v1.600h-5zM975.5 558.6h5.0v2.0h-5.0zM978.5 556.8h3.4v2.0h-3.4zM978.5 559.4h4.0v1.6h-4.0zM981.9 555.0h6.0v2.2h-6.0zM974.5 572.9h4v1.500h-4zM978.5 570.7h8v1.600h-8zM976.5 566.7h3v1.500h-3zM996.0 557.8h4.5v1.6h-4.5zM999.4 553.2h2.6v2.2h-2.6zM999.4 557.0h4.0v2.4h-4.0zM1002.8 558.4h4.0v2.0h-4.0zM1002.8 561.0h5.2v1.5h-5.2zM995.0 571.4h4v1.500h-4zM999.0 569.2h5v1.600h-5zM1016.4 558.6h4.0v2.0h-4.0zM1016.4 561.0h4.6v1.5h-4.6zM1019.4 556.8h4.4v2.0h-4.4zM1019.4 559.4h5.0v1.6h-5.0zM1022.8 555.0h5.0v2.2h-5.0zM1022.8 557.8h4.6v2.2h-4.6zM1015.4 571.4h4v1.500h-4zM1019.4 569.2h11v1.600h-11zM1017.4 565.2h3v1.500h-3zM1036.8 558.6h4.0v2.0h-4.0zM1036.8 561.0h3.6v1.5h-3.6zM1039.8 556.8h4.4v2.0h-4.4zM1039.8 559.4h4.0v1.6h-4.0zM1043.2 557.8h5.6v2.2h-5.6zM1035.8 568.4h4v1.500h-4zM1039.8 566.2h13v1.600h-13zM1057.2 558.6h3.0v2.0h-3.0zM1057.2 561.0h4.6v1.5h-4.6zM1060.2 556.8h4.4v2.0h-4.4zM1060.2 559.4h4.0v1.6h-4.0zM1063.6 555.0h5.0v2.2h-5.0zM1063.6 557.8h4.6v2.2h-4.6zM1056.2 568.4h4v1.500h-4zM1060.2 566.2h5v1.600h-5zM1058.2 562.2h3v1.500h-3zM1077.6 555.0h5.0v2.2h-5.0zM1077.6 557.8h3.5v1.6h-3.5zM1081.0 553.2h3.6v2.2h-3.6zM1081.0 557.0h5.0v2.4h-5.0zM1084.4 558.4h5.0v2.0h-5.0zM1084.4 561.0h5.2v1.5h-5.2zM1076.6 569.9h4v1.500h-4zM1080.6 567.7h8v1.600h-8zM1078.6 563.7h3v1.500h-3zM1098.1 558.6h4.0v2.0h-4.0zM1098.1 561.0h3.6v1.5h-3.6zM1101.1 556.8h3.4v2.0h-3.4zM1101.1 559.4h5.0v1.6h-5.0zM1104.5 555.0h4.0v2.2h-4.0zM1097.1 568.4h4v1.500h-4zM1101.1 566.2h11v1.600h-11zM1099.1 562.2h3v1.500h-3z" fill="#dbe6ff"/><path stroke="#3258bd" stroke-width="1.600" opacity=".8" d="M1119.7 549.1500000000001V575.5000000000001M1129.9 549.1500000000001V575.5000000000001M1140.1 549.1500000000001V575.5000000000001M1150.3 549.1500000000001V575.5000000000001M1160.5 549.1500000000001V575.5000000000001M1170.8 549.1500000000001V575.5000000000001M1181.0 549.1500000000001V575.5000000000001M1191.2 549.1500000000001V575.5000000000001M1201.4 549.1500000000001V575.5000000000001M1211.6 549.1500000000001V575.5000000000001M1221.8 549.1500000000001V575.5000000000001M1232.0 549.1500000000001V575.5000000000001M1242.2 549.1500000000001V575.5000000000001M1252.4 549.1500000000001V575.5000000000001M1262.6 549.1500000000001V575.5000000000001M1272.9 549.1500000000001V575.5000000000001M1283.1 549.1500000000001V575.5000000000001"/><path d="M1118.7 558.6h3.0v2.0h-3.0zM1118.7 561.0h3.6v1.5h-3.6zM1121.7 556.8h3.4v2.0h-3.4zM1121.7 559.4h4.0v1.6h-4.0zM1125.1 555.0h4.0v2.2h-4.0zM1125.1 557.8h3.6v2.2h-3.6zM1117.7 571.4h4v1.500h-4zM1121.7 569.2h13v1.600h-13zM1119.7 565.2h3v1.500h-3zM1139.1 558.6h5.0v2.0h-5.0zM1139.1 561.0h3.6v1.5h-3.6zM1142.1 556.8h3.4v2.0h-3.4zM1145.5 555.0h5.0v2.2h-5.0zM1145.5 557.8h5.6v2.2h-5.6zM1138.1 572.9h4v1.500h-4zM1142.1 570.7h13v1.600h-13zM1140.1 566.7h3v1.500h-3zM1159.5 558.6h3.0v2.0h-3.0zM1162.5 559.4h3.0v1.6h-3.0zM1165.9 557.8h3.6v2.2h-3.6zM1158.5 571.4h4v1.500h-4zM1162.5 569.2h8v1.600h-8zM1160.5 565.2h3v1.500h-3zM1180.0 555.0h5.0v2.2h-5.0zM1180.0 557.8h4.5v1.6h-4.5zM1183.4 553.2h4.6v2.2h-4.6zM1183.4 557.0h4.0v2.4h-4.0zM1186.8 561.0h5.2v1.5h-5.2zM1179.0 572.9h4v1.500h-4zM1183.0 570.7h5v1.600h-5zM1181.0 566.7h3v1.500h-3zM1200.4 558.6h4.0v2.0h-4.0zM1203.4 556.8h3.4v2.0h-3.4zM1203.4 559.4h3.0v1.6h-3.0zM1206.8 555.0h6.0v2.2h-6.0zM1199.4 568.4h4v1.500h-4zM1203.4 566.2h11v1.600h-11zM1220.8 558.6h5.0v2.0h-5.0zM1220.8 561.0h4.6v1.5h-4.6zM1223.8 556.8h5.4v2.0h-5.4zM1223.8 559.4h4.0v1.6h-4.0zM1227.2 555.0h4.0v2.2h-4.0zM1219.8 569.9h4v1.500h-4zM1223.8 567.7h8v1.600h-8zM1221.8 563.7h3v1.500h-3zM1241.2 558.6h5.0v2.0h-5.0zM1241.2 561.0h2.6v1.5h-2.6zM1244.2 556.8h4.4v2.0h-4.4zM1244.2 559.4h4.0v1.6h-4.0zM1247.6 555.0h4.0v2.2h-4.0zM1247.6 557.8h5.6v2.2h-5.6zM1240.2 572.9h4v1.500h-4zM1244.2 570.7h13v1.600h-13zM1261.6 555.0h3.0v2.2h-3.0zM1261.6 557.8h4.5v1.6h-4.5zM1265.0 553.2h3.6v2.2h-3.6zM1265.0 557.0h4.0v2.4h-4.0zM1268.4 558.4h4.0v2.0h-4.0zM1268.4 561.0h3.2v1.5h-3.2zM1260.6 571.4h4v1.500h-4zM1264.6 569.2h5v1.600h-5zM1262.6 565.2h3v1.500h-3zM1282.1 561.0h3.6v1.5h-3.6zM1285.1 556.8h5.4v2.0h-5.4zM1288.5 557.8h5.6v2.2h-5.6zM1281.1 569.9h4v1.500h-4zM1285.1 567.7h5v1.600h-5z" fill="#dbe6ff"/><path stroke="#3258bd" stroke-width="1.600" opacity=".8" d="M1304.0 549.1500000000001V575.5000000000001M1314.2 549.1500000000001V575.5000000000001M1324.4 549.1500000000001V575.5000000000001M1334.6 549.1500000000001V575.5000000000001M1344.8 549.1500000000001V575.5000000000001M1355.0 549.1500000000001V575.5000000000001M1365.3 549.1500000000001V575.5000000000001M1375.5 549.1500000000001V575.5000000000001M1385.7 549.1500000000001V575.5000000000001M1395.9 549.1500000000001V575.5000000000001M1406.1 549.1500000000001V575.5000000000001M1416.3 549.1500000000001V575.5000000000001M1426.5 549.1500000000001V575.5000000000001M1436.7 549.1500000000001V575.5000000000001M1446.9 549.1500000000001V575.5000000000001M1457.2 549.1500000000001V575.5000000000001M1467.4 549.1500000000001V575.5000000000001"/><path d="M1303.0 561.0h3.6v1.5h-3.6zM1306.0 556.8h5.4v2.0h-5.4zM1306.0 559.4h3.0v1.6h-3.0zM1309.4 555.0h6.0v2.2h-6.0zM1309.4 557.8h3.6v2.2h-3.6zM1302.0 571.4h4v1.500h-4zM1306.0 569.2h8v1.600h-8zM1304.0 565.2h3v1.500h-3zM1323.4 561.0h4.6v1.5h-4.6zM1326.4 559.4h5.0v1.6h-5.0zM1329.8 555.0h4.0v2.2h-4.0zM1329.8 557.8h5.6v2.2h-5.6zM1322.4 571.4h4v1.500h-4zM1326.4 569.2h11v1.600h-11zM1324.4 565.2h3v1.500h-3zM1343.8 558.6h3.0v2.0h-3.0zM1343.8 561.0h3.6v1.5h-3.6zM1346.8 559.4h4.0v1.6h-4.0zM1350.2 555.0h6.0v2.2h-6.0zM1350.2 557.8h4.6v2.2h-4.6zM1342.8 569.9h4v1.500h-4zM1346.8 567.7h13v1.600h-13zM1344.8 563.7h3v1.500h-3zM1364.3 555.0h3.0v2.2h-3.0zM1364.3 557.8h4.5v1.6h-4.5zM1367.7 557.0h5.0v2.4h-5.0zM1371.1 558.4h4.0v2.0h-4.0zM1371.1 561.0h4.2v1.5h-4.2zM1363.3 571.4h4v1.500h-4zM1367.3 569.2h13v1.600h-13zM1365.3 565.2h3v1.500h-3zM1384.7 558.6h3.0v2.0h-3.0zM1387.7 556.8h4.4v2.0h-4.4zM1387.7 559.4h3.0v1.6h-3.0zM1391.1 555.0h6.0v2.2h-6.0zM1391.1 557.8h5.6v2.2h-5.6zM1383.7 568.4h4v1.500h-4zM1387.7 566.2h8v1.600h-8zM1385.7 562.2h3v1.500h-3zM1405.1 558.6h5.0v2.0h-5.0zM1405.1 561.0h2.6v1.5h-2.6zM1408.1 559.4h3.0v1.6h-3.0zM1411.5 555.0h6.0v2.2h-6.0zM1411.5 557.8h3.6v2.2h-3.6zM1404.1 568.4h4v1.500h-4zM1408.1 566.2h11v1.600h-11zM1406.1 562.2h3v1.500h-3zM1425.5 558.6h5.0v2.0h-5.0zM1428.5 556.8h3.4v2.0h-3.4zM1428.5 559.4h4.0v1.6h-4.0zM1431.9 555.0h6.0v2.2h-6.0zM1431.9 557.8h4.6v2.2h-4.6zM1424.5 571.4h4v1.500h-4zM1428.5 569.2h13v1.600h-13zM1426.5 565.2h3v1.500h-3zM1445.9 555.0h5.0v2.2h-5.0zM1445.9 557.8h4.5v1.6h-4.5zM1449.3 557.0h5.0v2.4h-5.0zM1452.7 558.4h5.0v2.0h-5.0zM1452.7 561.0h5.2v1.5h-5.2zM1444.9 568.4h4v1.500h-4zM1448.9 566.2h8v1.600h-8zM1446.9 562.2h3v1.500h-3zM1466.4 558.6h4.0v2.0h-4.0zM1466.4 561.0h2.6v1.5h-2.6zM1469.4 556.8h5.4v2.0h-5.4zM1469.4 559.4h3.0v1.6h-3.0zM1472.8 555.0h5.0v2.2h-5.0zM1472.8 557.8h5.6v2.2h-5.6zM1465.4 571.4h4v1.500h-4zM1469.4 569.2h8v1.600h-8z" fill="#dbe6ff"/><path stroke="#3258bd" stroke-width="1.600" opacity=".8" d="M1487.0 549.1500000000001V575.5000000000001M1497.2 549.1500000000001V575.5000000000001M1507.4 549.1500000000001V575.5000000000001M1517.6 549.1500000000001V575.5000000000001M1527.8 549.1500000000001V575.5000000000001M1538.0 549.1500000000001V575.5000000000001M1548.3 549.1500000000001V575.5000000000001M1558.5 549.1500000000001V575.5000000000001M1568.7 549.1500000000001V575.5000000000001M1578.9 549.1500000000001V575.5000000000001M1589.1 549.1500000000001V575.5000000000001M1599.3 549.1500000000001V575.5000000000001M1609.5 549.1500000000001V575.5000000000001M1619.7 549.1500000000001V575.5000000000001M1629.9 549.1500000000001V575.5000000000001M1640.2 549.1500000000001V575.5000000000001M1650.4 549.1500000000001V575.5000000000001"/><path d="M1486.0 558.6h5.0v2.0h-5.0zM1486.0 561.0h2.6v1.5h-2.6zM1489.0 556.8h3.4v2.0h-3.4zM1489.0 559.4h5.0v1.6h-5.0zM1492.4 555.0h4.0v2.2h-4.0zM1492.4 557.8h3.6v2.2h-3.6zM1485.0 571.4h4v1.500h-4zM1489.0 569.2h13v1.600h-13zM1487.0 565.2h3v1.500h-3zM1506.4 558.6h4.0v2.0h-4.0zM1506.4 561.0h3.6v1.5h-3.6zM1509.4 556.8h3.4v2.0h-3.4zM1509.4 559.4h3.0v1.6h-3.0zM1512.8 555.0h5.0v2.2h-5.0zM1512.8 557.8h3.6v2.2h-3.6zM1505.4 572.9h4v1.500h-4zM1509.4 570.7h13v1.600h-13zM1526.8 558.6h5.0v2.0h-5.0zM1526.8 561.0h2.6v1.5h-2.6zM1529.8 556.8h5.4v2.0h-5.4zM1529.8 559.4h3.0v1.6h-3.0zM1533.2 555.0h5.0v2.2h-5.0zM1533.2 557.8h5.6v2.2h-5.6zM1525.8 572.9h4v1.500h-4zM1529.8 570.7h8v1.600h-8zM1547.3 555.0h5.0v2.2h-5.0zM1547.3 557.8h2.5v1.6h-2.5zM1550.7 553.2h4.6v2.2h-4.6zM1550.7 557.0h4.0v2.4h-4.0zM1554.1 558.4h6.0v2.0h-6.0zM1554.1 561.0h4.2v1.5h-4.2zM1546.3 571.4h4v1.500h-4zM1550.3 569.2h13v1.600h-13zM1567.7 558.6h4.0v2.0h-4.0zM1567.7 561.0h3.6v1.5h-3.6zM1570.7 556.8h5.4v2.0h-5.4zM1570.7 559.4h5.0v1.6h-5.0zM1574.1 555.0h4.0v2.2h-4.0zM1574.1 557.8h4.6v2.2h-4.6zM1566.7 569.9h4v1.500h-4zM1570.7 567.7h13v1.600h-13zM1588.1 558.6h3.0v2.0h-3.0zM1591.1 556.8h3.4v2.0h-3.4zM1591.1 559.4h3.0v1.6h-3.0zM1594.5 555.0h4.0v2.2h-4.0zM1594.5 557.8h4.6v2.2h-4.6zM1587.1 571.4h4v1.500h-4zM1591.1 569.2h13v1.600h-13zM1608.5 558.6h4.0v2.0h-4.0zM1608.5 561.0h3.6v1.5h-3.6zM1611.5 556.8h4.4v2.0h-4.4zM1611.5 559.4h5.0v1.6h-5.0zM1614.9 555.0h6.0v2.2h-6.0zM1614.9 557.8h3.6v2.2h-3.6zM1607.5 568.4h4v1.500h-4zM1611.5 566.2h5v1.600h-5zM1609.5 562.2h3v1.500h-3zM1628.9 555.0h3.0v2.2h-3.0zM1632.3 553.2h3.6v2.2h-3.6zM1632.3 557.0h5.0v2.4h-5.0zM1635.7 558.4h5.0v2.0h-5.0zM1627.9 568.4h4v1.500h-4zM1631.9 566.2h13v1.600h-13zM1649.4 558.6h3.0v2.0h-3.0zM1649.4 561.0h3.6v1.5h-3.6zM1652.4 556.8h3.4v2.0h-3.4zM1652.4 559.4h3.0v1.6h-3.0zM1655.8 555.0h6.0v2.2h-6.0zM1655.8 557.8h5.6v2.2h-5.6zM1648.4 571.4h4v1.500h-4zM1652.4 569.2h8v1.600h-8zM1650.4 565.2h3v1.500h-3z" fill="#dbe6ff"/><path stroke="#3258bd" stroke-width="1.600" opacity=".8" d="M1671.3 549.1500000000001V575.5000000000001M1681.5 549.1500000000001V575.5000000000001M1691.7 549.1500000000001V575.5000000000001M1701.9 549.1500000000001V575.5000000000001M1712.1 549.1500000000001V575.5000000000001M1722.3 549.1500000000001V575.5000000000001M1732.6 549.1500000000001V575.5000000000001M1742.8 549.1500000000001V575.5000000000001M1753.0 549.1500000000001V575.5000000000001M1763.2 549.1500000000001V575.5000000000001M1773.4 549.1500000000001V575.5000000000001M1783.6 549.1500000000001V575.5000000000001M1793.8 549.1500000000001V575.5000000000001M1804.0 549.1500000000001V575.5000000000001M1814.2 549.1500000000001V575.5000000000001M1824.5 549.1500000000001V575.5000000000001M1834.7 549.1500000000001V575.5000000000001"/><path d="M1670.3 558.6h4.0v2.0h-4.0zM1670.3 561.0h3.6v1.5h-3.6zM1673.3 556.8h5.4v2.0h-5.4zM1673.3 559.4h4.0v1.6h-4.0zM1676.7 555.0h4.0v2.2h-4.0zM1676.7 557.8h4.6v2.2h-4.6zM1669.3 568.4h4v1.500h-4zM1673.3 566.2h13v1.600h-13zM1690.7 558.6h5.0v2.0h-5.0zM1690.7 561.0h3.6v1.5h-3.6zM1693.7 556.8h4.4v2.0h-4.4zM1693.7 559.4h4.0v1.6h-4.0zM1697.1 555.0h6.0v2.2h-6.0zM1689.7 568.4h4v1.500h-4zM1693.7 566.2h8v1.600h-8zM1711.1 558.6h3.0v2.0h-3.0zM1714.1 556.8h4.4v2.0h-4.4zM1714.1 559.4h3.0v1.6h-3.0zM1717.5 555.0h5.0v2.2h-5.0zM1717.5 557.8h3.6v2.2h-3.6zM1710.1 569.9h4v1.500h-4zM1714.1 567.7h8v1.600h-8zM1731.6 555.0h4.0v2.2h-4.0zM1731.6 557.8h4.5v1.6h-4.5zM1735.0 553.2h2.6v2.2h-2.6zM1735.0 557.0h4.0v2.4h-4.0zM1738.4 558.4h4.0v2.0h-4.0zM1738.4 561.0h4.2v1.5h-4.2zM1730.6 571.4h4v1.500h-4zM1734.6 569.2h5v1.600h-5zM1752.0 558.6h5.0v2.0h-5.0zM1752.0 561.0h2.6v1.5h-2.6zM1755.0 556.8h3.4v2.0h-3.4zM1755.0 559.4h5.0v1.6h-5.0zM1758.4 555.0h6.0v2.2h-6.0zM1758.4 557.8h5.6v2.2h-5.6zM1751.0 569.9h4v1.500h-4zM1755.0 567.7h11v1.600h-11zM1753.0 563.7h3v1.500h-3zM1772.4 558.6h4.0v2.0h-4.0zM1772.4 561.0h2.6v1.5h-2.6zM1775.4 556.8h3.4v2.0h-3.4zM1775.4 559.4h3.0v1.6h-3.0zM1778.8 555.0h6.0v2.2h-6.0zM1778.8 557.8h5.6v2.2h-5.6zM1771.4 569.9h4v1.500h-4zM1775.4 567.7h8v1.600h-8zM1792.8 558.6h5.0v2.0h-5.0zM1792.8 561.0h3.6v1.5h-3.6zM1795.8 556.8h4.4v2.0h-4.4zM1795.8 559.4h5.0v1.6h-5.0zM1799.2 557.8h5.6v2.2h-5.6zM1791.8 569.9h4v1.500h-4zM1795.8 567.7h5v1.600h-5zM1813.2 555.0h4.0v2.2h-4.0zM1813.2 557.8h2.5v1.6h-2.5zM1816.6 553.2h3.6v2.2h-3.6zM1816.6 557.0h3.0v2.4h-3.0zM1820.0 561.0h5.2v1.5h-5.2zM1812.2 571.4h4v1.500h-4zM1816.2 569.2h11v1.600h-11zM1814.2 565.2h3v1.500h-3zM1833.7 558.6h4.0v2.0h-4.0zM1833.7 561.0h4.6v1.5h-4.6zM1836.7 556.8h3.4v2.0h-3.4zM1836.7 559.4h4.0v1.6h-4.0zM1840.1 555.0h6.0v2.2h-6.0zM1832.7 568.4h4v1.500h-4zM1836.7 566.2h11v1.600h-11zM1834.7 562.2h3v1.500h-3z" fill="#dbe6ff"/><rect x="944.7" y="609.6" width="5" height="1.800" fill="#cfe6ff"/><rect x="965.1" y="611.1" width="4" height="1.800" fill="#cfe6ff"/><rect x="985.5" y="609.6" width="5" height="1.800" fill="#cfe6ff"/><rect x="1005.9" y="611.1" width="4" height="1.800" fill="#cfe6ff"/><rect x="1026.3" y="609.6" width="5" height="1.800" fill="#cfe6ff"/><rect x="1046.7" y="611.1" width="4" height="1.800" fill="#cfe6ff"/><rect x="1067.1" y="609.6" width="5" height="1.800" fill="#cfe6ff"/><rect x="1087.5" y="611.1" width="4" height="1.800" fill="#cfe6ff"/><rect x="1313.0" y="609.6" width="5" height="1.800" fill="#cfe6ff"/><rect x="1333.4" y="611.1" width="4" height="1.800" fill="#cfe6ff"/><rect x="1353.8" y="609.6" width="5" height="1.800" fill="#cfe6ff"/><rect x="1374.2" y="611.1" width="4" height="1.800" fill="#cfe6ff"/><rect x="1394.6" y="609.6" width="5" height="1.800" fill="#cfe6ff"/><rect x="1415.0" y="611.1" width="4" height="1.800" fill="#cfe6ff"/><rect x="1435.4" y="609.6" width="5" height="1.800" fill="#cfe6ff"/><rect x="1455.8" y="611.1" width="4" height="1.800" fill="#cfe6ff"/><rect x="1496.0" y="609.6" width="5" height="1.800" fill="#cfe6ff"/><rect x="1516.4" y="611.1" width="4" height="1.800" fill="#cfe6ff"/><rect x="1536.8" y="609.6" width="5" height="1.800" fill="#cfe6ff"/><rect x="1557.2" y="611.1" width="4" height="1.800" fill="#cfe6ff"/><rect x="1577.6" y="609.6" width="5" height="1.800" fill="#cfe6ff"/><rect x="1598.0" y="611.1" width="4" height="1.800" fill="#cfe6ff"/><rect x="1618.4" y="609.6" width="5" height="1.800" fill="#cfe6ff"/><rect x="1638.8" y="611.1" width="4" height="1.800" fill="#cfe6ff"/></svg>
<div style="left:962.5px;top:150px;width:1.5px;height:493px;background:#e9e9e9;box-shadow:0 0 0 .5px rgba(60,60,60,.6)"></div>
<svg style="left:955px;top:139.5px;" width="17" height="13" viewBox="0 0 17 13"><path d="M1.500 .5h14v7.500l-7 4.500-7-4.500z" fill="#d9d9d9" stroke="#8a8a8a" stroke-width=".8"/></svg>
<!-- p6_editor -->
<div style="left:242px;top:649.5px;width:1682px;height:470px;background:#4a4a4a;border-radius:6px 0 0 0;box-shadow:0 0 0 1.800px #72adee, inset 0 0 0 1px #2a2a2a"></div>
<div style="left:244px;top:683px;width:1676px;height:1px;background:#2e2e2e"></div>
<div class="t c" style="left:808.7px;top:659px;width:137.0px;height:16px;color:#e4e4e4;font-size:14.300px;line-height:16px">Pianorolle</div>
<div style="left:945.7px;top:652px;width:136.29999999999995px;height:31px;background:#356db5"></div>
<div class="t c" style="left:945.7px;top:659px;width:136.29999999999995px;height:16px;color:#fff;font-size:14.300px;line-height:16px">Notation</div>
<div class="t c" style="left:1082px;top:659px;width:138px;height:16px;color:#9a9a9a;font-size:14.300px;line-height:16px">Step Sequencer</div>
<div class="t c" style="left:1220px;top:659px;width:137px;height:16px;color:#f2f2f2;font-size:14.300px;line-height:16px">Smart Tempo</div>
<div style="left:808.2px;top:652px;width:1px;height:31px;background:#363636"></div>
<div style="left:1081.5px;top:652px;width:1px;height:31px;background:#363636"></div>
<div style="left:1219.5px;top:652px;width:1px;height:31px;background:#363636"></div>
<div style="left:1356.5px;top:652px;width:1px;height:31px;background:#363636"></div>
<div style="left:244px;top:713.5px;width:1676px;height:1px;background:#2e2e2e"></div>
<div style="left:253px;top:687.5px;width:34.5px;height:22px;background:#3d3d3d;border-radius:4px;box-shadow:0 .5px 0 rgba(255,255,255,.08)"></div>
<svg style="left:263px;top:690px;" width="14" height="17" viewBox="0 0 14 17"><path d="M2 5.500L6 1.500l4 4M6 2v7c0 3.500 2 5.500 5.500 6.500" fill="none" stroke="#e8e8e8" stroke-width="1.300"/></svg>
<div style="left:297px;top:687.5px;width:391.5px;height:22px;background:#3d3d3d;border-radius:4px;box-shadow:0 .5px 0 rgba(255,255,255,.08)"></div>
<div style="left:378.7px;top:687.5px;width:1px;height:22px;background:#4a4a4a"></div>
<div style="left:488.7px;top:687.5px;width:1px;height:22px;background:#4a4a4a"></div>
<div style="left:600px;top:687.5px;width:1px;height:22px;background:#4a4a4a"></div>
<div class="t" style="left:308px;top:691px;color:#fff;font-size:14.300px">Layout</div>
<svg style="left:363.5px;top:696px;" width="9" height="6" viewBox="0 0 9 6"><path d="M1 1l3.500 3.700 3.500-3.700" fill="none" stroke="#b5b5b5" stroke-width="1.200"/></svg>
<div class="t" style="left:390.5px;top:691px;color:#fff;font-size:14.300px">Bearbeiten</div>
<svg style="left:472.5px;top:696px;" width="9" height="6" viewBox="0 0 9 6"><path d="M1 1l3.500 3.700 3.500-3.700" fill="none" stroke="#b5b5b5" stroke-width="1.200"/></svg>
<div class="t" style="left:499.7px;top:691px;color:#fff;font-size:14.300px">Funktionen</div>
<svg style="left:584px;top:696px;" width="9" height="6" viewBox="0 0 9 6"><path d="M1 1l3.500 3.700 3.500-3.700" fill="none" stroke="#b5b5b5" stroke-width="1.200"/></svg>
<div class="t" style="left:611.5px;top:691px;color:#fff;font-size:14.300px">Ansicht</div>
<svg style="left:672.5px;top:696px;" width="9" height="6" viewBox="0 0 9 6"><path d="M1 1l3.500 3.700 3.500-3.700" fill="none" stroke="#b5b5b5" stroke-width="1.200"/></svg>
<div style="left:698px;top:688px;width:102px;height:22px;background:#3d3d3d;border-radius:4px;box-shadow:0 .5px 0 rgba(255,255,255,.08)"></div>
<div style="left:698px;top:688px;width:34px;height:22px;background:#7d2fc4;border-radius:4px 0 0 4px"></div>
<div style="left:706px;top:695px;width:18px;height:8px;background:#d7b8f2;border-radius:1px;box-shadow:inset 0 0 0 1.500px #b48ade"></div>
<svg style="left:740.5px;top:692px;" width="17" height="15" viewBox="0 0 17 15"><g fill="#eee"><rect x="0" y="0" width="17" height="3"/><rect x="0" y="4.500" width="17" height="1"/><rect x="0" y="8" width="17" height="3"/><rect x="0" y="12.500" width="17" height="2"/></g></svg>
<svg style="left:775.5px;top:691px;" width="16" height="17" viewBox="0 0 16 17"><rect x="1" y="1" width="14" height="15" fill="none" stroke="#fff" stroke-width="1.800"/><path d="M3 5h10M3 8.500h10M3 12h10" stroke="#ddd" stroke-width="1.300"/></svg>
<div style="left:809.5px;top:688px;width:35px;height:22px;background:#3d3d3d;border-radius:4px;box-shadow:0 .5px 0 rgba(255,255,255,.08)"></div>
<svg style="left:815px;top:691px;" width="24" height="16" viewBox="0 0 24 16"><path d="M1 13h5M8.500 12.500L15.500 4.500M18 3h5" stroke="#fff" stroke-width="1.200" fill="none"/><circle cx="7.500" cy="13" r="1.800" fill="#fff"/><circle cx="16.500" cy="3.500" r="1.800" fill="#fff"/></svg>
<div style="left:853.3px;top:688px;width:69.2px;height:22px;background:#3d3d3d;border-radius:4px;box-shadow:0 .5px 0 rgba(255,255,255,.08)"></div>
<div style="left:888.7px;top:688px;width:33.8px;height:22px;background:#2fa84f;border-radius:0 4px 4px 0"></div>
<svg style="left:859px;top:692px;" width="8" height="14" viewBox="0 0 8 14"><path d="M1.500 2l4 5-4 5" fill="none" stroke="#fff" stroke-width="1.300"/></svg>
<svg style="left:868.5px;top:692px;" width="14" height="14" viewBox="0 0 14 14"><circle cx="7" cy="7" r="6.800" fill="#fff"/><g fill="#3d3d3d"><circle cx="3" cy="8" r="1"/><circle cx="4.300" cy="4.300" r="1"/><circle cx="7" cy="3" r="1"/><circle cx="9.700" cy="4.300" r="1"/><circle cx="11" cy="8" r="1"/><rect x="5.500" y="11.500" width="3" height="3"/></g></svg>
<svg style="left:893px;top:692px;" width="14" height="14" viewBox="0 0 14 14"><circle cx="7" cy="7" r="6.800" fill="#fff"/><g fill="#2fa84f"><circle cx="3" cy="8" r="1"/><circle cx="4.300" cy="4.300" r="1"/><circle cx="7" cy="3" r="1"/><circle cx="9.700" cy="4.300" r="1"/><circle cx="11" cy="8" r="1"/><rect x="5.500" y="11.500" width="3" height="3"/></g></svg>
<svg style="left:909.5px;top:692px;" width="8" height="14" viewBox="0 0 8 14"><path d="M1.500 2l4 5-4 5" fill="none" stroke="#fff" stroke-width="1.300"/></svg>
<div style="left:932px;top:688px;width:34px;height:22px;background:#3572c6;border-radius:4px"></div>
<svg style="left:937px;top:691px;" width="24" height="16" viewBox="0 0 24 16"><path d="M1.500 4.500l3.800 3.500-3.800 3.500M22.500 4.500l-3.800 3.500 3.800 3.500" fill="none" stroke="#fff" stroke-width="1.300"/><path d="M8 1.500h8l-3.400 4.500v8.500h-1.200v-8.500z" fill="#fff"/></svg>
<div style="left:977px;top:688px;width:34.5px;height:22px;background:#b8931c;border-radius:4px"></div>
<svg style="left:984px;top:691px;" width="21" height="16" viewBox="0 0 21 16"><g fill="none" stroke="#f7e7b0" stroke-width="1.500"><rect x="1" y="6" width="11" height="7" rx="3.500" transform="rotate(-25 6.500 9.500)"/><rect x="8.500" y="2.500" width="11" height="7" rx="3.500" transform="rotate(-25 14 6)"/></g></svg>
<div style="left:1037px;top:688px;width:92.5px;height:22px;background:#3d3d3d;border-radius:4px;box-shadow:0 .5px 0 rgba(255,255,255,.08)"></div>
<div style="left:1083.5px;top:688px;width:1px;height:22px;background:#4a4a4a"></div>
<svg style="left:1046px;top:690.5px;" width="12" height="17" viewBox="0 0 12 17"><path d="M1.500 1v12.500l3.300-3 2.500 5.500 2-1-2.500-5.300h4.400z" fill="#fff" stroke="#222" stroke-width=".6"/></svg>
<svg style="left:1066px;top:696px;" width="9" height="6" viewBox="0 0 9 6"><path d="M1 1l3.500 3.700 3.500-3.700" fill="none" stroke="#b5b5b5" stroke-width="1.200"/></svg>
<svg style="left:1091px;top:690px;" width="16" height="18" viewBox="0 0 16 18"><g transform="rotate(-38 8 9)"><rect x="5.500" y="2" width="5" height="11" fill="none" stroke="#fff" stroke-width="1.200"/><path d="M5.500 2l2.500-3 2.500 3M5.500 13h5v2.500h-5z" fill="#fff" stroke="#fff" stroke-width=".8"/></g></svg>
<svg style="left:1113.5px;top:696px;" width="9" height="6" viewBox="0 0 9 6"><path d="M1 1l3.500 3.700 3.500-3.700" fill="none" stroke="#b5b5b5" stroke-width="1.200"/></svg>
<div style="left:1788.5px;top:688px;width:34.5px;height:22px;background:#3d3d3d;border-radius:4px;box-shadow:0 .5px 0 rgba(255,255,255,.08)"></div>
<svg style="left:1797px;top:691px;" width="18" height="16" viewBox="0 0 18 16"><path d="M2 1h14M2 15h14M9 2.500v11M6 5.500l3-3 3 3M6 10.500l3 3 3-3" fill="none" stroke="#fff" stroke-width="1.200"/></svg>
<div style="left:1831.5px;top:688px;width:82px;height:22px;background:#3d3d3d;border-radius:4px;box-shadow:0 .5px 0 rgba(255,255,255,.08)"></div>
<svg style="left:1839px;top:691px;" width="10" height="16" viewBox="0 0 10 16"><path d="M5 1.500v13M2 4.500l3-3 3 3M2 11.500l3 3 3-3" fill="none" stroke="#d5d5d5" stroke-width="1.100"/></svg>
<div style="left:1857px;top:698.5px;width:49px;height:2px;background:#2b2b2b;border-radius:1px"></div>
<svg style="left:1873.5px;top:692px;" width="12" height="12" viewBox="0 0 12 12"><path d="M6 .5c2 1.500 4.500 3.500 4.500 6.500v3.500h-9V7C1.500 4 4 2 6 .5z" fill="#c9c9c9"/></svg>
<div style="left:1859px;top:691.5px;width:1px;height:1.5px;background:#7a7a7a"></div>
<div style="left:1861px;top:691.5px;width:1px;height:1.5px;background:#7a7a7a"></div>
<div style="left:1863px;top:691.5px;width:1px;height:1.5px;background:#7a7a7a"></div>
<div style="left:1876px;top:691.5px;width:1px;height:1.5px;background:#7a7a7a"></div>
<div style="left:1890px;top:691.5px;width:1px;height:1.5px;background:#7a7a7a"></div>
<div style="left:1903px;top:691.5px;width:1px;height:1.5px;background:#7a7a7a"></div>
<div style="left:244px;top:714.5px;width:108px;height:48px;background:#585858"></div>
<div style="left:352px;top:714.5px;width:1568px;height:24px;background:#4e4e4e"></div>
<div style="left:352px;top:738px;width:1568px;height:2.5px;background:#2a2a2a"></div>
<div style="left:352px;top:740.5px;width:1568px;height:21px;background:#30455f"></div>
<div style="left:352px;top:761.5px;width:1568px;height:1px;background:#1d2a3a"></div>
<div style="left:307.5px;top:725.5px;width:35px;height:22px;background:#3f3f3f;border-radius:4px;box-shadow:0 .5px 0 rgba(255,255,255,.1)"></div>
<svg style="left:317px;top:729px;" width="16" height="15" viewBox="0 0 16 15"><rect x=".8" y=".8" width="14.400" height="13.400" rx="1" fill="none" stroke="#f2f2f2" stroke-width="1.200"/><rect x=".8" y=".8" width="14.400" height="3" fill="#f2f2f2"/><path d="M5 7.500l3 3 3-3" fill="none" stroke="#f2f2f2" stroke-width="1.200"/></svg>
<div style="left:514.3px;top:717px;width:1px;height:45px;background:rgba(150,160,175,.45)"></div>
<div class="t" style="left:521.3px;top:715.5px;color:#d6d6d6;font-size:14px">31</div>
<div style="left:669.3px;top:717px;width:1px;height:45px;background:rgba(150,160,175,.45)"></div>
<div class="t" style="left:676.3px;top:715.5px;color:#d6d6d6;font-size:14px">32</div>
<div style="left:921.5px;top:717px;width:1px;height:45px;background:rgba(150,160,175,.45)"></div>
<div class="t" style="left:928.5px;top:715.5px;color:#d6d6d6;font-size:14px">33</div>
<div style="left:1042.2px;top:717px;width:1px;height:45px;background:rgba(150,160,175,.45)"></div>
<div class="t" style="left:1049.2px;top:715.5px;color:#d6d6d6;font-size:14px">34</div>
<div style="left:1282px;top:717px;width:1px;height:45px;background:rgba(150,160,175,.45)"></div>
<div class="t" style="left:1289px;top:715.5px;color:#d6d6d6;font-size:14px">35</div>
<div style="left:1443px;top:717px;width:1px;height:45px;background:rgba(150,160,175,.45)"></div>
<div class="t" style="left:1450px;top:715.5px;color:#d6d6d6;font-size:14px">36</div>
<div style="left:1697px;top:717px;width:1px;height:45px;background:rgba(150,160,175,.45)"></div>
<div class="t" style="left:1704px;top:715.5px;color:#d6d6d6;font-size:14px">37</div>
<div style="left:1820.7px;top:717px;width:1px;height:45px;background:rgba(150,160,175,.45)"></div>
<div class="t" style="left:1827.7px;top:715.5px;color:#d6d6d6;font-size:14px">38</div>
<div style="left:404px;top:745px;width:1px;height:16.5px;background:#3d5371"></div>
<div style="left:450px;top:745px;width:1px;height:16.5px;background:#3d5371"></div>
<div style="left:501.6px;top:745px;width:1px;height:16.5px;background:#3d5371"></div>
<div style="left:555px;top:745px;width:1px;height:16.5px;background:#3d5371"></div>
<div style="left:594.4px;top:745px;width:1px;height:16.5px;background:#3d5371"></div>
<div style="left:631.6px;top:745px;width:1px;height:16.5px;background:#3d5371"></div>
<div style="left:716.9px;top:745px;width:1px;height:16.5px;background:#3d5371"></div>
<div style="left:758.4px;top:745px;width:1px;height:16.5px;background:#3d5371"></div>
<div style="left:811px;top:745px;width:1px;height:16.5px;background:#3d5371"></div>
<div style="left:856.9px;top:745px;width:1px;height:16.5px;background:#3d5371"></div>
<div style="left:887.5px;top:745px;width:1px;height:16.5px;background:#3d5371"></div>
<div style="left:966px;top:745px;width:1px;height:16.5px;background:#3d5371"></div>
<div style="left:1010px;top:745px;width:1px;height:16.5px;background:#3d5371"></div>
<div style="left:1091px;top:745px;width:1px;height:16.5px;background:#3d5371"></div>
<div style="left:1128px;top:745px;width:1px;height:16.5px;background:#3d5371"></div>
<div style="left:1166.6px;top:745px;width:1px;height:16.5px;background:#3d5371"></div>
<div style="left:1208.2px;top:745px;width:1px;height:16.5px;background:#3d5371"></div>
<div style="left:1330.3px;top:745px;width:1px;height:16.5px;background:#3d5371"></div>
<div style="left:1368.8px;top:745px;width:1px;height:16.5px;background:#3d5371"></div>
<div style="left:1406px;top:745px;width:1px;height:16.5px;background:#3d5371"></div>
<div style="left:1493.4px;top:745px;width:1px;height:16.5px;background:#3d5371"></div>
<div style="left:1538px;top:745px;width:1px;height:16.5px;background:#3d5371"></div>
<div style="left:1586.6px;top:745px;width:1px;height:16.5px;background:#3d5371"></div>
<div style="left:1631.3px;top:745px;width:1px;height:16.5px;background:#3d5371"></div>
<div style="left:1735px;top:745px;width:1px;height:16.5px;background:#3d5371"></div>
<div style="left:1756px;top:745px;width:1px;height:16.5px;background:#3d5371"></div>
<div style="left:1782px;top:745px;width:1px;height:16.5px;background:#3d5371"></div>
<div style="left:1869.7px;top:745px;width:1px;height:16.5px;background:#3d5371"></div>
<div style="left:1906px;top:745px;width:1px;height:16.5px;background:#3d5371"></div>
<!-- p7_score -->
<div style="left:244px;top:762.5px;width:108.3px;height:351px;background:#c5c5be"></div>
<div style="left:352.3px;top:762.5px;width:1568px;height:251.5px;background:#fffff4"></div>
<div style="left:352.3px;top:1014px;width:1568px;height:100px;background:#c3c3bb"></div>
<div style="left:352px;top:762.5px;width:1px;height:351px;background:#9c9c96"></div>
<div style="left:244px;top:1014px;width:108px;height:1px;background:#b4b4ad"></div>
<svg style="left:0px;top:0px;" width="1920" height="1113" viewBox="0 0 1920 1113"><path d="M254.500 806.6H1920" stroke="#0a0a0a" stroke-width="1.100"/><path d="M254.500 818.5H1920" stroke="#0a0a0a" stroke-width="1.100"/><path d="M254.500 830.4H1920" stroke="#0a0a0a" stroke-width="1.100"/><path d="M254.500 842.3H1920" stroke="#0a0a0a" stroke-width="1.100"/><path d="M254.500 854.2H1920" stroke="#0a0a0a" stroke-width="1.100"/><path d="M254.500 925.1H1920" stroke="#0a0a0a" stroke-width="1.100"/><path d="M254.500 936.9H1920" stroke="#0a0a0a" stroke-width="1.100"/><path d="M254.500 948.7H1920" stroke="#0a0a0a" stroke-width="1.100"/><path d="M254.500 960.5H1920" stroke="#0a0a0a" stroke-width="1.100"/><path d="M254.500 972.3H1920" stroke="#0a0a0a" stroke-width="1.100"/><path d="M254.500 806.6V972.3" stroke="#0a0a0a" stroke-width="1.200"/><path d="M502.1 806.6V972.3" stroke="#0a0a0a" stroke-width="1.300"/><path d="M657 806.6V972.3" stroke="#0a0a0a" stroke-width="1.300"/><path d="M909.7 806.6V972.3" stroke="#0a0a0a" stroke-width="1.300"/><path d="M1030 806.6V972.3" stroke="#0a0a0a" stroke-width="1.300"/><path d="M1269.6 806.6V972.3" stroke="#0a0a0a" stroke-width="1.300"/><path d="M1431.9 806.6V972.3" stroke="#0a0a0a" stroke-width="1.300"/><path d="M1683.7 806.6V972.3" stroke="#0a0a0a" stroke-width="1.300"/><path d="M1808.6 806.6V972.3" stroke="#0a0a0a" stroke-width="1.300"/><path d="M279.0 847.1L278.8 846.9L278.5 846.6L278.2 846.2L277.9 845.9L277.6 845.5L277.2 845.1L276.9 844.7L276.5 844.2L276.2 843.8L275.9 843.3L275.7 842.9L275.5 842.5L275.3 842.1L275.3 841.7L275.2 841.3L275.2 840.9L275.2 840.4L275.2 839.9L275.2 839.4L275.3 838.9L275.4 838.4L275.5 837.9L275.7 837.4L275.8 836.9L276.0 836.4L276.2 836.0L276.4 835.6L276.6 835.3L276.9 835.0L277.2 834.6L277.6 834.3L278.0 833.9L278.4 833.6L278.9 833.2L279.4 832.9L279.9 832.6L280.4 832.4L280.8 832.2L281.3 832.0L281.7 831.9L282.1 831.9L282.5 831.9L282.9 832.0L283.4 832.1L283.9 832.2L284.4 832.4L284.9 832.6L285.4 832.9L285.9 833.2L286.4 833.5L286.8 833.9L287.2 834.2L287.6 834.6L287.9 834.9L288.1 835.3L288.3 835.6L288.5 836.0L288.7 836.6L288.9 837.2L289.0 837.9L289.2 838.6L289.3 839.4L289.4 840.2L289.5 841.0L289.5 841.8L289.5 842.6L289.4 843.3L289.4 844.0L289.2 844.6L289.1 845.2L288.8 845.7L288.5 846.4L288.2 847.0L287.7 847.7L287.2 848.4L286.6 849.1L286.0 849.7L285.4 850.4L284.8 851.0L284.1 851.5L283.4 852.0L282.8 852.4L282.2 852.7L281.6 852.9L281.1 853.0L280.5 853.0L279.8 853.0L279.2 852.9L278.5 852.8L277.8 852.6L277.2 852.4L276.5 852.1L275.9 851.8L275.3 851.4L274.8 851.0L274.3 850.6L273.9 850.2L273.5 849.8L273.2 849.4L272.9 848.9L272.7 848.4L272.4 847.8L272.1 847.1L271.9 846.4L271.7 845.7L271.6 844.9L271.4 844.2L271.3 843.4L271.2 842.7L271.2 842.0L271.1 841.4L271.1 840.8L271.1 840.2L271.1 839.6L271.2 839.0L271.2 838.4L271.3 837.8L271.4 837.1L271.6 836.4L271.8 835.7L272.0 835.0L272.2 834.2L272.4 833.5L272.7 832.8L272.9 832.0L273.2 831.3L273.5 830.7L273.7 830.1L274.1 829.4L274.4 828.8L274.8 828.1L275.2 827.4L275.7 826.7L276.2 826.0L276.6 825.3L277.1 824.6L277.6 823.9L278.1 823.1L278.6 822.4L279.1 821.7L279.6 821.0L280.0 820.3L280.5 819.6L281.0 818.9L281.5 818.2L282.0 817.5L282.5 816.8L283.0 816.1L283.5 815.4L284.0 814.7L284.4 814.0L284.9 813.3L285.3 812.6L285.7 811.9L286.1 811.2L286.4 810.5L286.8 809.8L287.1 809.0L287.5 808.3L287.8 807.6L288.1 806.9L288.4 806.1L288.7 805.4L288.9 804.7L289.1 803.9L289.3 803.2L289.4 802.4L289.5 801.7L289.5 800.9L289.5 800.1L289.4 799.3L289.2 798.6L289.0 797.9L288.8 797.2L288.6 796.5L288.3 795.9L288.1 795.3L287.8 794.7L287.5 794.1L287.3 793.6L287.0 793.2L286.7 792.8L286.4 792.4L286.1 792.0L285.8 791.6L285.5 791.3L285.2 791.0L284.8 790.8L284.4 790.6L284.1 790.4L283.7 790.3L283.3 790.2L282.9 790.1L282.5 790.1L282.1 790.2L281.7 790.4L281.3 790.5L281.0 790.8L280.7 791.0L280.4 791.3L280.1 791.6L279.8 792.0L279.5 792.3L279.2 792.7L278.9 793.2L278.7 793.7L278.4 794.2L278.2 794.7L278.1 795.3L277.9 795.8L277.8 796.4L277.7 797.0L277.7 797.7L277.7 798.3L277.7 799.0L277.7 799.6L277.7 800.4L277.8 801.1L277.8 801.9L277.9 802.6L278.0 803.5L278.0 804.3L278.1 805.2L278.2 806.1L278.3 807.1L278.4 808.1L278.5 809.1L278.7 810.1L278.8 811.2L278.9 812.4L279.1 813.5L279.3 814.7L279.4 815.9L279.6 817.1L279.8 818.3L279.9 819.6L280.1 820.9L280.3 822.1L280.4 823.4L280.6 824.8L280.8 826.2L280.9 827.6L281.1 829.1L281.3 830.6L281.5 832.1L281.7 833.6L281.9 835.0L282.1 836.5L282.2 838.0L282.4 839.4L282.6 840.8L282.8 842.1L282.9 843.5L283.1 844.8L283.3 846.1L283.5 847.5L283.7 848.8L283.9 850.1L284.1 851.3L284.3 852.6L284.4 853.8L284.6 854.9L284.7 856.1L284.8 857.1L284.9 858.1L285.0 859.1L285.0 859.9L285.0 860.8L285.0 861.6L285.0 862.3L285.0 863.0L284.9 863.6L284.9 864.2L284.8 864.8L284.7 865.3L284.6 865.8L284.5 866.3L284.3 866.7L284.2 867.1L284.0 867.5L283.8 867.9L283.6 868.2L283.3 868.6L283.1 868.9L282.8 869.2L282.4 869.5L282.1 869.7L281.7 869.9L281.4 870.1L281.0 870.3L280.7 870.5L280.4 870.6L280.1 870.7L279.9 870.7L279.7 870.7L279.5 870.7L279.3 870.6L279.0 870.5L278.7 870.3L278.4 870.1L278.1 869.9L277.8 869.7L277.5 869.4L277.2 869.2L276.9 869.0L276.6 868.8L276.4 868.6L276.1 868.4L274.9 870.6L275.0 870.7L275.2 870.8L275.4 870.9L275.7 871.1L276.0 871.4L276.4 871.6L276.8 871.9L277.2 872.1L277.6 872.3L278.1 872.6L278.6 872.7L279.1 872.9L279.6 872.9L280.1 872.9L280.6 872.8L281.1 872.7L281.5 872.5L282.0 872.3L282.4 872.1L282.9 871.8L283.3 871.5L283.8 871.2L284.2 870.8L284.6 870.4L285.0 870.0L285.4 869.5L285.7 869.0L286.0 868.5L286.2 867.9L286.4 867.4L286.6 866.9L286.7 866.3L286.8 865.7L286.9 865.1L287.0 864.4L287.1 863.8L287.1 863.1L287.1 862.3L287.1 861.5L287.1 860.7L287.1 859.9L287.0 858.9L287.0 858.0L286.9 856.9L286.8 855.8L286.7 854.7L286.5 853.5L286.3 852.3L286.2 851.0L286.0 849.8L285.8 848.5L285.6 847.2L285.4 845.8L285.2 844.5L285.0 843.2L284.8 841.9L284.7 840.5L284.5 839.1L284.3 837.7L284.1 836.3L284.0 834.8L283.8 833.3L283.6 831.8L283.4 830.3L283.2 828.8L283.0 827.4L282.9 825.9L282.7 824.5L282.5 823.2L282.3 821.9L282.2 820.6L282.0 819.3L281.8 818.1L281.7 816.8L281.5 815.6L281.3 814.4L281.1 813.2L281.0 812.1L280.8 811.0L280.7 809.9L280.5 808.8L280.4 807.8L280.3 806.8L280.2 805.9L280.1 805.0L280.0 804.1L279.9 803.3L279.8 802.5L279.7 801.7L279.7 800.9L279.6 800.2L279.6 799.6L279.5 798.9L279.5 798.3L279.5 797.7L279.6 797.2L279.6 796.7L279.7 796.2L279.8 795.7L279.9 795.3L280.1 794.8L280.2 794.4L280.4 794.0L280.6 793.7L280.9 793.3L281.1 793.0L281.3 792.8L281.6 792.5L281.8 792.3L282.0 792.2L282.2 792.1L282.3 792.0L282.4 792.0L282.5 792.1L282.6 792.1L282.7 792.2L282.8 792.3L282.9 792.4L283.0 792.5L283.2 792.7L283.3 792.9L283.4 793.1L283.5 793.4L283.7 793.6L283.8 793.9L283.9 794.2L284.0 794.6L284.1 795.0L284.3 795.5L284.4 796.0L284.5 796.5L284.6 797.0L284.7 797.6L284.8 798.2L284.9 798.7L284.9 799.3L284.9 799.8L285.0 800.3L284.9 800.9L284.9 801.3L284.9 801.8L284.8 802.4L284.7 803.0L284.6 803.5L284.4 804.2L284.3 804.8L284.1 805.4L283.9 806.1L283.7 806.8L283.5 807.4L283.2 808.1L282.9 808.8L282.6 809.5L282.3 810.1L282.0 810.8L281.6 811.4L281.2 812.0L280.8 812.7L280.4 813.3L279.9 814.0L279.5 814.7L279.0 815.3L278.5 816.0L278.0 816.7L277.5 817.3L276.9 818.0L276.4 818.7L275.9 819.3L275.4 819.9L274.8 820.5L274.3 821.1L273.7 821.7L273.1 822.4L272.5 823.0L271.9 823.6L271.2 824.2L270.6 824.9L270.0 825.6L269.4 826.3L268.8 827.1L268.3 827.9L267.8 828.7L267.4 829.5L267.0 830.2L266.5 831.0L266.2 831.9L265.8 832.7L265.4 833.6L265.1 834.5L264.8 835.4L264.5 836.3L264.3 837.3L264.2 838.3L264.1 839.2L264.1 840.2L264.1 841.2L264.2 842.2L264.4 843.2L264.7 844.1L265.0 845.1L265.4 846.0L265.8 847.0L266.3 847.9L266.7 848.8L267.3 849.6L267.9 850.4L268.5 851.2L269.1 851.9L269.8 852.6L270.5 853.2L271.2 853.7L272.0 854.1L272.8 854.5L273.6 854.9L274.5 855.2L275.4 855.5L276.2 855.7L277.1 855.8L278.0 855.9L278.9 856.0L279.8 856.0L280.7 855.9L281.6 855.8L282.4 855.5L283.2 855.3L284.1 854.9L284.9 854.5L285.8 854.0L286.6 853.5L287.5 852.9L288.3 852.2L289.1 851.6L289.9 850.8L290.6 850.1L291.3 849.3L291.9 848.5L292.5 847.7L292.9 846.8L293.3 845.9L293.6 844.9L293.8 843.9L293.9 842.9L294.0 841.9L294.0 840.8L294.0 839.8L293.9 838.8L293.8 837.8L293.6 836.8L293.3 835.9L293.0 835.0L292.7 834.2L292.3 833.4L291.8 832.6L291.2 832.0L290.6 831.4L289.9 830.8L289.2 830.4L288.4 830.0L287.7 829.6L286.9 829.4L286.1 829.1L285.4 829.0L284.6 828.8L283.9 828.7L283.2 828.7L282.5 828.7L281.8 828.8L281.1 828.9L280.4 829.1L279.7 829.4L279.1 829.7L278.4 830.0L277.8 830.4L277.2 830.8L276.6 831.3L276.1 831.7L275.6 832.2L275.1 832.7L274.7 833.2L274.4 833.7L274.0 834.2L273.7 834.8L273.5 835.4L273.3 836.0L273.1 836.7L273.0 837.3L272.9 838.0L272.8 838.6L272.8 839.3L272.8 839.9L272.8 840.5L272.9 841.1L273.0 841.7L273.1 842.3L273.3 842.8L273.6 843.4L274.0 843.9L274.4 844.4L274.8 844.9L275.2 845.4L275.7 845.8L276.1 846.2L276.5 846.6L276.9 846.9L277.3 847.2L277.6 847.5L277.9 847.7L278.0 847.9z" fill="#0a0a0a" stroke="#0a0a0a" stroke-width=".4" stroke-linejoin="round"/><circle cx="275.200" cy="865.800" r="4.900" fill="#0a0a0a"/><g transform="translate(304.8 807.1)" stroke="#0a0a0a" fill="none"><path d="M-2.200 -15.500v32.500M2.200 -17v32.500" stroke-width="1.300"/><path d="M-5.400 -4.300l10.800-3.200M-5.400 7.500l10.800-3.200" stroke-width="4"/></g><path d="M268.3 936.5L268.4 936.2L268.4 935.9L268.4 935.5L268.4 935.1L268.4 934.7L268.4 934.2L268.4 933.7L268.4 933.2L268.4 932.8L268.5 932.3L268.5 931.9L268.6 931.5L268.7 931.2L268.8 930.9L269.0 930.7L269.1 930.4L269.3 930.1L269.5 929.8L269.8 929.5L270.0 929.2L270.3 929.0L270.6 928.7L270.9 928.5L271.2 928.2L271.5 928.0L271.8 927.8L272.1 927.6L272.5 927.5L272.8 927.4L273.1 927.2L273.5 927.1L273.9 927.0L274.2 926.9L274.6 926.8L275.0 926.8L275.4 926.8L275.8 926.8L276.2 926.8L276.5 926.8L276.9 926.9L277.3 927.0L277.7 927.2L278.0 927.3L278.5 927.6L278.9 927.8L279.3 928.1L279.7 928.4L280.1 928.8L280.5 929.1L280.9 929.5L281.2 929.8L281.5 930.2L281.7 930.6L281.9 930.9L282.1 931.2L282.2 931.5L282.3 931.8L282.4 932.2L282.6 932.6L282.7 933.1L282.7 933.5L282.8 934.0L282.9 934.5L282.9 935.1L283.0 935.6L283.0 936.1L283.0 936.7L283.0 937.2L283.0 937.8L283.0 938.3L283.0 938.8L282.9 939.3L282.9 939.9L282.8 940.5L282.7 941.1L282.6 941.8L282.5 942.4L282.3 943.1L282.2 943.7L282.0 944.3L281.8 945.0L281.6 945.6L281.4 946.2L281.1 946.8L280.9 947.3L280.6 947.9L280.3 948.4L280.0 949.0L279.7 949.5L279.3 950.0L278.9 950.6L278.5 951.1L278.1 951.6L277.6 952.2L277.2 952.7L276.6 953.2L276.1 953.8L275.6 954.3L275.0 954.9L274.3 955.5L273.5 956.1L272.7 956.7L271.9 957.3L271.0 958.0L270.1 958.6L269.3 959.2L268.4 959.8L267.6 960.3L266.9 960.8L266.3 961.3L265.7 961.6L265.3 962.0L265.7 962.6L266.2 962.4L266.8 962.1L267.5 961.8L268.3 961.4L269.1 961.0L270.1 960.6L271.0 960.1L272.0 959.7L273.0 959.2L274.0 958.7L274.9 958.2L275.8 957.7L276.7 957.2L277.4 956.7L278.1 956.2L278.8 955.7L279.5 955.3L280.1 954.8L280.7 954.3L281.3 953.8L281.9 953.3L282.5 952.8L283.0 952.2L283.5 951.7L284.0 951.1L284.5 950.5L285.0 949.9L285.5 949.2L285.9 948.6L286.3 947.9L286.7 947.2L287.1 946.5L287.5 945.7L287.9 945.0L288.2 944.2L288.5 943.4L288.8 942.7L289.0 941.9L289.2 941.1L289.4 940.3L289.5 939.5L289.6 938.7L289.6 937.9L289.6 937.2L289.6 936.4L289.5 935.6L289.4 934.8L289.3 934.0L289.1 933.3L288.9 932.5L288.6 931.8L288.3 931.1L288.0 930.4L287.7 929.7L287.2 929.1L286.8 928.5L286.3 927.9L285.7 927.4L285.1 926.9L284.5 926.5L283.8 926.2L283.2 925.9L282.5 925.6L281.9 925.4L281.2 925.2L280.6 925.1L280.0 925.0L279.4 924.8L278.9 924.7L278.3 924.6L277.8 924.6L277.3 924.5L276.8 924.5L276.2 924.5L275.7 924.5L275.2 924.5L274.7 924.6L274.2 924.7L273.8 924.8L273.3 924.9L272.8 925.0L272.4 925.2L272.0 925.3L271.5 925.5L271.1 925.7L270.7 925.9L270.3 926.2L269.9 926.4L269.5 926.7L269.1 927.0L268.8 927.4L268.4 927.7L268.1 928.0L267.8 928.4L267.5 928.8L267.2 929.2L267.0 929.6L266.8 930.1L266.6 930.6L266.5 931.1L266.5 931.6L266.4 932.2L266.4 932.7L266.5 933.3L266.5 933.8L266.6 934.3L266.6 934.8L266.7 935.2L266.8 935.6L266.8 936.0L266.8 936.3L266.9 936.5z" fill="#0a0a0a" stroke="#0a0a0a" stroke-width=".4" stroke-linejoin="round"/><circle cx="270.300" cy="935.600" r="4.600" fill="#0a0a0a"/><circle cx="293.800" cy="931" r="2.400" fill="#0a0a0a"/><circle cx="293.800" cy="942.800" r="2.400" fill="#0a0a0a"/><g transform="translate(307.9 937.4)" stroke="#0a0a0a" fill="none"><path d="M-2.200 -15.500v32.500M2.200 -17v32.500" stroke-width="1.300"/><path d="M-5.400 -4.300l10.800-3.200M-5.400 7.500l10.800-3.200" stroke-width="4"/></g><ellipse cx="362.6" cy="836.3499999999999" rx="8.300" ry="5.600" transform="rotate(-24 362.6 836.3499999999999)" fill="#0a0a0a"/><ellipse cx="362.6" cy="848.25" rx="8.300" ry="5.600" transform="rotate(-24 362.6 848.25)" fill="#0a0a0a"/><ellipse cx="362.6" cy="860.1500000000001" rx="8.300" ry="5.600" transform="rotate(-24 362.6 860.1500000000001)" fill="#0a0a0a"/><path d="M369.90000000000003 794.8V858.1500000000001" stroke="#0a0a0a" stroke-width="1.300"/><path d="M369.6 794.8c.5 6.500 11.500 11.500 10 22.500c-.3 2.500-1 4.500-2 6.500c2-8.500-1.500-13.500-8-16.500z" fill="#0a0a0a"/><path transform="translate(412.5 830.4)" d="M-4.200 -17.500L4.800 -7C1.200 -3.500 1 .5 5.800 6.500C1.500 4.300 -2.500 6.500 -.8 10.800C.2 13.500 2 15.500 4 18C-3.500 15 -8.500 8.500 -6 4C-4.500 1.800 -2 1.800 .3 2.800L-6.500 -5.200C-2.500 -8 -2 -11.500 -5.500 -16.500z" fill="#0a0a0a"/><ellipse cx="457.2" cy="830.4" rx="8.300" ry="5.600" transform="rotate(-24 457.2 830.4)" fill="#0a0a0a"/><ellipse cx="457.2" cy="842.3" rx="8.300" ry="5.600" transform="rotate(-24 457.2 842.3)" fill="#0a0a0a"/><ellipse cx="457.2" cy="854.2" rx="8.300" ry="5.600" transform="rotate(-24 457.2 854.2)" fill="#0a0a0a"/><path d="M464.5 789.6V852.2" stroke="#0a0a0a" stroke-width="1.300"/><path d="M469.5 824.4C481.95 819.4 498.55 819.4 511 824.4C498.55 821.0 481.95 821.0 469.5 824.4z" fill="#0a0a0a" stroke="#0a0a0a" stroke-width=".5"/><path d="M469.5 847.8C481.95 853.3 498.55 853.3 511 847.8C498.55 851.6999999999999 481.95 851.6999999999999 469.5 847.8z" fill="#0a0a0a" stroke="#0a0a0a" stroke-width=".5"/><path d="M469.5 859.7C481.95 865.7 498.55 865.7 511 859.7C498.55 864.1 481.95 864.1 469.5 859.7z" fill="#0a0a0a" stroke="#0a0a0a" stroke-width=".5"/><ellipse cx="521.8" cy="830.4" rx="8.300" ry="5.600" transform="rotate(-24 521.8 830.4)" fill="#0a0a0a"/><ellipse cx="521.8" cy="842.3" rx="8.300" ry="5.600" transform="rotate(-24 521.8 842.3)" fill="#0a0a0a"/><ellipse cx="521.8" cy="854.2" rx="8.300" ry="5.600" transform="rotate(-24 521.8 854.2)" fill="#0a0a0a"/><path d="M529.0999999999999 789.6V852.2" stroke="#0a0a0a" stroke-width="1.300"/><path transform="translate(563 830.4)" d="M-4.200 -17.500L4.800 -7C1.200 -3.500 1 .5 5.800 6.500C1.500 4.300 -2.500 6.500 -.8 10.800C.2 13.500 2 15.500 4 18C-3.500 15 -8.500 8.500 -6 4C-4.500 1.800 -2 1.800 .3 2.800L-6.500 -5.200C-2.500 -8 -2 -11.500 -5.500 -16.500z" fill="#0a0a0a"/><rect x="601" y="824.1999999999999" width="15" height="6.200" fill="#0a0a0a"/><path d="M664.3 866.1H687.8" stroke="#0a0a0a" stroke-width="1.300"/><ellipse cx="676.3" cy="842.3" rx="8.300" ry="5.600" transform="rotate(-24 676.3 842.3)" fill="#0a0a0a"/><ellipse cx="676.3" cy="854.2" rx="8.300" ry="5.600" transform="rotate(-24 676.3 854.2)" fill="#0a0a0a"/><ellipse cx="676.3" cy="866.1" rx="8.300" ry="5.600" transform="rotate(-24 676.3 866.1)" fill="#0a0a0a"/><path d="M683.5999999999999 801.8V864.1" stroke="#0a0a0a" stroke-width="1.300"/><g transform="translate(726.6 830.4)"><circle cx="-4.800" cy="-8.200" r="3.100" fill="#0a0a0a"/><path d="M-7.300 -6.500c3.500 2.300 8.500 1 11.300-3.700l1.200.4L-1 11.800l-2-.7L3.200 -5.200c-3 3-7 3.200-10.500.7z" fill="#0a0a0a"/></g><ellipse cx="769.2" cy="836.3499999999999" rx="8.300" ry="5.600" transform="rotate(-24 769.2 836.3499999999999)" fill="#0a0a0a"/><ellipse cx="769.2" cy="848.25" rx="8.300" ry="5.600" transform="rotate(-24 769.2 848.25)" fill="#0a0a0a"/><ellipse cx="769.2" cy="860.1500000000001" rx="8.300" ry="5.600" transform="rotate(-24 769.2 860.1500000000001)" fill="#0a0a0a"/><path d="M776.5 794.8V858.1500000000001" stroke="#0a0a0a" stroke-width="1.300"/><path d="M776.2 794.8c.5 6.500 11.500 11.500 10 22.500c-.3 2.500-1 4.500-2 6.500c2-8.500-1.500-13.500-8-16.500z" fill="#0a0a0a"/><path transform="translate(819.5 830.4)" d="M-4.200 -17.500L4.800 -7C1.200 -3.500 1 .5 5.800 6.500C1.500 4.300 -2.500 6.500 -.8 10.800C.2 13.500 2 15.500 4 18C-3.500 15 -8.500 8.500 -6 4C-4.500 1.800 -2 1.800 .3 2.800L-6.500 -5.200C-2.500 -8 -2 -11.500 -5.500 -16.500z" fill="#0a0a0a"/><ellipse cx="863.5" cy="830.4" rx="8.300" ry="5.600" transform="rotate(-24 863.5 830.4)" fill="#0a0a0a"/><ellipse cx="863.5" cy="842.3" rx="8.300" ry="5.600" transform="rotate(-24 863.5 842.3)" fill="#0a0a0a"/><ellipse cx="863.5" cy="854.2" rx="8.300" ry="5.600" transform="rotate(-24 863.5 854.2)" fill="#0a0a0a"/><path d="M870.8 789.6V852.2" stroke="#0a0a0a" stroke-width="1.300"/><path d="M876.5 824.4C888.95 819.4 905.55 819.4 918 824.4C905.55 821.0 888.95 821.0 876.5 824.4z" fill="#0a0a0a" stroke="#0a0a0a" stroke-width=".5"/><path d="M876.5 847.8C888.95 853.3 905.55 853.3 918 847.8C905.55 851.6999999999999 888.95 851.6999999999999 876.5 847.8z" fill="#0a0a0a" stroke="#0a0a0a" stroke-width=".5"/><path d="M876.5 859.7C888.95 865.7 905.55 865.7 918 859.7C905.55 864.1 888.95 864.1 876.5 859.7z" fill="#0a0a0a" stroke="#0a0a0a" stroke-width=".5"/><ellipse cx="928.5" cy="830.4" rx="8.300" ry="5.600" transform="rotate(-24 928.5 830.4)" fill="#0a0a0a"/><ellipse cx="928.5" cy="830.4" rx="6.400" ry="1.900" transform="rotate(-33 928.5 830.4)" fill="#fffff4"/><ellipse cx="928.5" cy="842.3" rx="8.300" ry="5.600" transform="rotate(-24 928.5 842.3)" fill="#0a0a0a"/><ellipse cx="928.5" cy="842.3" rx="6.400" ry="1.900" transform="rotate(-33 928.5 842.3)" fill="#fffff4"/><ellipse cx="928.5" cy="854.2" rx="8.300" ry="5.600" transform="rotate(-24 928.5 854.2)" fill="#0a0a0a"/><ellipse cx="928.5" cy="854.2" rx="6.400" ry="1.900" transform="rotate(-33 928.5 854.2)" fill="#fffff4"/><path d="M935.8 789.6V852.2" stroke="#0a0a0a" stroke-width="1.300"/><rect x="974" y="824.1999999999999" width="15" height="6.200" fill="#0a0a0a"/><ellipse cx="1049.3" cy="830.4" rx="8.300" ry="5.600" transform="rotate(-24 1049.3 830.4)" fill="#0a0a0a"/><ellipse cx="1049.3" cy="842.3" rx="8.300" ry="5.600" transform="rotate(-24 1049.3 842.3)" fill="#0a0a0a"/><ellipse cx="1049.3" cy="860.1500000000001" rx="8.300" ry="5.600" transform="rotate(-24 1049.3 860.1500000000001)" fill="#0a0a0a"/><path d="M1056.6 789.6V858.1500000000001" stroke="#0a0a0a" stroke-width="1.300"/><g transform="translate(1091.7 830.4)"><circle cx="-4.800" cy="-8.200" r="3.100" fill="#0a0a0a"/><path d="M-7.300 -6.500c3.500 2.300 8.500 1 11.300-3.700l1.200.4L-1 11.800l-2-.7L3.200 -5.200c-3 3-7 3.200-10.500.7z" fill="#0a0a0a"/></g><ellipse cx="1135.9" cy="818.5" rx="8.300" ry="5.600" transform="rotate(-24 1135.9 818.5)" fill="#0a0a0a"/><ellipse cx="1135.9" cy="830.4" rx="8.300" ry="5.600" transform="rotate(-24 1135.9 830.4)" fill="#0a0a0a"/><ellipse cx="1135.9" cy="842.3" rx="8.300" ry="5.600" transform="rotate(-24 1135.9 842.3)" fill="#0a0a0a"/><path d="M1128.5 820.5V883" stroke="#0a0a0a" stroke-width="1.300"/><path d="M1128.2 883c.5-6.500 11.500-11.500 10-22.500c-.3-2.500-1-4.500-2-6.500c2 8.500-1.500 13.500-8 16.500z" fill="#0a0a0a"/><path transform="translate(1173.8 830.4)" d="M-4.200 -17.500L4.800 -7C1.200 -3.500 1 .5 5.800 6.500C1.500 4.300 -2.500 6.500 -.8 10.800C.2 13.500 2 15.500 4 18C-3.500 15 -8.500 8.500 -6 4C-4.500 1.800 -2 1.800 .3 2.800L-6.500 -5.200C-2.500 -8 -2 -11.500 -5.500 -16.500z" fill="#0a0a0a"/><path d="M1203.8 866.1H1227.3" stroke="#0a0a0a" stroke-width="1.300"/><ellipse cx="1215.8" cy="842.3" rx="8.300" ry="5.600" transform="rotate(-24 1215.8 842.3)" fill="#0a0a0a"/><ellipse cx="1215.8" cy="854.2" rx="8.300" ry="5.600" transform="rotate(-24 1215.8 854.2)" fill="#0a0a0a"/><ellipse cx="1215.8" cy="866.1" rx="8.300" ry="5.600" transform="rotate(-24 1215.8 866.1)" fill="#0a0a0a"/><path d="M1223.1 801.8V864.1" stroke="#0a0a0a" stroke-width="1.300"/><path d="M1228 837.3C1243.3 831.3 1263.7 831.3 1279 837.3C1263.7 832.9 1243.3 832.9 1228 837.3z" fill="#0a0a0a" stroke="#0a0a0a" stroke-width=".5"/><path d="M1228 859.2C1243.3 865.2 1263.7 865.2 1279 859.2C1263.7 863.6 1243.3 863.6 1228 859.2z" fill="#0a0a0a" stroke="#0a0a0a" stroke-width=".5"/><path d="M1228 871.1C1243.3 877.1 1263.7 877.1 1279 871.1C1263.7 875.5 1243.3 875.5 1228 871.1z" fill="#0a0a0a" stroke="#0a0a0a" stroke-width=".5"/><path d="M1277 866.1H1300.5" stroke="#0a0a0a" stroke-width="1.300"/><ellipse cx="1289" cy="842.3" rx="8.300" ry="5.600" transform="rotate(-24 1289 842.3)" fill="#0a0a0a"/><ellipse cx="1289" cy="854.2" rx="8.300" ry="5.600" transform="rotate(-24 1289 854.2)" fill="#0a0a0a"/><ellipse cx="1289" cy="866.1" rx="8.300" ry="5.600" transform="rotate(-24 1289 866.1)" fill="#0a0a0a"/><path d="M1296.3 801.8V864.1" stroke="#0a0a0a" stroke-width="1.300"/><path transform="translate(1339 830.4)" d="M-4.200 -17.500L4.800 -7C1.200 -3.500 1 .5 5.800 6.500C1.500 4.300 -2.500 6.500 -.8 10.800C.2 13.500 2 15.500 4 18C-3.500 15 -8.500 8.500 -6 4C-4.500 1.800 -2 1.800 .3 2.800L-6.500 -5.200C-2.500 -8 -2 -11.500 -5.500 -16.500z" fill="#0a0a0a"/><rect x="1376.6" y="824.1999999999999" width="15" height="6.200" fill="#0a0a0a"/><path d="M1439.6 866.1H1463.1" stroke="#0a0a0a" stroke-width="1.300"/><ellipse cx="1451.6" cy="842.3" rx="8.300" ry="5.600" transform="rotate(-24 1451.6 842.3)" fill="#0a0a0a"/><ellipse cx="1451.6" cy="854.2" rx="8.300" ry="5.600" transform="rotate(-24 1451.6 854.2)" fill="#0a0a0a"/><ellipse cx="1451.6" cy="866.1" rx="8.300" ry="5.600" transform="rotate(-24 1451.6 866.1)" fill="#0a0a0a"/><path d="M1458.8999999999999 801.8V864.1" stroke="#0a0a0a" stroke-width="1.300"/><g transform="translate(1502.8 830.4)"><circle cx="-4.800" cy="-8.200" r="3.100" fill="#0a0a0a"/><path d="M-7.300 -6.500c3.500 2.300 8.500 1 11.300-3.700l1.200.4L-1 11.800l-2-.7L3.200 -5.200c-3 3-7 3.200-10.500.7z" fill="#0a0a0a"/></g><ellipse cx="1544.5" cy="836.3499999999999" rx="8.300" ry="5.600" transform="rotate(-24 1544.5 836.3499999999999)" fill="#0a0a0a"/><ellipse cx="1544.5" cy="848.25" rx="8.300" ry="5.600" transform="rotate(-24 1544.5 848.25)" fill="#0a0a0a"/><ellipse cx="1544.5" cy="860.1500000000001" rx="8.300" ry="5.600" transform="rotate(-24 1544.5 860.1500000000001)" fill="#0a0a0a"/><path d="M1551.8 794.8V858.1500000000001" stroke="#0a0a0a" stroke-width="1.300"/><path d="M1551.5 794.8c.5 6.500 11.500 11.500 10 22.500c-.3 2.500-1 4.500-2 6.500c2-8.500-1.500-13.500-8-16.500z" fill="#0a0a0a"/><path transform="translate(1594.2 830.4)" d="M-4.200 -17.500L4.800 -7C1.200 -3.500 1 .5 5.800 6.500C1.500 4.300 -2.500 6.500 -.8 10.800C.2 13.500 2 15.500 4 18C-3.500 15 -8.500 8.500 -6 4C-4.500 1.800 -2 1.800 .3 2.800L-6.500 -5.200C-2.500 -8 -2 -11.500 -5.500 -16.500z" fill="#0a0a0a"/><ellipse cx="1638.7" cy="830.4" rx="8.300" ry="5.600" transform="rotate(-24 1638.7 830.4)" fill="#0a0a0a"/><ellipse cx="1638.7" cy="842.3" rx="8.300" ry="5.600" transform="rotate(-24 1638.7 842.3)" fill="#0a0a0a"/><ellipse cx="1638.7" cy="854.2" rx="8.300" ry="5.600" transform="rotate(-24 1638.7 854.2)" fill="#0a0a0a"/><path d="M1646.0 789.6V852.2" stroke="#0a0a0a" stroke-width="1.300"/><path d="M1651 824.4C1663.6 819.4 1680.4 819.4 1693 824.4C1680.4 821.0 1663.6 821.0 1651 824.4z" fill="#0a0a0a" stroke="#0a0a0a" stroke-width=".5"/><path d="M1651 847.8C1663.6 853.3 1680.4 853.3 1693 847.8C1680.4 851.6999999999999 1663.6 851.6999999999999 1651 847.8z" fill="#0a0a0a" stroke="#0a0a0a" stroke-width=".5"/><path d="M1651 859.7C1663.6 865.7 1680.4 865.7 1693 859.7C1680.4 864.1 1663.6 864.1 1651 859.7z" fill="#0a0a0a" stroke="#0a0a0a" stroke-width=".5"/><ellipse cx="1704.4" cy="830.4" rx="8.300" ry="5.600" transform="rotate(-24 1704.4 830.4)" fill="#0a0a0a"/><ellipse cx="1704.4" cy="830.4" rx="6.400" ry="1.900" transform="rotate(-33 1704.4 830.4)" fill="#fffff4"/><ellipse cx="1704.4" cy="842.3" rx="8.300" ry="5.600" transform="rotate(-24 1704.4 842.3)" fill="#0a0a0a"/><ellipse cx="1704.4" cy="842.3" rx="6.400" ry="1.900" transform="rotate(-33 1704.4 842.3)" fill="#fffff4"/><ellipse cx="1704.4" cy="854.2" rx="8.300" ry="5.600" transform="rotate(-24 1704.4 854.2)" fill="#0a0a0a"/><ellipse cx="1704.4" cy="854.2" rx="6.400" ry="1.900" transform="rotate(-33 1704.4 854.2)" fill="#fffff4"/><path d="M1711.7 789.6V852.2" stroke="#0a0a0a" stroke-width="1.300"/><circle cx="1718.6" cy="823.3" r="2.200" fill="#0a0a0a"/><circle cx="1718.6" cy="835" r="2.200" fill="#0a0a0a"/><circle cx="1718.6" cy="847" r="2.200" fill="#0a0a0a"/><path transform="translate(1763 830.4)" d="M-4.200 -17.500L4.800 -7C1.200 -3.500 1 .5 5.800 6.500C1.500 4.300 -2.500 6.500 -.8 10.800C.2 13.500 2 15.500 4 18C-3.500 15 -8.500 8.500 -6 4C-4.500 1.800 -2 1.800 .3 2.800L-6.500 -5.200C-2.500 -8 -2 -11.500 -5.500 -16.500z" fill="#0a0a0a"/><path d="M1815.9 866.1H1839.4" stroke="#0a0a0a" stroke-width="1.300"/><ellipse cx="1827.9" cy="842.3" rx="8.300" ry="5.600" transform="rotate(-24 1827.9 842.3)" fill="#0a0a0a"/><ellipse cx="1827.9" cy="854.2" rx="8.300" ry="5.600" transform="rotate(-24 1827.9 854.2)" fill="#0a0a0a"/><ellipse cx="1827.9" cy="866.1" rx="8.300" ry="5.600" transform="rotate(-24 1827.9 866.1)" fill="#0a0a0a"/><path d="M1835.2 801.8V864.1" stroke="#0a0a0a" stroke-width="1.300"/><g transform="translate(1879 830.4)"><circle cx="-4.800" cy="-8.200" r="3.100" fill="#0a0a0a"/><path d="M-7.300 -6.500c3.500 2.300 8.500 1 11.300-3.700l1.200.4L-1 11.800l-2-.7L3.200 -5.200c-3 3-7 3.200-10.500.7z" fill="#0a0a0a"/></g><ellipse cx="1921.5" cy="836.3499999999999" rx="8.300" ry="5.600" transform="rotate(-24 1921.5 836.3499999999999)" fill="#0a0a0a"/><ellipse cx="1921.5" cy="848.25" rx="8.300" ry="5.600" transform="rotate(-24 1921.5 848.25)" fill="#0a0a0a"/><ellipse cx="1921.5" cy="860.1500000000001" rx="8.300" ry="5.600" transform="rotate(-24 1921.5 860.1500000000001)" fill="#0a0a0a"/><ellipse cx="363.3" cy="948.7" rx="8.300" ry="5.600" transform="rotate(-24 363.3 948.7)" fill="#0a0a0a"/><path d="M356.0 950.7V989.3" stroke="#0a0a0a" stroke-width="1.300"/><path d="M355.7 989.3c.5-6.500 11.500-11.500 10-22.500c-.3-2.500-1-4.500-2-6.500c2 8.500-1.500 13.500-8 16.500z" fill="#0a0a0a"/><path d="M375.5 943.7C383.3 938.7 393.7 938.7 401.5 943.7C393.7 940.3000000000001 383.3 940.3000000000001 375.5 943.7z" fill="#0a0a0a" stroke="#0a0a0a" stroke-width=".5"/><ellipse cx="412.7" cy="948.7" rx="8.300" ry="5.600" transform="rotate(-24 412.7 948.7)" fill="#0a0a0a"/><path d="M405.4 950.7V989.3" stroke="#0a0a0a" stroke-width="1.300"/><ellipse cx="457.8" cy="942.8" rx="8.300" ry="5.600" transform="rotate(-24 457.8 942.8)" fill="#0a0a0a"/><path d="M450.5 944.8V982.8" stroke="#0a0a0a" stroke-width="1.300"/><path d="M470.5 937.3C482.35 932.3 498.15 932.3 510 937.3C498.15 933.9 482.35 933.9 470.5 937.3z" fill="#0a0a0a" stroke="#0a0a0a" stroke-width=".5"/><ellipse cx="522.2" cy="942.8" rx="8.300" ry="5.600" transform="rotate(-24 522.2 942.8)" fill="#0a0a0a"/><path d="M514.9000000000001 944.8V982.8" stroke="#0a0a0a" stroke-width="1.300"/><path transform="translate(563 948.7)" d="M-4.200 -17.500L4.800 -7C1.200 -3.500 1 .5 5.800 6.500C1.500 4.300 -2.500 6.500 -.8 10.800C.2 13.500 2 15.500 4 18C-3.500 15 -8.500 8.500 -6 4C-4.500 1.800 -2 1.800 .3 2.800L-6.500 -5.200C-2.500 -8 -2 -11.500 -5.500 -16.500z" fill="#0a0a0a"/><rect x="601" y="942.5" width="15" height="6.200" fill="#0a0a0a"/><ellipse cx="676.3" cy="954.6" rx="8.300" ry="5.600" transform="rotate(-24 676.3 954.6)" fill="#0a0a0a"/><path d="M683.6 912.7V952.6" stroke="#0a0a0a" stroke-width="1.300"/><circle cx="691" cy="952.9" r="2.200" fill="#0a0a0a"/><ellipse cx="769.8" cy="948.7" rx="8.300" ry="5.600" transform="rotate(-24 769.8 948.7)" fill="#0a0a0a"/><path d="M762.5 950.7V989.3" stroke="#0a0a0a" stroke-width="1.300"/><path d="M762.2 989.3c.5-6.500 11.500-11.500 10-22.500c-.3-2.500-1-4.500-2-6.500c2 8.500-1.500 13.500-8 16.500z" fill="#0a0a0a"/><path d="M782.5 943.7C790.15 938.7 800.35 938.7 808 943.7C800.35 940.3000000000001 790.15 940.3000000000001 782.5 943.7z" fill="#0a0a0a" stroke="#0a0a0a" stroke-width=".5"/><ellipse cx="819.6" cy="948.7" rx="8.300" ry="5.600" transform="rotate(-24 819.6 948.7)" fill="#0a0a0a"/><path d="M812.3000000000001 950.7V989.3" stroke="#0a0a0a" stroke-width="1.300"/><ellipse cx="864.2" cy="942.8" rx="8.300" ry="5.600" transform="rotate(-24 864.2 942.8)" fill="#0a0a0a"/><path d="M856.9000000000001 944.8V982.8" stroke="#0a0a0a" stroke-width="1.300"/><path d="M877.5 937.3C889.95 932.3 906.55 932.3 919 937.3C906.55 933.9 889.95 933.9 877.5 937.3z" fill="#0a0a0a" stroke="#0a0a0a" stroke-width=".5"/><ellipse cx="930" cy="942.8" rx="9.300" ry="5.600" fill="#0a0a0a"/><ellipse cx="930" cy="942.8" rx="4.200" ry="4.600" transform="rotate(-35 930 942.8)" fill="#fffff4"/><ellipse cx="1050.4" cy="931.0" rx="8.300" ry="5.600" transform="rotate(-24 1050.4 931.0)" fill="#0a0a0a"/><ellipse cx="1050.4" cy="931.0" rx="6.400" ry="1.900" transform="rotate(-33 1050.4 931.0)" fill="#fffff4"/><path d="M1043.1000000000001 933.0V972.3" stroke="#0a0a0a" stroke-width="1.300"/><circle cx="1063.4" cy="929.8" r="2.200" fill="#0a0a0a"/><ellipse cx="1215.8" cy="954.6" rx="8.300" ry="5.600" transform="rotate(-24 1215.8 954.6)" fill="#0a0a0a"/><path d="M1223.1 912.7V952.6" stroke="#0a0a0a" stroke-width="1.300"/><path d="M1228.5 959.1C1243.65 965.1 1263.85 965.1 1279 959.1C1263.85 963.5 1243.65 963.5 1228.5 959.1z" fill="#0a0a0a" stroke="#0a0a0a" stroke-width=".5"/><ellipse cx="1289" cy="954.6" rx="8.300" ry="5.600" transform="rotate(-24 1289 954.6)" fill="#0a0a0a"/><path d="M1296.3 912.7V952.6" stroke="#0a0a0a" stroke-width="1.300"/><path transform="translate(1339 948.7)" d="M-4.200 -17.500L4.800 -7C1.200 -3.500 1 .5 5.800 6.500C1.500 4.300 -2.500 6.500 -.8 10.800C.2 13.500 2 15.500 4 18C-3.500 15 -8.500 8.500 -6 4C-4.500 1.800 -2 1.800 .3 2.800L-6.500 -5.200C-2.500 -8 -2 -11.500 -5.500 -16.500z" fill="#0a0a0a"/><rect x="1376.6" y="942.5" width="15" height="6.200" fill="#0a0a0a"/><ellipse cx="1451.6" cy="954.6" rx="8.300" ry="5.600" transform="rotate(-24 1451.6 954.6)" fill="#0a0a0a"/><path d="M1458.9 912.7V952.6" stroke="#0a0a0a" stroke-width="1.300"/><circle cx="1466" cy="953" r="2.200" fill="#0a0a0a"/><ellipse cx="1545.5" cy="948.7" rx="8.300" ry="5.600" transform="rotate(-24 1545.5 948.7)" fill="#0a0a0a"/><path d="M1538.2 950.7V989.5" stroke="#0a0a0a" stroke-width="1.300"/><path d="M1537.9 989.5c.5-6.500 11.500-11.500 10-22.500c-.3-2.500-1-4.500-2-6.500c2 8.500-1.500 13.500-8 16.500z" fill="#0a0a0a"/><path d="M1557 943.7C1564.95 938.7 1575.55 938.7 1583.5 943.7C1575.55 940.3000000000001 1564.95 940.3000000000001 1557 943.7z" fill="#0a0a0a" stroke="#0a0a0a" stroke-width=".5"/><ellipse cx="1594.2" cy="948.7" rx="8.300" ry="5.600" transform="rotate(-24 1594.2 948.7)" fill="#0a0a0a"/><path d="M1586.9 950.7V989.5" stroke="#0a0a0a" stroke-width="1.300"/><ellipse cx="1639.2" cy="942.8" rx="8.300" ry="5.600" transform="rotate(-24 1639.2 942.8)" fill="#0a0a0a"/><path d="M1631.9 944.8V983" stroke="#0a0a0a" stroke-width="1.300"/><path d="M1652 937.3C1664.6 932.3 1681.4 932.3 1694 937.3C1681.4 933.9 1664.6 933.9 1652 937.3z" fill="#0a0a0a" stroke="#0a0a0a" stroke-width=".5"/><ellipse cx="1705.5" cy="942.8" rx="9.300" ry="5.600" fill="#0a0a0a"/><ellipse cx="1705.5" cy="942.8" rx="4.200" ry="4.600" transform="rotate(-35 1705.5 942.8)" fill="#fffff4"/><ellipse cx="1827.9" cy="954.6" rx="8.300" ry="5.600" transform="rotate(-24 1827.9 954.6)" fill="#0a0a0a"/><path d="M1835.2 912.7V952.6" stroke="#0a0a0a" stroke-width="1.300"/><circle cx="1843.2" cy="953" r="2.200" fill="#0a0a0a"/><ellipse cx="1922" cy="948.7" rx="8.300" ry="5.600" transform="rotate(-24 1922 948.7)" fill="#0a0a0a"/><path d="M1914.7 950.7V989.5" stroke="#0a0a0a" stroke-width="1.300"/><path d="M1914.4 989.5c.5-6.500 11.500-11.500 10-22.500c-.3-2.500-1-4.500-2-6.500c2 8.500-1.500 13.500-8 16.500z" fill="#0a0a0a"/><text x="492" y="783" font-size="19.500" fill="#0a0a0a" class="sf">31</text><text x="646.5" y="783" font-size="19.500" fill="#0a0a0a" class="sf">32</text><text x="899" y="783" font-size="19.500" fill="#0a0a0a" class="sf">33</text><text x="1019.5" y="783" font-size="19.500" fill="#0a0a0a" class="sf">34</text><text x="1259.5" y="783" font-size="19.500" fill="#0a0a0a" class="sf">35</text><text x="1421" y="783" font-size="19.500" fill="#0a0a0a" class="sf">36</text><text x="1673.5" y="783" font-size="19.500" fill="#0a0a0a" class="sf">37</text><text x="1798.3" y="783" font-size="19.500" fill="#0a0a0a" class="sf">38</text><text x="335.300" y="830.2" font-size="30.500" font-weight="bold" text-anchor="middle" fill="#0a0a0a" class="sf">4</text><text x="335.300" y="853.9" font-size="30.500" font-weight="bold" text-anchor="middle" fill="#0a0a0a" class="sf">4</text><text x="335.300" y="948.7" font-size="30.500" font-weight="bold" text-anchor="middle" fill="#0a0a0a" class="sf">4</text><text x="335.300" y="972.4" font-size="30.500" font-weight="bold" text-anchor="middle" fill="#0a0a0a" class="sf">4</text></svg>
<div class="t" style="left:388.5px;top:1031px;font-family:'Liberation Serif',serif;font-style:italic;font-weight:bold;font-size:26px;color:#0a0a0a;letter-spacing:-.6px">Ped.</div>
<div class="t" style="left:485px;top:1031px;font-family:'Liberation Serif',serif;font-style:italic;font-weight:bold;font-size:26px;color:#0a0a0a;letter-spacing:-.6px">Ped.</div>
<div class="t" style="left:679.5px;top:1031px;font-family:'Liberation Serif',serif;font-style:italic;font-weight:bold;font-size:26px;color:#0a0a0a;letter-spacing:-.6px">Ped.</div>
<div class="t" style="left:801.3px;top:1031px;font-family:'Liberation Serif',serif;font-style:italic;font-weight:bold;font-size:26px;color:#0a0a0a;letter-spacing:-.6px">Ped.</div>
<div class="t" style="left:888.4px;top:1031px;font-family:'Liberation Serif',serif;font-style:italic;font-weight:bold;font-size:26px;color:#0a0a0a;letter-spacing:-.6px">Ped.</div>
<div class="t" style="left:1049.4px;top:1031px;font-family:'Liberation Serif',serif;font-style:italic;font-weight:bold;font-size:26px;color:#0a0a0a;letter-spacing:-.6px">Ped.</div>
<div class="t" style="left:1241px;top:1031px;font-family:'Liberation Serif',serif;font-style:italic;font-weight:bold;font-size:26px;color:#0a0a0a;letter-spacing:-.6px">Ped.</div>
<div class="t" style="left:1451.9px;top:1031px;font-family:'Liberation Serif',serif;font-style:italic;font-weight:bold;font-size:26px;color:#0a0a0a;letter-spacing:-.6px">Ped.</div>
<div class="t" style="left:1570px;top:1031px;font-family:'Liberation Serif',serif;font-style:italic;font-weight:bold;font-size:26px;color:#0a0a0a;letter-spacing:-.6px">Ped.</div>
<div class="t" style="left:1656.6px;top:1031px;font-family:'Liberation Serif',serif;font-style:italic;font-weight:bold;font-size:26px;color:#0a0a0a;letter-spacing:-.6px">Ped.</div>
<div class="t" style="left:1827px;top:1031px;font-family:'Liberation Serif',serif;font-style:italic;font-weight:bold;font-size:26px;color:#0a0a0a;letter-spacing:-.6px">Ped.</div>
<div class="t c" style="left:435px;top:1034px;width:30px;height:24px;font-family:'DejaVu Sans',sans-serif;font-size:23.500px;font-weight:bold;color:#0a0a0a;line-height:24px">❋</div>
<div class="t c" style="left:651.6px;top:1034px;width:30px;height:24px;font-family:'DejaVu Sans',sans-serif;font-size:23.500px;font-weight:bold;color:#0a0a0a;line-height:24px">❋</div>
<div class="t c" style="left:743.4px;top:1034px;width:30px;height:24px;font-family:'DejaVu Sans',sans-serif;font-size:23.500px;font-weight:bold;color:#0a0a0a;line-height:24px">❋</div>
<div class="t c" style="left:841.9px;top:1034px;width:30px;height:24px;font-family:'DejaVu Sans',sans-serif;font-size:23.500px;font-weight:bold;color:#0a0a0a;line-height:24px">❋</div>
<div class="t c" style="left:1023.4000000000001px;top:1034px;width:30px;height:24px;font-family:'DejaVu Sans',sans-serif;font-size:23.500px;font-weight:bold;color:#0a0a0a;line-height:24px">❋</div>
<div class="t c" style="left:1191.9px;top:1034px;width:30px;height:24px;font-family:'DejaVu Sans',sans-serif;font-size:23.500px;font-weight:bold;color:#0a0a0a;line-height:24px">❋</div>
<div class="t c" style="left:1426px;top:1034px;width:30px;height:24px;font-family:'DejaVu Sans',sans-serif;font-size:23.500px;font-weight:bold;color:#0a0a0a;line-height:24px">❋</div>
<div class="t c" style="left:1520px;top:1034px;width:30px;height:24px;font-family:'DejaVu Sans',sans-serif;font-size:23.500px;font-weight:bold;color:#0a0a0a;line-height:24px">❋</div>
<div class="t c" style="left:1615px;top:1034px;width:30px;height:24px;font-family:'DejaVu Sans',sans-serif;font-size:23.500px;font-weight:bold;color:#0a0a0a;line-height:24px">❋</div>
<div class="t c" style="left:1800px;top:1034px;width:30px;height:24px;font-family:'DejaVu Sans',sans-serif;font-size:23.500px;font-weight:bold;color:#0a0a0a;line-height:24px">❋</div>
<div class="t c" style="left:1893px;top:1034px;width:30px;height:24px;font-family:'DejaVu Sans',sans-serif;font-size:23.500px;font-weight:bold;color:#0a0a0a;line-height:24px">❋</div>
<div style="left:352.5px;top:1034px;width:12px;height:24px;overflow:hidden"><div class="t c" style="left:-12px;top:0px;width:30px;height:24px;font-family:'DejaVu Sans',sans-serif;font-size:23.500px;font-weight:bold;color:#0a0a0a;line-height:24px">❋</div></div>
<div style="left:506.5px;top:745px;width:3.5px;height:368px;background:rgba(95,170,110,.75)"></div>
<svg style="left:501px;top:738.5px;" width="15" height="14" viewBox="0 0 15 14"><path d="M1 4a3.500 3.500 0 0 1 3.500-3.500h6A3.500 3.500 0 0 1 14 4c0 3-3.500 6-6.500 9.500C4.500 10 1 7 1 4z" fill="#5fc96d" stroke="#3f9a4c" stroke-width=".8"/></svg>
</body></html>
